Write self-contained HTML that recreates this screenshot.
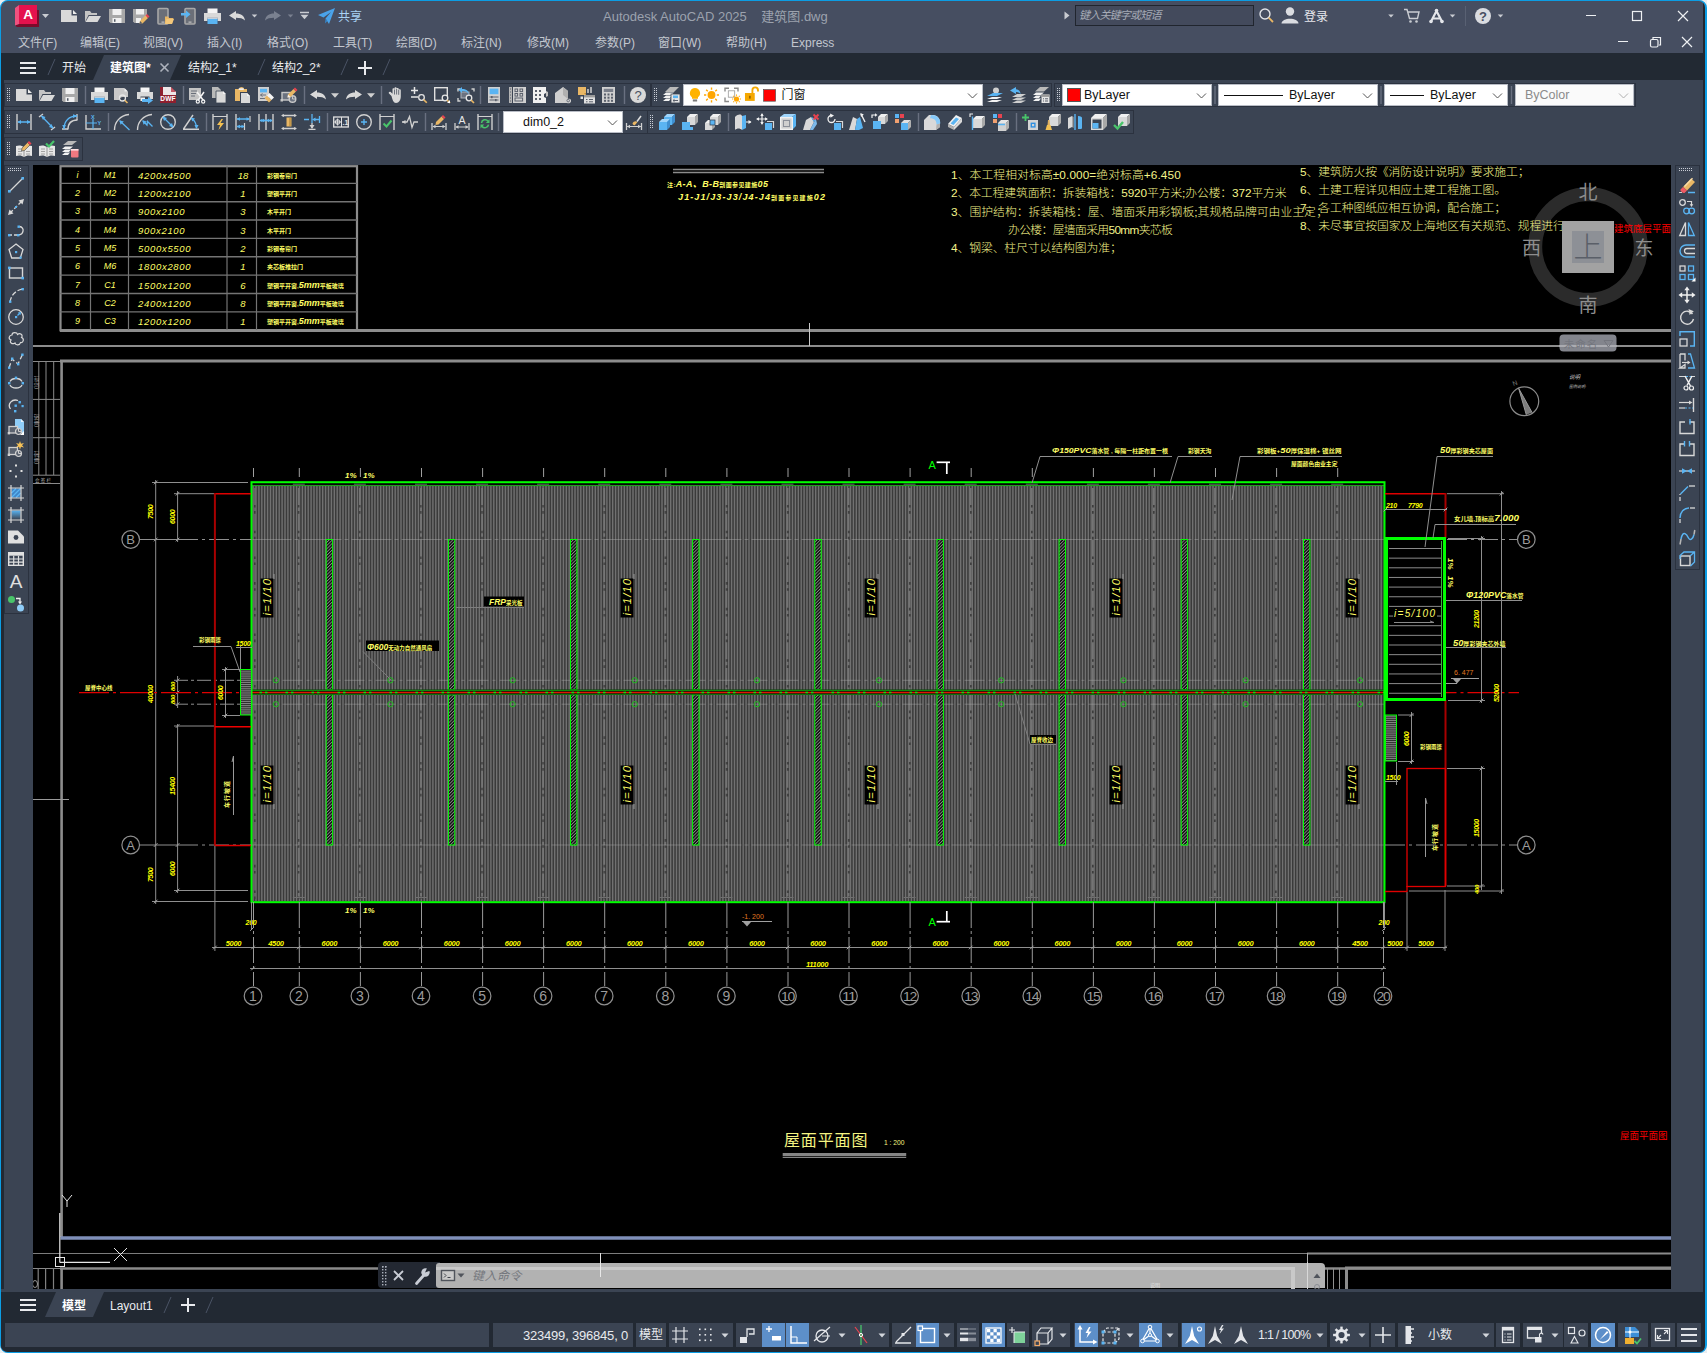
<!DOCTYPE html><html><head><meta charset="utf-8"><title>AutoCAD</title><style>
html,body{margin:0;padding:0}
body{width:1707px;height:1353px;overflow:hidden;background:#e9edf0;font-family:"Liberation Sans","Noto Sans CJK SC",sans-serif;font-size:12px;color:#d7dae0;position:relative}
.a{position:absolute}
#win{position:absolute;left:0;top:0;width:1707px;height:1353px;box-sizing:border-box;border:1px solid #0c9de4;border-right-width:2px;border-bottom-width:1px;border-radius:8px;background:#464e61;overflow:hidden}
#in{position:absolute;left:-1px;top:-1px;width:1707px;height:1353px}
.t{position:absolute;white-space:nowrap;line-height:1}
.pn{position:absolute;box-sizing:border-box;border:1px solid #2b323f;background:#3b4453}
.sp{position:absolute;background:#3b4453}
.ic{position:absolute;overflow:visible}
.dd{position:absolute;background:#fff;color:#111;box-sizing:border-box;border:1px solid #b9bdc6}
</style></head><body><div id="win"><div id="in"><div class="a" style="left:1px;top:53px;width:1703px;height:27px;background:#222933;"></div>
<div class="a" style="left:1px;top:80px;width:1703px;height:85px;background:#3b4453;"></div>
<div class="a" style="left:1px;top:80px;width:3px;height:1272px;background:#222933;"></div>
<div class="a" style="left:4px;top:165px;width:29px;height:1124px;background:#3b4453;"></div>
<div class="a" style="left:1671px;top:165px;width:33px;height:1124px;background:#3b4453;"></div>
<div class="a" style="left:1px;top:1289px;width:1703px;height:3px;background:#3b4453;"></div>
<div class="a" style="left:1px;top:1292px;width:1703px;height:61px;background:#222933;"></div>
<div class="a" style="left:1703px;top:1px;width:3px;height:1351px;background:#222730;"></div>
<svg class="a" style="left:0;top:0" width="1707" height="54"><polygon points="15,25.5 19,24 37,24 37,10 39,10 39,27 17,27" fill="#7c0b2b"/><polygon points="15,8 19,5 19,24 15,25.5" fill="#f0527f"/><rect x="19" y="5" width="18" height="19" fill="#e5114d"/><text x="28.2" y="19.4" font-size="13.5" font-weight="bold" fill="#fff" text-anchor="middle" font-family='"Liberation Sans",sans-serif'>A</text><polygon points="42.0,14.0 49.0,14.0 45.5,18.0" fill="#c9ccd2"/><g transform="translate(61 8)"><path d="M0 2H10.5V7.5H16V14H0Z" fill="#d9d9d9" stroke="none" stroke-width="1" /><path d="M12 2L16 6H12Z" fill="#ececec" stroke="none" stroke-width="1" /></g><g transform="translate(85 8)"><path d="M0 3H5L6.5 5H12V7H3.5L0 14Z" fill="#c4c4c4" stroke="none" stroke-width="1" /><path d="M4 8H16L12.5 14H0.5Z" fill="#d9d9d9" stroke="none" stroke-width="1" /></g><g transform="translate(109 8)"><path d="M0 1H16V15H1.5L0 13.5Z" fill="#a8a8a8" stroke="none" stroke-width="1" /><rect x="3.5" y="1" width="9" height="6" fill="#f0f0f0" stroke="none" stroke-width="1" /><rect x="3.5" y="10" width="9" height="5" fill="#f0f0f0" stroke="none" stroke-width="1" /><rect x="5" y="11.2" width="1.5" height="2.6" fill="#555c68" stroke="none" stroke-width="1" /></g><g transform="translate(133 8)"><path d="M0 1H14V10L9 15H1.5L0 13.5Z" fill="#a8a8a8" stroke="none" stroke-width="1" /><rect x="3" y="1" width="8" height="5.5" fill="#f0f0f0" stroke="none" stroke-width="1" /><path d="M3 10H8V15H3Z" fill="#f0f0f0" stroke="none" stroke-width="1" /><path d="M7 13L12.5 7.5L15 10L9.5 15.5L6.5 16Z" fill="#e9b765" stroke="none" stroke-width="1" /><path d="M12.5 7.5L14 6L16.5 8.5L15 10Z" fill="#e9434f" stroke="none" stroke-width="1" /><path d="M7 13L9.5 15.5L6.5 16Z" fill="#555c68" stroke="none" stroke-width="1" /></g><g transform="translate(157 8)"><rect x="1" y="0.5" width="10" height="15.5" fill="#6b6f78" stroke="#a8a8a8" stroke-width="1.6" rx="1"/><rect x="4.5" y="13.6" width="3" height="1" fill="#d0d0d0" stroke="none" stroke-width="1" /><path d="M8 8.5H11L12 10H16.5L15 16H8Z" fill="#e9b765" stroke="none" stroke-width="1" /><path d="M9.5 11H17L15 16H8Z" fill="#f3c77a" stroke="none" stroke-width="1" /></g><g transform="translate(181 8)"><rect x="4" y="0.5" width="10" height="15.5" fill="#6b6f78" stroke="#a8a8a8" stroke-width="1.6" rx="1"/><rect x="7.5" y="13.6" width="3" height="1" fill="#d0d0d0" stroke="none" stroke-width="1" /><path d="M0 5H5V2.5L9.5 6.2L5 10V7.5H0Z" fill="#5ab4f2" stroke="none" stroke-width="1" /></g><g transform="translate(204 8)"><rect x="3.5" y="0.5" width="10" height="5" fill="#f4f4f4" stroke="none" stroke-width="1" /><path d="M0 5H17V13H13.5V9.5H3.5V13H0Z" fill="#d9d9d9" stroke="none" stroke-width="1" /><rect x="3.5" y="10.5" width="10" height="5.5" fill="#5ab4f2" stroke="none" stroke-width="1" /><rect x="3.5" y="9.5" width="10" height="1.2" fill="#f4f4f4" stroke="none" stroke-width="1" /></g><g transform="translate(229 8)"><path d="M0 7.5L7 3V5.5C12 5.5 15.5 8 16 12.5C14 10.5 11 9.8 7 9.8V12Z" fill="#d9d9d9" stroke="none" stroke-width="1" /></g><g transform="translate(265 8)"><path d="M16 7.5L9 3V5.5C4 5.5 0.5 8 0 12.5C2 10.5 5 9.8 9 9.8V12Z" fill="#7a8190" stroke="none" stroke-width="1" /></g><polygon points="251.75,14.4 257.25,14.4 254.5,17.6" fill="#c9ccd2"/><polygon points="287.75,14.4 293.25,14.4 290.5,17.6" fill="#7a8190"/><line x1="300" y1="12.5" x2="309" y2="12.5" stroke="#c9ccd2" stroke-width="1.4"/><polygon points="300.5,14.8 308.5,14.8 304.5,19.2" fill="#c9ccd2"/><path d="M318 15L335 8L329 24L325.5 18.5L331 12L323.5 17.5Z" fill="#4aa3ea" stroke="none" stroke-width="1" /><path d="M325.5 18.5L325 23.5L327.5 21Z" fill="#3684c6" stroke="none" stroke-width="1" /><path d="M1064.5 11.5L1069.5 15.5L1064.5 19.5Z" fill="#c9ccd2" stroke="none" stroke-width="1" /><circle cx="1265" cy="14" r="5" fill="none" stroke="#e0e2e6" stroke-width="1.4"/><path d="M1268.7 17.7L1273 22" fill="none" stroke="#e9b765" stroke-width="1.8" /><circle cx="1290" cy="11.5" r="4.2" fill="#dadce1" stroke="none" stroke-width="0"/><path d="M1281.5 23.5C1281.5 17 1298.5 17 1298.5 23.5Z" fill="#dadce1" stroke="none" stroke-width="1" /><polygon points="1388.25,14.4 1393.75,14.4 1391,17.6" fill="#c9ccd2"/><path d="M1404 9.5H1407L1409.5 18.5H1417.5L1419 12H1408" fill="none" stroke="#c9ccd2" stroke-width="1.4" /><circle cx="1410.5" cy="21.5" r="1.3" fill="#c9ccd2" stroke="none" stroke-width="0"/><circle cx="1416.5" cy="21.5" r="1.3" fill="#c9ccd2" stroke="none" stroke-width="0"/><path d="M1436.5 11L1431 21.5M1436.5 11L1442 21.5M1432.5 18.5H1440.5" fill="none" stroke="#e4e6ea" stroke-width="2.2" /><circle cx="1436.5" cy="10.5" r="1.8" fill="#e4e6ea" stroke="none" stroke-width="0"/><circle cx="1431" cy="21.5" r="1.8" fill="#e4e6ea" stroke="none" stroke-width="0"/><circle cx="1442" cy="21.5" r="1.8" fill="#e4e6ea" stroke="none" stroke-width="0"/><polygon points="1449.75,14.4 1455.25,14.4 1452.5,17.6" fill="#c9ccd2"/><line x1="1465.5" y1="6" x2="1465.5" y2="26" stroke="#596173" stroke-width="1"/><circle cx="1483" cy="16" r="8" fill="#dadce1" stroke="none" stroke-width="0"/><text x="1483" y="20.6" font-size="13" font-weight="bold" fill="#464e61" text-anchor="middle" font-family='"Liberation Sans",sans-serif'>?</text><polygon points="1497.75,14.4 1503.25,14.4 1500.5,17.6" fill="#c9ccd2"/><path d="M1586 15.5H1596" fill="none" stroke="#eef0f3" stroke-width="1.2" /><rect x="1632.5" y="11.5" width="9" height="9" fill="none" stroke="#eef0f3" stroke-width="1.2" /><path d="M1678 11L1688 21M1688 11L1678 21" fill="none" stroke="#eef0f3" stroke-width="1.2" /><path d="M1618 41.5H1628" fill="none" stroke="#eef0f3" stroke-width="1.2" /><rect x="1650.5" y="39.5" width="7.5" height="7.5" fill="none" stroke="#eef0f3" stroke-width="1.2" rx="1.5"/><path d="M1653 39V37.5H1660.5V45H1659" fill="none" stroke="#eef0f3" stroke-width="1.2" /><path d="M1682 37L1692 47M1692 37L1682 47" fill="none" stroke="#eef0f3" stroke-width="1.2" /></svg>
<div class="t" style="left:603px;top:9.6px;font-size:13px;color:#9ca2ae;">Autodesk AutoCAD 2025&nbsp;&nbsp;&nbsp;&nbsp;建筑图.dwg</div>
<div class="t" style="left:338px;top:10.5px;font-size:12px;color:#a9d2f3;">共享</div>
<div class="a" style="left:1075px;top:5px;width:179px;height:21px;box-sizing:border-box;border:1px solid #20252e;background:#434a5c"></div>
<div class="t" style="left:1079px;top:10.0px;font-size:11px;color:#a6abb6;letter-spacing:-0.8px"><i>键入关键字或短语</i></div>
<div class="t" style="left:1304px;top:10.5px;font-size:12px;color:#e6e8ec;">登录</div>
<div class="t" style="left:18px;top:36.5px;font-size:12px;color:#c3c7cf;">文件(F)</div>
<div class="t" style="left:80px;top:36.5px;font-size:12px;color:#c3c7cf;">编辑(E)</div>
<div class="t" style="left:143px;top:36.5px;font-size:12px;color:#c3c7cf;">视图(V)</div>
<div class="t" style="left:207px;top:36.5px;font-size:12px;color:#c3c7cf;">插入(I)</div>
<div class="t" style="left:267px;top:36.5px;font-size:12px;color:#c3c7cf;">格式(O)</div>
<div class="t" style="left:333px;top:36.5px;font-size:12px;color:#c3c7cf;">工具(T)</div>
<div class="t" style="left:396px;top:36.5px;font-size:12px;color:#c3c7cf;">绘图(D)</div>
<div class="t" style="left:461px;top:36.5px;font-size:12px;color:#c3c7cf;">标注(N)</div>
<div class="t" style="left:527px;top:36.5px;font-size:12px;color:#c3c7cf;">修改(M)</div>
<div class="t" style="left:595px;top:36.5px;font-size:12px;color:#c3c7cf;">参数(P)</div>
<div class="t" style="left:658px;top:36.5px;font-size:12px;color:#c3c7cf;">窗口(W)</div>
<div class="t" style="left:726px;top:36.5px;font-size:12px;color:#c3c7cf;">帮助(H)</div>
<div class="t" style="left:791px;top:36.5px;font-size:12px;color:#c3c7cf;">Express</div>
<svg class="a" style="left:0;top:53px" width="420" height="27"><polygon points="93,27 104,2 181,2 170,27" fill="#3b4453"/><g stroke="#4a5365" stroke-width="1"><line x1="48" y1="22" x2="55" y2="6"/><line x1="258" y1="22" x2="265" y2="6"/><line x1="341" y1="22" x2="348" y2="6"/><line x1="383" y1="22" x2="390" y2="6"/></g><g stroke="#e9ebee" stroke-width="2"><line x1="20" y1="10" x2="36" y2="10"/><line x1="20" y1="15" x2="36" y2="15"/><line x1="20" y1="20" x2="36" y2="20"/><line x1="358" y1="15" x2="372" y2="15"/><line x1="365" y1="8" x2="365" y2="22"/></g><g stroke="#aeb3bd" stroke-width="1.6"><line x1="160.5" y1="10.5" x2="168.5" y2="18.5"/><line x1="168.5" y1="10.5" x2="160.5" y2="18.5"/></g></svg>
<div class="t" style="left:62px;top:61.5px;font-size:12px;color:#e9ebee;">开始</div>
<div class="t" style="left:110px;top:61.5px;font-size:12px;color:#ffffff;font-weight:bold">建筑图*</div>
<div class="t" style="left:188px;top:61.5px;font-size:12px;color:#e9ebee;">结构2_1*</div>
<div class="t" style="left:272px;top:61.5px;font-size:12px;color:#e9ebee;">结构2_2*</div>
<div class="pn" style="left:4px;top:83px;width:647px;height:24px"></div>
<div class="pn" style="left:651px;top:83px;width:401px;height:24px"></div>
<div class="pn" style="left:1054px;top:83px;width:582px;height:24px"></div>
<div class="pn" style="left:4px;top:110px;width:644px;height:24px"></div>
<div class="pn" style="left:647px;top:110px;width:487px;height:24px"></div>
<div class="pn" style="left:4px;top:137px;width:79px;height:24px"></div>
<svg class="a" style="left:0;top:80px" width="1707" height="85" viewBox="0 80 1707 85">
<rect x="7" y="88" width="1" height="1" fill="#c9cdd5"/><rect x="7" y="90" width="1" height="1" fill="#c9cdd5"/><rect x="7" y="92" width="1" height="1" fill="#c9cdd5"/><rect x="7" y="94" width="1" height="1" fill="#c9cdd5"/><rect x="7" y="96" width="1" height="1" fill="#c9cdd5"/><rect x="7" y="98" width="1" height="1" fill="#c9cdd5"/><rect x="7" y="100" width="1" height="1" fill="#c9cdd5"/><rect x="9" y="88" width="1" height="1" fill="#c9cdd5"/><rect x="9" y="90" width="1" height="1" fill="#c9cdd5"/><rect x="9" y="92" width="1" height="1" fill="#c9cdd5"/><rect x="9" y="94" width="1" height="1" fill="#c9cdd5"/><rect x="9" y="96" width="1" height="1" fill="#c9cdd5"/><rect x="9" y="98" width="1" height="1" fill="#c9cdd5"/><rect x="9" y="100" width="1" height="1" fill="#c9cdd5"/>
<g transform="translate(16 87)"><path d="M0 2H10.5V7.5H16V14H0Z" fill="#d9d9d9" stroke="none" stroke-width="1" /><path d="M12 2L16 6H12Z" fill="#ececec" stroke="none" stroke-width="1" /></g>
<g transform="translate(39 87)"><path d="M0 3H5L6.5 5H12V7H3.5L0 14Z" fill="#c4c4c4" stroke="none" stroke-width="1" /><path d="M4 8H16L12.5 14H0.5Z" fill="#d9d9d9" stroke="none" stroke-width="1" /></g>
<g transform="translate(62 87)"><path d="M0 1H16V15H1.5L0 13.5Z" fill="#a8a8a8" stroke="none" stroke-width="1" /><rect x="3.5" y="1" width="9" height="6" fill="#f0f0f0" stroke="none" stroke-width="1" /><rect x="3.5" y="10" width="9" height="5" fill="#f0f0f0" stroke="none" stroke-width="1" /><rect x="5" y="11.2" width="1.5" height="2.6" fill="#555c68" stroke="none" stroke-width="1" /></g>
<line x1="85.5" y1="86" x2="85.5" y2="104" stroke="#697080" stroke-width="1.4"/>
<g transform="translate(91 87)"><rect x="3.5" y="0.5" width="10" height="5" fill="#f4f4f4" stroke="none" stroke-width="1" /><path d="M0 5H17V13H13.5V9.5H3.5V13H0Z" fill="#d9d9d9" stroke="none" stroke-width="1" /><rect x="3.5" y="10.5" width="10" height="5.5" fill="#5ab4f2" stroke="none" stroke-width="1" /><rect x="3.5" y="9.5" width="10" height="1.2" fill="#f4f4f4" stroke="none" stroke-width="1" /></g>
<g transform="translate(114 87)"><path d="M0 1H10L14 5V10H9A4 4 0 0 0 5 13H0Z" fill="#c9c9c9" stroke="none" stroke-width="1" /><path d="M10.5 1L14 4.5H10.5Z" fill="#f0f0f0" stroke="none" stroke-width="1" /><circle cx="8.5" cy="11" r="3" fill="none" stroke="#e6e6e6" stroke-width="1.3"/><path d="M10.8 13.3L13.5 16" fill="none" stroke="#e9b765" stroke-width="1.6" /></g>
<g transform="translate(137 87)"><rect x="3.5" y="0.5" width="9" height="5" fill="#f4f4f4" stroke="none" stroke-width="1" /><path d="M0 5H16V12H12.5V9.5H3.5V12H0Z" fill="#d9d9d9" stroke="none" stroke-width="1" /><path d="M3.5 10.5H8V14H3.5Z" fill="#f4f4f4" stroke="none" stroke-width="1" /><path d="M5 12H11V10L16 13.5L11 17V15H5Z" fill="#5ab4f2" stroke="none" stroke-width="1" /></g>
<g transform="translate(160 87)"><path d="M0 0H11L16 5V16H0Z" fill="#8e1f2f" stroke="none" stroke-width="1" /><path d="M3 0H11V4.5H16V8H3Z" fill="#f1f1f1" stroke="none" stroke-width="1" opacity=".95"/><path d="M11 0L16 5H11Z" fill="#c45a66" stroke="none" stroke-width="1" /><text x="8" y="14.2" font-size="6.6" font-weight="bold" fill="#fff" text-anchor="middle" font-family='"Liberation Sans",sans-serif' letter-spacing="0.2">DWF</text></g>
<line x1="183.5" y1="86" x2="183.5" y2="104" stroke="#697080" stroke-width="1.4"/>
<g transform="translate(189 87)"><path d="M0 1H12V9L9 13H0Z" fill="#c4c4c4" stroke="none" stroke-width="1" /><path d="M2 4H8M2 6.5H7M2 9H6" fill="none" stroke="#6a707b" stroke-width="1" /><path d="M8 5L14.5 13.5M15 5L9 13.5" fill="none" stroke="#f4f4f4" stroke-width="1.5" /><circle cx="8.8" cy="14.5" r="1.6" fill="none" stroke="#f4f4f4" stroke-width="1.2"/><circle cx="14.2" cy="14.5" r="1.6" fill="none" stroke="#f4f4f4" stroke-width="1.2"/></g>
<g transform="translate(212 87)"><path d="M0 0H6L9 3V11H0Z" fill="#b9b9b9" stroke="none" stroke-width="1" /><path d="M4 4H11L14 7V16H4Z" fill="#d9d9d9" stroke="#3b4453" stroke-width="0.8" /><path d="M11 4L14 7H11Z" fill="#f4f4f4" stroke="none" stroke-width="1" /></g>
<g transform="translate(235 87)"><path d="M0 2H4A2.5 2 0 0 1 9 2H12V5H5V14H0Z" fill="#e9b765" stroke="none" stroke-width="1" /><rect x="3.5" y="1.2" width="5.5" height="1.8" fill="#f0f0f0" stroke="none" stroke-width="0" rx=".9"/><path d="M6 6H12L15 9V16H6Z" fill="#d9d9d9" stroke="none" stroke-width="1" /><path d="M12 6L15 9H12Z" fill="#f4f4f4" stroke="none" stroke-width="1" /></g>
<g transform="translate(258 87)"><rect x="0" y="0" width="11" height="14" fill="#cfcfcf" stroke="none" stroke-width="1" /><rect x="2" y="1.8" width="7" height="3.6" fill="#5ab4f2" stroke="none" stroke-width="1" /><path d="M2.5 8H8M4.5 6.5L2.5 8L4.5 9.5M2 11.5H7" fill="none" stroke="#6a707b" stroke-width="1" /><path d="M6.5 11L9 8.5L13.5 13L11 15.5Z" fill="#e9b765" stroke="none" stroke-width="1" /><path d="M9 8.5L11.5 6L16 10.5L13.5 13Z" fill="#f4f4f4" stroke="none" stroke-width="1" /></g>
<g transform="translate(281 87)"><rect x="1" y="5.5" width="9" height="7.5" fill="#6b7280" stroke="#c8c8c8" stroke-width="1.4" /><rect x="-0.5" y="12" width="2.5" height="2.5" fill="#c8c8c8" stroke="none" stroke-width="1" /><circle cx="11.5" cy="12" r="3.3" fill="#6b7280" stroke="#c8c8c8" stroke-width="1.4"/><path d="M11.5 9V12H14.5" fill="none" stroke="#c8c8c8" stroke-width="1" /><path d="M7 7.5L12.5 2L15 4.5L9.5 10L6.5 10.5Z" fill="#e9b765" stroke="none" stroke-width="1" /><path d="M12.5 2L14 0.5L16.5 3L15 4.5Z" fill="#e9434f" stroke="none" stroke-width="1" /><path d="M7 7.5L9.5 10L6.5 10.5Z" fill="#f4f4f4" stroke="none" stroke-width="1" /></g>
<line x1="304.5" y1="86" x2="304.5" y2="104" stroke="#697080" stroke-width="1.4"/>
<g transform="translate(310 87)"><path d="M0 7.5L7 3V5.5C12 5.5 15.5 8 16 12.5C14 10.5 11 9.8 7 9.8V12Z" fill="#d9d9d9" stroke="none" stroke-width="1" /></g>
<polygon points="331.0,93.2 339.0,93.2 335,97.8" fill="#d0d0d0"/>
<g transform="translate(346 87)"><path d="M16 7.5L9 3V5.5C4 5.5 0.5 8 0 12.5C2 10.5 5 9.8 9 9.8V12Z" fill="#d9d9d9" stroke="none" stroke-width="1" /></g>
<polygon points="367.0,93.2 375.0,93.2 371,97.8" fill="#d0d0d0"/>
<line x1="381.5" y1="86" x2="381.5" y2="104" stroke="#697080" stroke-width="1.4"/>
<g transform="translate(388 87)"><path d="M3.5 9L1 6.5C0 5.5 1.5 4 2.7 5L4.5 6.8V2.2C4.5 .8 6.5 .8 6.5 2.2V1.2C6.5 -.2 8.6 -.2 8.6 1.2V2C8.6 .6 10.7 .6 10.7 2V3.2C10.7 2 12.8 2 12.8 3.4V9.5C12.8 13 11 16 8 16C5.5 16 4.5 13 3.5 9Z" fill="#d9d9d9" stroke="none" stroke-width="1" /><path d="M6.5 2.5V7.5M8.6 2V7.5M10.7 3V7.8" fill="none" stroke="#3b4453" stroke-width="0.7" /></g>
<g transform="translate(411 87)"><path d="M0 3.5H7M3.5 0V7M0 10H7" fill="none" stroke="#e6e6e6" stroke-width="1.5" /><circle cx="10.5" cy="10.5" r="2.8" fill="none" stroke="#e6e6e6" stroke-width="1.3"/><path d="M12.6 12.6L15.8 15.8" fill="none" stroke="#e9b765" stroke-width="1.6" /></g>
<g transform="translate(434 87)"><rect x="0.7" y="0.7" width="12.6" height="12.6" fill="none" stroke="#e0e0e0" stroke-width="1.4" /><circle cx="11" cy="11" r="2.8" fill="#3b4453" stroke="#e6e6e6" stroke-width="1.3"/><path d="M13.1 13.1L16 16" fill="none" stroke="#e9b765" stroke-width="1.6" /><path d="M13 16H16V13Z" fill="#fff" stroke="none" stroke-width="1" /></g>
<g transform="translate(458 87)"><path d="M0 4.5V2H2.5M13.5 2H16V4.5M0 11V14H2.5" fill="none" stroke="#d0d0d0" stroke-width="1.4" /><rect x="3" y="5" width="8" height="6" fill="#6b7280" stroke="#aeb3bb" stroke-width="1" /><circle cx="11" cy="11" r="2.8" fill="#3b4453" stroke="#e6e6e6" stroke-width="1.3"/><path d="M13.1 13.1L16 16" fill="none" stroke="#e9b765" stroke-width="1.6" /><path d="M4 0L0.5 3L4 6V4C8 4 10 5 10.5 7.5C11 3.5 8 2 4 2Z" fill="#5ab4f2" stroke="none" stroke-width="1" /></g>
<line x1="480.5" y1="86" x2="480.5" y2="104" stroke="#697080" stroke-width="1.4"/>
<g transform="translate(487 87)"><rect x="1" y="0" width="12" height="16" fill="#d0d0d0" stroke="none" stroke-width="1" /><rect x="2.6" y="1.6" width="8.8" height="5.6" fill="#5ab4f2" stroke="none" stroke-width="1" /><path d="M2.5 10H11.5M2.5 13H11.5" fill="none" stroke="#5a606c" stroke-width="1" /><rect x="4" y="9" width="1.6" height="2.2" fill="#5a606c" stroke="none" stroke-width="1" /><rect x="8" y="12" width="1.6" height="2.2" fill="#5a606c" stroke="none" stroke-width="1" /></g>
<g transform="translate(509 87)"><rect x="0" y="0" width="3" height="16" fill="#b5b5b5" stroke="none" stroke-width="1" /><path d="M1 2h1M1 5h1M1 8h1M1 11h1M1 14h1" fill="none" stroke="#5a606c" stroke-width="1" /><rect x="4" y="0" width="13" height="16" fill="#d0d0d0" stroke="none" stroke-width="1" /><rect x="6" y="2" width="2.6" height="2.6" fill="none" stroke="#5a606c" stroke-width="1" /><rect x="6" y="6.5" width="2.6" height="2.6" fill="none" stroke="#5a606c" stroke-width="1" /><rect x="11" y="2" width="2.6" height="2.6" fill="none" stroke="#5a606c" stroke-width="1" /><rect x="11" y="6.5" width="2.6" height="2.6" fill="none" stroke="#5a606c" stroke-width="1" /><rect x="6" y="11" width="7.6" height="3" fill="none" stroke="#5a606c" stroke-width="1" /></g>
<g transform="translate(533 87)"><path d="M0 0H13V6L11 7V10L13 11V16H0Z" fill="#f0f0f0" stroke="none" stroke-width="1" /><rect x="2" y="3" width="2" height="2" fill="#5a606c" stroke="none" stroke-width="1" /><rect x="6" y="3" width="2" height="2" fill="#5a606c" stroke="none" stroke-width="1" /><rect x="2" y="7" width="2" height="2" fill="#5a606c" stroke="none" stroke-width="1" /><rect x="6" y="7" width="2" height="2" fill="#5a606c" stroke="none" stroke-width="1" /><rect x="2" y="11" width="2" height="2" fill="#5a606c" stroke="none" stroke-width="1" /><rect x="6" y="11" width="2" height="2" fill="#5a606c" stroke="none" stroke-width="1" /><path d="M13 4L15 5V9L13 10Z" fill="#c0c0c0" stroke="none" stroke-width="1" /></g>
<g transform="translate(555 87)"><path d="M0 6L8 0L13 4V12C15 11 16.5 12.5 16 14.5C15.5 16.5 13 16.5 12 16H0Z" fill="#cfcfcf" stroke="none" stroke-width="1" /><path d="M8 0L13 4V12L8 8Z" fill="#b0b0b0" stroke="none" stroke-width="1" /><circle cx="13.2" cy="13.6" r="1.3" fill="none" stroke="#6a707b" stroke-width="1"/></g>
<g transform="translate(578 87)"><rect x="0" y="0" width="8" height="8" fill="#e9b765" stroke="none" stroke-width="1" /><path d="M6 6H8V8Z" fill="#b98a3c" stroke="none" stroke-width="1" /><path d="M10 2V6M13 0V6" fill="none" stroke="#c8c8c8" stroke-width="1.6" /><rect x="6" y="8" width="11" height="8.5" fill="#e0e0e0" stroke="none" stroke-width="1" /><rect x="6" y="8" width="11" height="2.4" fill="#9a9a9a" stroke="none" stroke-width="1" /><rect x="2.5" y="9.5" width="2.5" height="2.5" fill="#e0e0e0" stroke="none" stroke-width="1" /><path d="M8 12.5H9.5M11 12.5H15M8 14.8H9.5M11 14.8H15" fill="none" stroke="#5a606c" stroke-width="1" /></g>
<g transform="translate(601 87)"><rect x="1" y="0" width="13" height="16" fill="#d0d0d0" stroke="none" stroke-width="1" /><rect x="2.8" y="1.8" width="9.4" height="3.2" fill="#7a7f8a" stroke="none" stroke-width="1" /><rect x="3" y="6.5" width="2" height="2" fill="#5a606c" stroke="none" stroke-width="1" /><rect x="3" y="9.7" width="2" height="2" fill="#5a606c" stroke="none" stroke-width="1" /><rect x="3" y="12.8" width="2" height="2" fill="#5a606c" stroke="none" stroke-width="1" /><rect x="6.5" y="6.5" width="2" height="2" fill="#5a606c" stroke="none" stroke-width="1" /><rect x="6.5" y="9.7" width="2" height="2" fill="#5a606c" stroke="none" stroke-width="1" /><rect x="6.5" y="12.8" width="2" height="2" fill="#5a606c" stroke="none" stroke-width="1" /><rect x="10" y="6.5" width="2" height="2" fill="#5a606c" stroke="none" stroke-width="1" /><rect x="10" y="9.7" width="2" height="2" fill="#5a606c" stroke="none" stroke-width="1" /><rect x="10" y="12.8" width="2" height="2" fill="#5a606c" stroke="none" stroke-width="1" /></g>
<line x1="624.5" y1="86" x2="624.5" y2="104" stroke="#697080" stroke-width="1.4"/>
<g transform="translate(630 87)"><circle cx="8" cy="8" r="8" fill="#d9d9d9" stroke="none" stroke-width="0"/><text x="8" y="12.6" font-size="13" fill="#4a5162" text-anchor="middle" font-family='"Liberation Sans",sans-serif'>?</text></g>
<rect x="654" y="88" width="1" height="1" fill="#c9cdd5"/><rect x="654" y="90" width="1" height="1" fill="#c9cdd5"/><rect x="654" y="92" width="1" height="1" fill="#c9cdd5"/><rect x="654" y="94" width="1" height="1" fill="#c9cdd5"/><rect x="654" y="96" width="1" height="1" fill="#c9cdd5"/><rect x="654" y="98" width="1" height="1" fill="#c9cdd5"/><rect x="654" y="100" width="1" height="1" fill="#c9cdd5"/><rect x="656" y="88" width="1" height="1" fill="#c9cdd5"/><rect x="656" y="90" width="1" height="1" fill="#c9cdd5"/><rect x="656" y="92" width="1" height="1" fill="#c9cdd5"/><rect x="656" y="94" width="1" height="1" fill="#c9cdd5"/><rect x="656" y="96" width="1" height="1" fill="#c9cdd5"/><rect x="656" y="98" width="1" height="1" fill="#c9cdd5"/><rect x="656" y="100" width="1" height="1" fill="#c9cdd5"/>
<g transform="translate(663 87)"><path d="M7 0L16 0L11 5H2Z" fill="#b9b9b9" stroke="none" stroke-width="1" /><path d="M0 8L3 5.5H11L8 8Z" fill="#f2f2f2" stroke="none" stroke-width="1" /><path d="M0 11L3 8.5H9L7 11Z" fill="#f2f2f2" stroke="none" stroke-width="1" /><path d="M0 14L3 11.5H8L6 14Z" fill="#f2f2f2" stroke="none" stroke-width="1" /><rect x="8" y="7" width="9" height="9" fill="#e6e6e6" stroke="#3b4453" stroke-width="0.8" /><rect x="10" y="8.5" width="5" height="2.6" fill="#5ab4f2" stroke="none" stroke-width="1" /><path d="M10 13.5H15M11.5 12.3L10 13.5L11.5 14.7" fill="none" stroke="#5a606c" stroke-width="1" /></g>
<rect x="1057" y="88" width="1" height="1" fill="#c9cdd5"/><rect x="1057" y="90" width="1" height="1" fill="#c9cdd5"/><rect x="1057" y="92" width="1" height="1" fill="#c9cdd5"/><rect x="1057" y="94" width="1" height="1" fill="#c9cdd5"/><rect x="1057" y="96" width="1" height="1" fill="#c9cdd5"/><rect x="1057" y="98" width="1" height="1" fill="#c9cdd5"/><rect x="1057" y="100" width="1" height="1" fill="#c9cdd5"/><rect x="1059" y="88" width="1" height="1" fill="#c9cdd5"/><rect x="1059" y="90" width="1" height="1" fill="#c9cdd5"/><rect x="1059" y="92" width="1" height="1" fill="#c9cdd5"/><rect x="1059" y="94" width="1" height="1" fill="#c9cdd5"/><rect x="1059" y="96" width="1" height="1" fill="#c9cdd5"/><rect x="1059" y="98" width="1" height="1" fill="#c9cdd5"/><rect x="1059" y="100" width="1" height="1" fill="#c9cdd5"/>
<g transform="translate(987 87)"><circle cx="9" cy="3.4" r="3" fill="#cfcfcf" stroke="none" stroke-width="0"/><path d="M0 9L6 6H16L10 9Z" fill="#5ab4f2" stroke="none" stroke-width="1" /><path d="M0 12L5 10H15L10 12Z" fill="#f2f2f2" stroke="none" stroke-width="1" /><path d="M0 15L5 13H15L10 15Z" fill="#f2f2f2" stroke="none" stroke-width="1" /></g>
<g transform="translate(1010 87)"><path d="M6 0L0 3.5L6 7V5C9 5 10 6 10.5 7.5C10.5 4 9 2.5 6 2.2Z" fill="#5ab4f2" stroke="none" stroke-width="1" /><path d="M2 10L7 7H16L11 10Z" fill="#cfcfcf" stroke="none" stroke-width="1" /><path d="M2 13L7 10.6H16L11 13Z" fill="#cfcfcf" stroke="none" stroke-width="1" /><path d="M2 16L7 13.6H16L11 16Z" fill="#cfcfcf" stroke="none" stroke-width="1" /></g>
<g transform="translate(1033 87)"><path d="M7 0H16L11 4.5H2Z" fill="#b9b9b9" stroke="none" stroke-width="1" /><path d="M0 8L3 5.5H11L8 8Z" fill="#f2f2f2" stroke="none" stroke-width="1" /><path d="M0 11L3 8.5H8L6 11Z" fill="#f2f2f2" stroke="none" stroke-width="1" /><path d="M0 14L3 11.5H8L6 14Z" fill="#f2f2f2" stroke="none" stroke-width="1" /><rect x="8.5" y="7.5" width="8" height="8.5" fill="#e6e6e6" stroke="none" stroke-width="1" /><rect x="8.5" y="7.5" width="8" height="2.4" fill="#9a9a9a" stroke="none" stroke-width="1" /><path d="M10 11.8H11M12 11.8H15M10 14H11M12 14H15" fill="none" stroke="#5a606c" stroke-width="1" /></g>
<line x1="1215" y1="86" x2="1215" y2="104" stroke="#697080" stroke-width="1.4"/><line x1="1381" y1="86" x2="1381" y2="104" stroke="#697080" stroke-width="1.4"/><line x1="1511.5" y1="86" x2="1511.5" y2="104" stroke="#697080" stroke-width="1.4"/>
<rect x="7" y="115" width="1" height="1" fill="#c9cdd5"/><rect x="7" y="117" width="1" height="1" fill="#c9cdd5"/><rect x="7" y="119" width="1" height="1" fill="#c9cdd5"/><rect x="7" y="121" width="1" height="1" fill="#c9cdd5"/><rect x="7" y="123" width="1" height="1" fill="#c9cdd5"/><rect x="7" y="125" width="1" height="1" fill="#c9cdd5"/><rect x="7" y="127" width="1" height="1" fill="#c9cdd5"/><rect x="9" y="115" width="1" height="1" fill="#c9cdd5"/><rect x="9" y="117" width="1" height="1" fill="#c9cdd5"/><rect x="9" y="119" width="1" height="1" fill="#c9cdd5"/><rect x="9" y="121" width="1" height="1" fill="#c9cdd5"/><rect x="9" y="123" width="1" height="1" fill="#c9cdd5"/><rect x="9" y="125" width="1" height="1" fill="#c9cdd5"/><rect x="9" y="127" width="1" height="1" fill="#c9cdd5"/>
<g transform="translate(16 114)"><path d="M1 0V16M15 0V16" fill="none" stroke="#d0d0d0" stroke-width="1.4" /><path d="M2 8H14" fill="none" stroke="#5ab4f2" stroke-width="1.3" /><path d="M1.5 8L5 6V10Z" fill="#5ab4f2" stroke="none" stroke-width="1" /><path d="M14.5 8L11 6V10Z" fill="#5ab4f2" stroke="none" stroke-width="1" /></g>
<g transform="translate(39 114)"><path d="M0 3L4 0M12 16L16 13" fill="none" stroke="#d0d0d0" stroke-width="1.4" /><path d="M2.5 2L14 14" fill="none" stroke="#5ab4f2" stroke-width="1.3" /><path d="M2 1.5L6.5 3L4 6Z" fill="#5ab4f2" stroke="none" stroke-width="1" /><path d="M14.5 14.5L10 13L12.5 10Z" fill="#5ab4f2" stroke="none" stroke-width="1" /></g>
<g transform="translate(62 114)"><path d="M0 15H6M15 0V6" fill="none" stroke="#d0d0d0" stroke-width="1.3" /><path d="M6 15.5C6 9 9 6 15.5 6" fill="none" stroke="#d0d0d0" stroke-width="1.4" /><path d="M2 15C2 7 7 2 15 2" fill="none" stroke="#5ab4f2" stroke-width="1.3" /><path d="M2 15.5L0.3 11H3.9Z" fill="#5ab4f2" stroke="none" stroke-width="1" /><path d="M15.5 2L11 0.3V3.9Z" fill="#5ab4f2" stroke="none" stroke-width="1" /></g>
<g transform="translate(85 114)"><path d="M1 1V15H16" fill="none" stroke="#d0d0d0" stroke-width="1.4" /><path d="M8 5V15M1 9H12" fill="none" stroke="#5ab4f2" stroke-width="1.2" /><text x="6" y="4.5" font-size="5.5" font-weight="bold" fill="#5ab4f2" font-family='"Liberation Sans",sans-serif'>X</text><text x="12.5" y="10.5" font-size="5.5" font-weight="bold" fill="#5ab4f2" font-family='"Liberation Sans",sans-serif'>Y</text></g>
<line x1="108.5" y1="113" x2="108.5" y2="131" stroke="#697080" stroke-width="1.4"/>
<g transform="translate(114 114)"><path d="M0.5 16C0.5 8 6 1.5 15 0.5" fill="none" stroke="#d0d0d0" stroke-width="1.4" /><path d="M6 7L15.5 16" fill="none" stroke="#5ab4f2" stroke-width="1.3" /><path d="M5.2 6.2L9.8 7.6L6.6 10.8Z" fill="#5ab4f2" stroke="none" stroke-width="1" /></g>
<g transform="translate(137 114)"><path d="M0.5 16C0.5 8 6 1.5 15 0.5" fill="none" stroke="#d0d0d0" stroke-width="1.4" /><path d="M6 7L10 11L10.5 7.5L15.5 12.5" fill="none" stroke="#5ab4f2" stroke-width="1.3" /><path d="M5.2 6.2L9.8 7.6L6.6 10.8Z" fill="#5ab4f2" stroke="none" stroke-width="1" /></g>
<g transform="translate(160 114)"><circle cx="8" cy="8" r="7.3" fill="none" stroke="#d0d0d0" stroke-width="1.4"/><path d="M3.5 3.5L12.5 12.5" fill="none" stroke="#5ab4f2" stroke-width="1.3" /><path d="M2.6 2.6L7 4L4 7Z" fill="#5ab4f2" stroke="none" stroke-width="1" /><path d="M13.4 13.4L9 12L12 9Z" fill="#5ab4f2" stroke="none" stroke-width="1" /></g>
<g transform="translate(183 114)"><path d="M0 15.3H16M0.5 15L10 1" fill="none" stroke="#d0d0d0" stroke-width="1.4" /><path d="M9 4.5C12 7 13.5 11 13.5 14" fill="none" stroke="#5ab4f2" stroke-width="1.3" /><path d="M7.6 3.4L12 4.6L9.4 7.6Z" fill="#5ab4f2" stroke="none" stroke-width="1" /><path d="M13.5 15L11.5 11H15.5Z" fill="#5ab4f2" stroke="none" stroke-width="1" /></g>
<line x1="206.5" y1="113" x2="206.5" y2="131" stroke="#697080" stroke-width="1.4"/>
<g transform="translate(212 114)"><path d="M1 0V16M15 0V16" fill="none" stroke="#d0d0d0" stroke-width="1.4" /><path d="M1 2.5H15" fill="none" stroke="#d0d0d0" stroke-width="1" /><path d="M9.5 5L5 11H8L6.5 16L12 9H8.5L11 5Z" fill="#f3c052" stroke="none" stroke-width="1" /></g>
<g transform="translate(235 114)"><path d="M1 0V16" fill="none" stroke="#d0d0d0" stroke-width="1.4" /><path d="M9.5 9V16M15 2V8" fill="none" stroke="#d0d0d0" stroke-width="1.2" /><path d="M2 5H14M2 12.5H9" fill="none" stroke="#5ab4f2" stroke-width="1.3" /><path d="M1.5 5L5 3.2V6.8Z" fill="#5ab4f2" stroke="none" stroke-width="1" /><path d="M15 5L11.5 3.2V6.8Z" fill="#5ab4f2" stroke="none" stroke-width="1" /><path d="M1.5 12.5L5 10.7V14.3Z" fill="#5ab4f2" stroke="none" stroke-width="1" /><path d="M9.5 12.5L6.5 10.7V14.3Z" fill="#5ab4f2" stroke="none" stroke-width="1" /></g>
<g transform="translate(258 114)"><path d="M1 0V16M8 0V16M15 0V16" fill="none" stroke="#d0d0d0" stroke-width="1.4" /><path d="M2 6.5H14" fill="none" stroke="#5ab4f2" stroke-width="1.3" /><path d="M1.5 6.5L4.5 4.8V8.2Z" fill="#5ab4f2" stroke="none" stroke-width="1" /><path d="M7.6 6.5L5 4.8V8.2Z" fill="#5ab4f2" stroke="none" stroke-width="1" /><path d="M8.4 6.5L11 4.8V8.2Z" fill="#5ab4f2" stroke="none" stroke-width="1" /><path d="M14.5 6.5L11.8 4.8V8.2Z" fill="#5ab4f2" stroke="none" stroke-width="1" /></g>
<g transform="translate(281 114)"><path d="M1 1.5H15M1 14.5H15" fill="none" stroke="#d0d0d0" stroke-width="1.3" /><path d="M0 1.5L3 0V3Z" fill="#d0d0d0" stroke="none" stroke-width="1" /><path d="M16 1.5L13 0V3Z" fill="#d0d0d0" stroke="none" stroke-width="1" /><path d="M0 14.5L3 13V16Z" fill="#d0d0d0" stroke="none" stroke-width="1" /><path d="M16 14.5L13 13V16Z" fill="#d0d0d0" stroke="none" stroke-width="1" /><rect x="5.5" y="3.5" width="5" height="9" fill="#e9b765" stroke="none" stroke-width="1" /><path d="M8 5h2.5M8 7h2.5M8 9h2.5M8 11h2.5" fill="none" stroke="#8a6a2a" stroke-width="0.8" /></g>
<g transform="translate(304 114)"><path d="M0 5.5H5M11 5.5H16M8 0V9" fill="none" stroke="#5ab4f2" stroke-width="1.3" /><path d="M8 5.5L11.5 3.5V7.5Z" fill="#5ab4f2" stroke="none" stroke-width="1" /><path d="M15.5 2V9" fill="none" stroke="#5ab4f2" stroke-width="1.3" /><path d="M8 9V14M4.5 15.3H11.5" fill="none" stroke="#d0d0d0" stroke-width="1.3" /><path d="M8 15L5.5 11H10.5Z" fill="#d0d0d0" stroke="none" stroke-width="1" /></g>
<line x1="327.5" y1="113" x2="327.5" y2="131" stroke="#697080" stroke-width="1.4"/>
<g transform="translate(333 114)"><rect x="0.7" y="3" width="14.6" height="10" fill="none" stroke="#e0e0e0" stroke-width="1.3" /><path d="M8.5 3V13" fill="none" stroke="#e0e0e0" stroke-width="1" /><circle cx="4.6" cy="8" r="2.3" fill="none" stroke="#e0e0e0" stroke-width="1"/><path d="M4.6 4.5V11.5M1.2 8H8" fill="none" stroke="#e0e0e0" stroke-width="1" /><text x="9.5" y="11" font-size="7" font-weight="bold" fill="#e0e0e0" font-family='"Liberation Sans",sans-serif'>.1</text></g>
<g transform="translate(356 114)"><circle cx="8" cy="8" r="7.3" fill="none" stroke="#d0d0d0" stroke-width="1.4"/><path d="M5 8H11M8 5V11" fill="none" stroke="#5ab4f2" stroke-width="1.4" /></g>
<g transform="translate(379 114)"><path d="M1 0V16M15 0V16" fill="none" stroke="#d0d0d0" stroke-width="1.4" /><path d="M1 2.5H15" fill="none" stroke="#d0d0d0" stroke-width="1" /><path d="M4.5 9.5L7.5 12.5L12.5 6.5" fill="none" stroke="#49c46a" stroke-width="2" /></g>
<g transform="translate(402 114)"><path d="M0 8H5L7.5 2.5L10 13.5L12 8H16" fill="none" stroke="#d0d0d0" stroke-width="1.3" /><path d="M0 8L3.5 6V10Z" fill="#d0d0d0" stroke="none" stroke-width="1" /></g>
<line x1="425.5" y1="113" x2="425.5" y2="131" stroke="#697080" stroke-width="1.4"/>
<g transform="translate(431 114)"><path d="M1 9V16M15 9V16" fill="none" stroke="#d0d0d0" stroke-width="1.3" /><path d="M2 12.5H14" fill="none" stroke="#d0d0d0" stroke-width="1.2" /><path d="M1.5 12.5L4.5 10.8V14.2Z" fill="#d0d0d0" stroke="none" stroke-width="1" /><path d="M14.5 12.5L11.5 10.8V14.2Z" fill="#d0d0d0" stroke="none" stroke-width="1" /><path d="M5 8L10.5 2.5L13 5L7.5 10.5L4.5 11Z" fill="#e9b765" stroke="none" stroke-width="1" /><path d="M10.5 2.5L12 1L14.5 3.5L13 5Z" fill="#e9434f" stroke="none" stroke-width="1" /></g>
<g transform="translate(454 114)"><path d="M1 9V16M15 9V16" fill="none" stroke="#d0d0d0" stroke-width="1.3" /><path d="M2 13H14" fill="none" stroke="#d0d0d0" stroke-width="1.2" /><path d="M1.5 13L4.5 11.3V14.7Z" fill="#d0d0d0" stroke="none" stroke-width="1" /><path d="M14.5 13L11.5 11.3V14.7Z" fill="#d0d0d0" stroke="none" stroke-width="1" /><text x="8" y="9.5" font-size="10.5" fill="#e8e8e8" text-anchor="middle" font-family='"Liberation Sans",sans-serif'>A</text></g>
<g transform="translate(477 114)"><path d="M1 0V16M15 0V16" fill="none" stroke="#d0d0d0" stroke-width="1.4" /><path d="M1 2.5H15" fill="none" stroke="#d0d0d0" stroke-width="1" /><path d="M4.5 9A3.6 3.6 0 0 1 11 7.2M11.5 10.6A3.6 3.6 0 0 1 5 12.2" fill="none" stroke="#49c46a" stroke-width="1.5" /><path d="M12.5 5.2V9H8.8Z" fill="#49c46a" stroke="none" stroke-width="1" /><path d="M3.5 14.4V10.6H7.2Z" fill="#49c46a" stroke="none" stroke-width="1" /></g>
<line x1="498.5" y1="113" x2="498.5" y2="131" stroke="#697080" stroke-width="1.4"/>
<g transform="translate(626 114)"><path d="M0.5 9V16M15.5 9V16" fill="none" stroke="#d0d0d0" stroke-width="1.3" /><path d="M1 12.5H15" fill="none" stroke="#d0d0d0" stroke-width="1.2" /><path d="M1 12.5L4 10.8V14.2Z" fill="#d0d0d0" stroke="none" stroke-width="1" /><path d="M15 12.5L12 10.8V14.2Z" fill="#d0d0d0" stroke="none" stroke-width="1" /><path d="M6.5 9.5C7.5 7 10 6.5 11.5 8L9 11C8 11.5 7 11 6.5 9.5Z" fill="#e9b765" stroke="none" stroke-width="1" /><path d="M11 7.5L15 2" fill="none" stroke="#e0e0e0" stroke-width="1.5" /></g>
<rect x="650" y="115" width="1" height="1" fill="#c9cdd5"/><rect x="650" y="117" width="1" height="1" fill="#c9cdd5"/><rect x="650" y="119" width="1" height="1" fill="#c9cdd5"/><rect x="650" y="121" width="1" height="1" fill="#c9cdd5"/><rect x="650" y="123" width="1" height="1" fill="#c9cdd5"/><rect x="650" y="125" width="1" height="1" fill="#c9cdd5"/><rect x="650" y="127" width="1" height="1" fill="#c9cdd5"/><rect x="652" y="115" width="1" height="1" fill="#c9cdd5"/><rect x="652" y="117" width="1" height="1" fill="#c9cdd5"/><rect x="652" y="119" width="1" height="1" fill="#c9cdd5"/><rect x="652" y="121" width="1" height="1" fill="#c9cdd5"/><rect x="652" y="123" width="1" height="1" fill="#c9cdd5"/><rect x="652" y="125" width="1" height="1" fill="#c9cdd5"/><rect x="652" y="127" width="1" height="1" fill="#c9cdd5"/>
<g transform="translate(659 114)"><path d="M5 3H13V11H5Z" fill="#5ab4f2" stroke="none" stroke-width="1" /><path d="M5 3L8 0H16L13 3Z" fill="#9fd4fa" stroke="none" stroke-width="1" /><path d="M13 3L16 0V8L13 11Z" fill="#3f8fd0" stroke="none" stroke-width="1" /><path d="M0 8H8V16H0Z" fill="#5ab4f2" stroke="none" stroke-width="1" /><path d="M0 8L3 5H11L8 8Z" fill="#9fd4fa" stroke="none" stroke-width="1" /><path d="M8 8L11 5V13L8 16Z" fill="#3f8fd0" stroke="none" stroke-width="1" /></g>
<g transform="translate(682 114)"><path d="M5 3H13V11H5Z" fill="#d9d9d9" stroke="none" stroke-width="1" /><path d="M5 3L8 0H16L13 3Z" fill="#f0f0f0" stroke="none" stroke-width="1" /><path d="M13 3L16 0V8L13 11Z" fill="#a8a8a8" stroke="none" stroke-width="1" /><path d="M0 8H8V13H11V16H0Z" fill="#5ab4f2" stroke="none" stroke-width="1" /></g>
<g transform="translate(705 114)"><path d="M5 3H13V11H5Z" fill="#d9d9d9" stroke="none" stroke-width="1" /><path d="M5 3L8 0H16L13 3Z" fill="#f0f0f0" stroke="none" stroke-width="1" /><path d="M13 3L16 0V8L13 11Z" fill="#a8a8a8" stroke="none" stroke-width="1" /><path d="M0 9H7V16H0Z" fill="#d9d9d9" stroke="none" stroke-width="1" /><path d="M0 9L3 6H10L7 9Z" fill="#f0f0f0" stroke="none" stroke-width="1" /><path d="M7 9L10 6V13L7 16Z" fill="#a8a8a8" stroke="none" stroke-width="1" /><rect x="5" y="6" width="5" height="5" fill="#5ab4f2" stroke="#3b4453" stroke-width="0.8" /></g>
<line x1="728.5" y1="113" x2="728.5" y2="131" stroke="#697080" stroke-width="1.4"/>
<g transform="translate(735 114)"><path d="M0 3C3 0 6 0 7 2V16C5 14 2 14 0 16Z" fill="#d9d9d9" stroke="none" stroke-width="1" /><path d="M7 2L11 1V14L7 16Z" fill="#5ab4f2" stroke="none" stroke-width="1" /><path d="M11 8H16" fill="none" stroke="#f2f2f2" stroke-width="1.2" /><path d="M16.5 8L13.5 6V10Z" fill="#f2f2f2" stroke="none" stroke-width="1" /></g>
<g transform="translate(757 114)"><path d="M5 0V10M0 5H10" fill="none" stroke="#f2f2f2" stroke-width="1.2" /><path d="M5 -1L3.3 2H6.7Z M5 11L3.3 8H6.7Z M-1 5L2 3.3V6.7Z M11 5L8 3.3V6.7Z" fill="#f2f2f2" stroke="none" stroke-width="1" /><rect x="8" y="9" width="7" height="7" fill="#5ab4f2" stroke="none" stroke-width="1" /><path d="M10 7.5H16.5V14" fill="none" stroke="#d9d9d9" stroke-width="1.2" /></g>
<g transform="translate(780 114)"><path d="M0 3L4 0H16L12 3Z" fill="#9fd4fa" stroke="none" stroke-width="1" /><path d="M12 3L16 0V12L12 16Z" fill="#5ab4f2" stroke="none" stroke-width="1" /><rect x="0.7" y="3.7" width="11.6" height="11.6" fill="#cfcfcf" stroke="#f0f0f0" stroke-width="1.4" /><rect x="3.5" y="6.5" width="6" height="6" fill="#cfcfcf" stroke="#8a8f99" stroke-width="1" /></g>
<g transform="translate(803 114)"><path d="M0 16L3 6L8 3L11 8L7 16Z" fill="#d9d9d9" stroke="none" stroke-width="1" /><path d="M8 3L13 5L11 8Z" fill="#5ab4f2" stroke="none" stroke-width="1" /><path d="M7 16L11 8L13 5L14 10L10 16Z" fill="#7db9ea" stroke="none" stroke-width="1" /><path d="M10.5 0.5L15.5 5.5M15.5 0.5L10.5 5.5" fill="none" stroke="#e9434f" stroke-width="1.8" /></g>
<g transform="translate(826 114)"><path d="M5.5 1.5A3.5 3.5 0 1 0 9 5" fill="none" stroke="#f2f2f2" stroke-width="1.3" /><path d="M4 -0.5L8 1.5L4.5 3.8Z" fill="#f2f2f2" stroke="none" stroke-width="1" /><rect x="8" y="9" width="7" height="7" fill="#5ab4f2" stroke="none" stroke-width="1" /><path d="M10 7.5H16.5V14" fill="none" stroke="#d9d9d9" stroke-width="1.2" /></g>
<g transform="translate(849 114)"><path d="M0 16L4 3L8 5L6 16Z" fill="#d9d9d9" stroke="none" stroke-width="1" /><path d="M6 16L8 5L11 3L14 14L10 16Z" fill="#5ab4f2" stroke="none" stroke-width="1" /><path d="M12 0L16 8" fill="none" stroke="#f2f2f2" stroke-width="1.4" /><path d="M11.3 -1L14.8 .5L12 3Z" fill="#f2f2f2" stroke="none" stroke-width="1" /></g>
<g transform="translate(872 114)"><path d="M6 3H13V10H6Z" fill="#d9d9d9" stroke="none" stroke-width="1" /><path d="M6 3L9 0H16L13 3Z" fill="#f0f0f0" stroke="none" stroke-width="1" /><path d="M13 3L16 0V7L13 10Z" fill="#a8a8a8" stroke="none" stroke-width="1" /><rect x="1" y="7" width="8" height="8" fill="#5ab4f2" stroke="none" stroke-width="1" /><path d="M0 4V1H3" fill="none" stroke="#f2f2f2" stroke-width="1.2" /><path d="M3 -0.7L5.5 1L3 2.7Z" fill="#f2f2f2" stroke="none" stroke-width="1" /></g>
<g transform="translate(895 114)"><rect x="0" y="0" width="4" height="4" fill="#5ab4f2" stroke="none" stroke-width="1" /><rect x="5" y="0" width="4" height="4" fill="#e9434f" stroke="none" stroke-width="1" /><rect x="0" y="5" width="4" height="4" fill="#f0a070" stroke="none" stroke-width="1" /><path d="M6 9H13V16H6Z" fill="#5ab4f2" stroke="none" stroke-width="1" /><path d="M6 9L9 6H16L13 9Z" fill="#e0e0e0" stroke="none" stroke-width="1" /><path d="M13 9L16 6V13L13 16Z" fill="#b0b0b0" stroke="none" stroke-width="1" /></g>
<line x1="918.5" y1="113" x2="918.5" y2="131" stroke="#697080" stroke-width="1.4"/>
<g transform="translate(924 114)"><path d="M0 16V6L5 1H10C14 2 16 5 16 8V13L12 16Z" fill="#d9d9d9" stroke="none" stroke-width="1" /><path d="M7 1C13 1 16.3 4 16.3 9.5L12.5 10.5C12.5 6.5 10.5 4.3 6 4.3Z" fill="#86cafa" stroke="none" stroke-width="1" /><path d="M12 16L16 13V9.5L12.5 10.5Z" fill="#b0b0b0" stroke="none" stroke-width="1" /></g>
<g transform="translate(947 114)"><path d="M1 10L9 1L15 4L7 13Z" fill="#f0f0f0" stroke="none" stroke-width="1" /><path d="M1 10L7 13V16L1 13Z" fill="#b0b0b0" stroke="none" stroke-width="1" /><path d="M7 13L15 4V8L7 16Z" fill="#d9d9d9" stroke="none" stroke-width="1" /><path d="M3.5 9.5L9 3.5L12 5L6.5 11Z" fill="#5ab4f2" stroke="none" stroke-width="1" /></g>
<g transform="translate(970 114)"><path d="M3 5H12V14H3Z" fill="#d9d9d9" stroke="none" stroke-width="1" /><path d="M3 5L6 2H15L12 5Z" fill="#f0f0f0" stroke="none" stroke-width="1" /><path d="M12 5L15 2V11L12 14Z" fill="#a8a8a8" stroke="none" stroke-width="1" /><path d="M2.5 16V2.5" fill="none" stroke="#5ab4f2" stroke-width="1.4" /><path d="M0 3V0H3" fill="none" stroke="#f2f2f2" stroke-width="1.1" /></g>
<g transform="translate(993 114)"><rect x="0" y="0" width="4" height="4" fill="#5ab4f2" stroke="none" stroke-width="1" /><rect x="5" y="0" width="4" height="4" fill="#e9434f" stroke="none" stroke-width="1" /><rect x="0" y="5" width="4" height="4" fill="#f0a070" stroke="none" stroke-width="1" /><path d="M5 9H13V17H5Z" fill="#d0d0d0" stroke="none" stroke-width="1" /><path d="M5 9L8 6H16L13 9Z" fill="#e6e6e6" stroke="none" stroke-width="1" /><path d="M13 9L16 6V14L13 17Z" fill="#b0b0b0" stroke="none" stroke-width="1" /><path d="M5 10.5H12" fill="none" stroke="#5ab4f2" stroke-width="1.6" /></g>
<line x1="1016.5" y1="113" x2="1016.5" y2="131" stroke="#697080" stroke-width="1.4"/>
<g transform="translate(1022 114)"><path d="M3.5 0V7M0 3.5H7" fill="none" stroke="#49c46a" stroke-width="1.8" /><rect x="6" y="6" width="10" height="10" fill="#d4d4d4" stroke="none" stroke-width="1" /><rect x="9.3" y="9.3" width="3.6" height="3.6" fill="none" stroke="#2f8fe0" stroke-width="1.4" /></g>
<g transform="translate(1045 114)"><path d="M4 3H13V12H4Z" fill="#d9d9d9" stroke="none" stroke-width="1" /><path d="M4 3L7 0H16L13 3Z" fill="#f0f0f0" stroke="none" stroke-width="1" /><path d="M13 3L16 0V9L13 12Z" fill="#a8a8a8" stroke="none" stroke-width="1" /><path d="M3 6L4.5 6L5 11L2.5 11Z" fill="#e0b060" stroke="none" stroke-width="1" /><path d="M0.5 16L2 11H5.5L7 16Z" fill="#f3c052" stroke="none" stroke-width="1" /></g>
<g transform="translate(1068 114)"><path d="M0 4L4 2V13L0 15Z" fill="#d9d9d9" stroke="none" stroke-width="1" /><path d="M10 2C13 2 14 3 14 4V14C14 15 13 15 10 15Z" fill="#5ab4f2" stroke="none" stroke-width="1" /><path d="M7 0V16" fill="none" stroke="#5ab4f2" stroke-width="1.4" /><path d="M4 2L5.5 3V14L4 13Z" fill="#a8a8a8" stroke="none" stroke-width="1" /></g>
<g transform="translate(1091 114)"><path d="M0 4H12V16H0Z" fill="#d9d9d9" stroke="none" stroke-width="1" /><path d="M0 4L4 0H16L12 4Z" fill="#f0f0f0" stroke="none" stroke-width="1" /><path d="M12 4L16 0V12L12 16Z" fill="#a8a8a8" stroke="none" stroke-width="1" /><rect x="1.5" y="5.5" width="9" height="9" fill="#3b4453" stroke="none" stroke-width="1" /><rect x="1.5" y="9" width="6" height="5.5" fill="#5ab4f2" stroke="none" stroke-width="1" /></g>
<g transform="translate(1114 114)"><path d="M4 3H13V12H4Z" fill="#d9d9d9" stroke="none" stroke-width="1" /><path d="M4 3L7 0H16L13 3Z" fill="#f0f0f0" stroke="none" stroke-width="1" /><path d="M13 3L16 0V9L13 12Z" fill="#a8a8a8" stroke="none" stroke-width="1" /><path d="M0 11L3.5 14.5L9 8" fill="none" stroke="#49c46a" stroke-width="2.4" /></g>
<rect x="7" y="142" width="1" height="1" fill="#c9cdd5"/><rect x="7" y="144" width="1" height="1" fill="#c9cdd5"/><rect x="7" y="146" width="1" height="1" fill="#c9cdd5"/><rect x="7" y="148" width="1" height="1" fill="#c9cdd5"/><rect x="7" y="150" width="1" height="1" fill="#c9cdd5"/><rect x="7" y="152" width="1" height="1" fill="#c9cdd5"/><rect x="7" y="154" width="1" height="1" fill="#c9cdd5"/><rect x="9" y="142" width="1" height="1" fill="#c9cdd5"/><rect x="9" y="144" width="1" height="1" fill="#c9cdd5"/><rect x="9" y="146" width="1" height="1" fill="#c9cdd5"/><rect x="9" y="148" width="1" height="1" fill="#c9cdd5"/><rect x="9" y="150" width="1" height="1" fill="#c9cdd5"/><rect x="9" y="152" width="1" height="1" fill="#c9cdd5"/><rect x="9" y="154" width="1" height="1" fill="#c9cdd5"/>
<g transform="translate(16 141)"><path d="M0 5C3 4 6 4.5 8 6C10 4.5 13 4 16 5V15C13 14 10 14.5 8 16C6 14.5 3 14 0 15Z" fill="#e6e6e6" stroke="none" stroke-width="1" /><path d="M8 6V16" fill="none" stroke="#9a9a9a" stroke-width="1" /><path d="M2 8H6M2 10.5H6M2 13H6M10 10.5H14M10 13H14" fill="none" stroke="#9a9a9a" stroke-width="0.9" /><path d="M6 7L11.5 1.5L14 4L8.5 9.5L5.5 10Z" fill="#e9b765" stroke="#3b4453" stroke-width="0.6" /><path d="M11.5 1.5L13 0L15.5 2.5L14 4Z" fill="#e9434f" stroke="none" stroke-width="1" /></g>
<g transform="translate(39 141)"><path d="M0 5C3 4 6 4.5 8 6C10 4.5 13 4 16 5V15C13 14 10 14.5 8 16C6 14.5 3 14 0 15Z" fill="#e6e6e6" stroke="none" stroke-width="1" /><path d="M8 6V16" fill="none" stroke="#9a9a9a" stroke-width="1" /><path d="M2 8H6M2 10.5H6M2 13H6M10 8H14M10 10.5H14M10 13H14" fill="none" stroke="#9a9a9a" stroke-width="0.9" /><path d="M7 2.5L10 5.5L15 0" fill="none" stroke="#49c46a" stroke-width="2.2" /></g>
<g transform="translate(62 141)"><path d="M6 0H15L10 4H1Z" fill="#b9b9b9" stroke="none" stroke-width="1" /><path d="M0 8L3 5.5H11L8 8Z" fill="#f2f2f2" stroke="none" stroke-width="1" /><path d="M0 11L3 8.5H9L7 11Z" fill="#f2f2f2" stroke="none" stroke-width="1" /><path d="M0 14L3 11.5H8L6 14Z" fill="#f2f2f2" stroke="none" stroke-width="1" /><rect x="9" y="8" width="7.5" height="8.5" fill="#f07880" stroke="none" stroke-width="0" rx="1"/><rect x="9" y="8" width="7.5" height="1.6" fill="#fde0e2" stroke="none" stroke-width="1" /></g>
</svg>
<div class="dd" style="left:683px;top:84px;width:300px;height:22px;background:#fff"><svg class="a" style="left:0;top:0" width="110" height="21" viewBox="684 85 110 21"><g transform="translate(688.1 88) scale(0.86)"><path d="M8 0A6 6 0 0 1 11.5 10.8V12.5H4.5V10.8A6 6 0 0 1 8 0Z" fill="#ffb300" stroke="none" stroke-width="1" /><rect x="5.5" y="13.3" width="5" height="2.4" fill="#7b7b7b" stroke="none" stroke-width="1" /></g><g transform="translate(704 87.5) scale(0.94)"><circle cx="8" cy="8" r="4.2" fill="#ffa600" stroke="none" stroke-width="0"/><path d="M8 0V2.4M8 13.6V16M0 8H2.4M13.6 8H16M2.3 2.3L4 4M12 12L13.7 13.7M2.3 13.7L4 12M12 4L13.7 2.3" fill="none" stroke="#ffa600" stroke-width="1.5" /></g><g transform="translate(725 87.5)"><path d="M0 4V0.7H4M9 0.7H13V4M0 10V14H4" fill="none" stroke="#8a8a8a" stroke-width="1.4" /><rect x="3.3" y="3.3" width="6.4" height="6.4" fill="#fff" stroke="#9a9a9a" stroke-width="0.8" /><circle cx="11.5" cy="11.5" r="2.6" fill="#ffa600" stroke="none" stroke-width="0"/><path d="M11.5 7V8.2M11.5 14.8V16M7 11.5H8.2M14.8 11.5H16M8.3 8.3L9.2 9.2M13.8 13.8L14.7 14.7M8.3 14.7L9.2 13.8M13.8 9.2L14.7 8.3" fill="none" stroke="#ffa600" stroke-width="1.1" /></g><g transform="translate(744.5 86.5) scale(0.93)"><path d="M8.5 8V4A3 3 0 0 1 14.5 4V5.5" fill="none" stroke="#f5a800" stroke-width="2" /><rect x="0.5" y="7" width="10.5" height="8.5" fill="#f5a800" stroke="none" stroke-width="1" /><rect x="5" y="10" width="1.6" height="3" fill="#8a5a00" stroke="none" stroke-width="1" /></g><rect x="763.6" y="89.6" width="12" height="11.6" fill="#f00" stroke="#555" stroke-width=".7"/></svg><span style="font-size:12.5px;line-height:20px;white-space:nowrap;position:absolute;top:0px;color:#111;left:97.5px;font-size:12px">门窗</span><svg class="a" style="right:4px;top:6.5px" width="11" height="8"><path d="M1 1.5L5.5 6L10 1.5" fill="none" stroke="#555" stroke-width="1"/></svg></div>
<div class="dd" style="left:1062px;top:84px;width:150px;height:22px;background:#fff"><div class="a" style="left:4px;top:3px;width:14px;height:14px;background:#f00;border:1px solid #555;box-sizing:border-box"></div><span style="font-size:12.5px;line-height:20px;white-space:nowrap;position:absolute;top:0px;color:#111;left:21px">ByLayer</span><svg class="a" style="right:4px;top:6.5px" width="11" height="8"><path d="M1 1.5L5.5 6L10 1.5" fill="none" stroke="#555" stroke-width="1"/></svg></div>
<div class="dd" style="left:1218px;top:84px;width:160px;height:22px;background:#fff"><div class="a" style="left:5px;top:10px;width:59px;height:1px;background:#111"></div><span style="font-size:12.5px;line-height:20px;white-space:nowrap;position:absolute;top:0px;color:#111;left:70px">ByLayer</span><svg class="a" style="right:4px;top:6.5px" width="11" height="8"><path d="M1 1.5L5.5 6L10 1.5" fill="none" stroke="#555" stroke-width="1"/></svg></div>
<div class="dd" style="left:1384px;top:84px;width:124px;height:22px;background:#fff"><div class="a" style="left:5px;top:10px;width:34px;height:1px;background:#111"></div><span style="font-size:12.5px;line-height:20px;white-space:nowrap;position:absolute;top:0px;color:#111;left:45px">ByLayer</span><svg class="a" style="right:4px;top:6.5px" width="11" height="8"><path d="M1 1.5L5.5 6L10 1.5" fill="none" stroke="#555" stroke-width="1"/></svg></div>
<div class="dd" style="left:1515px;top:84px;width:119px;height:22px;background:#fafafa"><span style="font-size:12.5px;line-height:20px;white-space:nowrap;position:absolute;top:0px;color:#111;left:9px;color:#8b8b8b">ByColor</span><svg class="a" style="right:4px;top:6.5px" width="11" height="8"><path d="M1 1.5L5.5 6L10 1.5" fill="none" stroke="#b0b0b0" stroke-width="1"/></svg></div>
<div class="dd" style="left:503px;top:111px;width:120px;height:22px;background:#fff"><span style="font-size:12.5px;line-height:20px;white-space:nowrap;position:absolute;top:0px;color:#111;left:19px">dim0_2</span><svg class="a" style="right:4px;top:6.5px" width="11" height="8"><path d="M1 1.5L5.5 6L10 1.5" fill="none" stroke="#555" stroke-width="1"/></svg></div>
<div class="pn" style="left:4px;top:165px;width:25px;height:449px"></div>
<svg class="a" style="left:0;top:165px" width="33" height="460" viewBox="0 165 33 460">
<rect x="8" y="168" width="1" height="1" fill="#c9cdd5"/><rect x="10" y="168" width="1" height="1" fill="#c9cdd5"/><rect x="12" y="168" width="1" height="1" fill="#c9cdd5"/><rect x="14" y="168" width="1" height="1" fill="#c9cdd5"/><rect x="16" y="168" width="1" height="1" fill="#c9cdd5"/><rect x="18" y="168" width="1" height="1" fill="#c9cdd5"/><rect x="20" y="168" width="1" height="1" fill="#c9cdd5"/><rect x="8" y="170" width="1" height="1" fill="#c9cdd5"/><rect x="10" y="170" width="1" height="1" fill="#c9cdd5"/><rect x="12" y="170" width="1" height="1" fill="#c9cdd5"/><rect x="14" y="170" width="1" height="1" fill="#c9cdd5"/><rect x="16" y="170" width="1" height="1" fill="#c9cdd5"/><rect x="18" y="170" width="1" height="1" fill="#c9cdd5"/><rect x="20" y="170" width="1" height="1" fill="#c9cdd5"/>
<g transform="translate(8 177)"><path d="M1.5 14.5L14.5 1.5" fill="none" stroke="#d8d8d8" stroke-width="1.3" /><rect x="0" y="13" width="2.6" height="2.6" fill="#5ab4f2" stroke="none" stroke-width="1" /><rect x="13.4" y="0" width="2.6" height="2.6" fill="#5ab4f2" stroke="none" stroke-width="1" /></g>
<g transform="translate(8 199)"><path d="M2 14L14 2" fill="none" stroke="#d8d8d8" stroke-width="1.3" stroke-dasharray="4 2"/><path d="M16 0L10.5 1.5L14.5 5.5Z" fill="#d8d8d8" stroke="none" stroke-width="1" /><path d="M0 16L5.5 14.5L1.5 10.5Z" fill="#d8d8d8" stroke="none" stroke-width="1" /><rect x="7" y="7" width="2" height="2" fill="#5ab4f2" stroke="none" stroke-width="1" /></g>
<g transform="translate(8 221)"><path d="M1 14H9" fill="none" stroke="#d8d8d8" stroke-width="1.3" stroke-dasharray="3 2"/><path d="M10 14C16 14 17 6 11.5 5.5" fill="none" stroke="#d8d8d8" stroke-width="1.3" /><rect x="0" y="13" width="2.4" height="2.4" fill="#5ab4f2" stroke="none" stroke-width="1" /><rect x="9" y="13" width="2.4" height="2.4" fill="#5ab4f2" stroke="none" stroke-width="1" /><rect x="9.5" y="4.5" width="2.4" height="2.4" fill="#5ab4f2" stroke="none" stroke-width="1" /></g>
<g transform="translate(8 243)"><path d="M8 1L15 6.5L12.3 15H3.7L1 6.5Z" fill="none" stroke="#d8d8d8" stroke-width="1.3" /><rect x="7" y="8" width="2.2" height="2.2" fill="#5ab4f2" stroke="none" stroke-width="1" /><rect x="11.5" y="13.5" width="2.2" height="2.2" fill="#5ab4f2" stroke="none" stroke-width="1" /></g>
<g transform="translate(8 265)"><rect x="1.5" y="3" width="13" height="10" fill="none" stroke="#d8d8d8" stroke-width="1.4" /><rect x="0" y="1.6" width="2.6" height="2.6" fill="#5ab4f2" stroke="none" stroke-width="1" /><rect x="13.4" y="11.8" width="2.6" height="2.6" fill="#5ab4f2" stroke="none" stroke-width="1" /></g>
<g transform="translate(8 287)"><path d="M2 15C3 8 8 3 15 2" fill="none" stroke="#d8d8d8" stroke-width="1.3" stroke-dasharray="5 2"/><rect x="1" y="13.5" width="2.4" height="2.4" fill="#5ab4f2" stroke="none" stroke-width="1" /><rect x="13.5" y="1" width="2.4" height="2.4" fill="#5ab4f2" stroke="none" stroke-width="1" /></g>
<g transform="translate(8 309)"><circle cx="8" cy="8" r="7.3" fill="none" stroke="#d8d8d8" stroke-width="1.3"/><rect x="7" y="7" width="2.2" height="2.2" fill="#5ab4f2" stroke="none" stroke-width="1" /><path d="M9.5 6.5L12 4" fill="none" stroke="#5ab4f2" stroke-width="1.2" /><path d="M13 3L9.8 3.6L12.4 6.2Z" fill="#5ab4f2" stroke="none" stroke-width="1" /></g>
<g transform="translate(8 331)"><path d="M4 4C4 1 9 1 9.5 3.5C12 1.5 15.5 4 13.5 6.5C16.5 7.5 15.5 12 12.5 11.5C12 14.5 7.5 14.5 7 12C4 14 1 11 3 9C0 8 1 4 4 4Z" fill="none" stroke="#d8d8d8" stroke-width="1.2" /></g>
<g transform="translate(8 353)"><path d="M1 15L4 6L10 11L14.5 1.5" fill="none" stroke="#d8d8d8" stroke-width="1.3" stroke-dasharray="5 2.5"/><rect x="0" y="13.5" width="2.4" height="2.4" fill="#5ab4f2" stroke="none" stroke-width="1" /><rect x="3" y="4.5" width="2.4" height="2.4" fill="#5ab4f2" stroke="none" stroke-width="1" /><rect x="9" y="10" width="2.4" height="2.4" fill="#5ab4f2" stroke="none" stroke-width="1" /><rect x="13.2" y="0.5" width="2.4" height="2.4" fill="#5ab4f2" stroke="none" stroke-width="1" /></g>
<g transform="translate(8 375)"><path d="M2 10C4 14 12 14 14 10M2 6.5C4 2.5 12 2.5 14 6.5" fill="none" stroke="#d8d8d8" stroke-width="1.3" /><rect x="0" y="7" width="2.4" height="2.4" fill="#5ab4f2" stroke="none" stroke-width="1" /><rect x="13.6" y="7" width="2.4" height="2.4" fill="#5ab4f2" stroke="none" stroke-width="1" /><rect x="6.8" y="1.6" width="2.4" height="2.4" fill="#5ab4f2" stroke="none" stroke-width="1" /></g>
<g transform="translate(8 397)"><path d="M2.5 12C-1 7 4 1.5 10 3.5" fill="none" stroke="#d8d8d8" stroke-width="1.3" /><rect x="10.5" y="4" width="2.4" height="2.4" fill="#5ab4f2" stroke="none" stroke-width="1" /><rect x="6.5" y="7.5" width="2.4" height="2.4" fill="#5ab4f2" stroke="none" stroke-width="1" /><rect x="6" y="13" width="2.4" height="2.4" fill="#5ab4f2" stroke="none" stroke-width="1" /><rect x="13.5" y="8" width="2.2" height="2.2" fill="#5ab4f2" stroke="none" stroke-width="1" /></g>
<g transform="translate(8 419)"><path d="M7 0H13L16 3V14H7Z" fill="#8fcdf8" stroke="none" stroke-width="1" /><path d="M13 0L16 3H13Z" fill="#e8f4fd" stroke="none" stroke-width="1" /><path d="M12 16H16V12Z" fill="#fff" stroke="none" stroke-width="1" /><rect x="1" y="7.5" width="8.5" height="6.5" fill="#5b6370" stroke="#d0d0d0" stroke-width="1.3" /><rect x="-0.3" y="13" width="2.4" height="2.4" fill="#d0d0d0" stroke="none" stroke-width="1" /><circle cx="10.5" cy="12.5" r="3" fill="#5b6370" stroke="#d0d0d0" stroke-width="1.2"/><path d="M10.5 9.8V12.5H13.2" fill="none" stroke="#d0d0d0" stroke-width="1" /></g>
<g transform="translate(8 441)"><rect x="1" y="6.5" width="8.5" height="7" fill="#5b6370" stroke="#d0d0d0" stroke-width="1.3" /><rect x="-0.3" y="12.6" width="2.4" height="2.4" fill="#d0d0d0" stroke="none" stroke-width="1" /><circle cx="10.5" cy="12.5" r="3" fill="#5b6370" stroke="#d0d0d0" stroke-width="1.2"/><path d="M10.5 9.8V12.5H13.2" fill="none" stroke="#d0d0d0" stroke-width="1" /><path d="M12 0L13 2.8L16 2L14 4.2L16 6.4L13 5.8L12 8.6L11 5.8L8 6.4L10 4.2L8 2L11 2.8Z" fill="#f6c258" stroke="none" stroke-width="1" /></g>
<g transform="translate(8 463)"><rect x="7" y="1.5" width="2" height="2" fill="#e0e0e0" stroke="none" stroke-width="1" /><rect x="1.5" y="7" width="2" height="2" fill="#e0e0e0" stroke="none" stroke-width="1" /><rect x="12.5" y="7" width="2" height="2" fill="#e0e0e0" stroke="none" stroke-width="1" /><rect x="7" y="12.5" width="2" height="2" fill="#e0e0e0" stroke="none" stroke-width="1" /></g>
<g transform="translate(8 485)"><rect x="3.5" y="3.5" width="9" height="9" fill="#3f86c8" stroke="none" stroke-width="1" /><path d="M3.5 8L8 3.5M3.5 12.5L12.5 3.5M8 12.5L12.5 8" fill="none" stroke="#5ab4f2" stroke-width="1.3" /><path d="M3 0V16M13 0V16M0 3H16M0 13H16" fill="none" stroke="#d8d8d8" stroke-width="1.2" /></g>
<g transform="translate(8 507)"><linearGradient id="gg" x1="0" y1="0" x2="0" y2="1"><stop offset="0" stop-color="#5ab4f2"/><stop offset="1" stop-color="#3b4453"/></linearGradient><rect x="3.5" y="3.5" width="9" height="9" fill="url(#gg)" stroke="none" stroke-width="1" /><path d="M3 0V16M13 0V16M0 3H16M0 13H16" fill="none" stroke="#d8d8d8" stroke-width="1.2" /></g>
<g transform="translate(8 529)"><path d="M0 1.5H10L16 7.5V14.5H0Z" fill="#e0e0e0" stroke="none" stroke-width="1" /><circle cx="8" cy="8.5" r="2.4" fill="#3b4453" stroke="none" stroke-width="0"/></g>
<g transform="translate(8 551)"><rect x="0.7" y="1.7" width="14.6" height="12.6" fill="none" stroke="#e0e0e0" stroke-width="1.4" /><rect x="0.7" y="1.7" width="14.6" height="3" fill="#e0e0e0" stroke="none" stroke-width="1" /><path d="M0.7 8H15.3M0.7 11.2H15.3M5.7 4.7V14.3M10.5 4.7V14.3" fill="none" stroke="#e0e0e0" stroke-width="1.2" /></g>
<g transform="translate(8 573)"><text x="8" y="15" font-size="19" fill="#e0e0e0" text-anchor="middle" font-family='"Liberation Sans",sans-serif'>A</text></g>
<g transform="translate(8 595)"><circle cx="3.5" cy="4.5" r="3.5" fill="#49c46a" stroke="none" stroke-width="0"/><circle cx="12.5" cy="13" r="3.5" fill="#8fcdf8" stroke="none" stroke-width="0"/><path d="M8 3.5H12V7" fill="none" stroke="#f0f0f0" stroke-width="1.3" /><path d="M12 9.5L10 6.5H14Z" fill="#f0f0f0" stroke="none" stroke-width="1" /></g>
</svg>
<div class="pn" style="left:1675px;top:165px;width:25px;height:405px"></div>
<svg class="a" style="left:1671px;top:165px" width="33" height="420" viewBox="1671 165 33 420">
<rect x="1679" y="168" width="1" height="1" fill="#c9cdd5"/><rect x="1681" y="168" width="1" height="1" fill="#c9cdd5"/><rect x="1683" y="168" width="1" height="1" fill="#c9cdd5"/><rect x="1685" y="168" width="1" height="1" fill="#c9cdd5"/><rect x="1687" y="168" width="1" height="1" fill="#c9cdd5"/><rect x="1689" y="168" width="1" height="1" fill="#c9cdd5"/><rect x="1691" y="168" width="1" height="1" fill="#c9cdd5"/><rect x="1679" y="170" width="1" height="1" fill="#c9cdd5"/><rect x="1681" y="170" width="1" height="1" fill="#c9cdd5"/><rect x="1683" y="170" width="1" height="1" fill="#c9cdd5"/><rect x="1685" y="170" width="1" height="1" fill="#c9cdd5"/><rect x="1687" y="170" width="1" height="1" fill="#c9cdd5"/><rect x="1689" y="170" width="1" height="1" fill="#c9cdd5"/><rect x="1691" y="170" width="1" height="1" fill="#c9cdd5"/>
<g transform="translate(1679 177)"><path d="M4 10L12 1.5L16 5L8 13.5Z" fill="#e9b765" stroke="none" stroke-width="1" /><path d="M1.5 12.5L4 10L8 13.5L5.5 16C4 16.5 1 14 1.5 12.5Z" fill="#ef5a63" stroke="none" stroke-width="1" /><path d="M5 9L13 0.8L14 1.7L6 10Z" fill="#f7dca8" stroke="none" stroke-width="1" /><path d="M9 15.5H16" fill="none" stroke="#5ab4f2" stroke-width="1.3" /><path d="M0 15.5H3" fill="none" stroke="#d0d0d0" stroke-width="1.2" /></g>
<g transform="translate(1679 199)"><circle cx="3.5" cy="3.5" r="2.8" fill="none" stroke="#d8d8d8" stroke-width="1.3"/><path d="M8 2.5H12.5V6" fill="none" stroke="#d8d8d8" stroke-width="1.2" /><path d="M12.5 8L10.7 5.2H14.3Z" fill="#d8d8d8" stroke="none" stroke-width="1" /><circle cx="7.5" cy="12" r="2.8" fill="none" stroke="#5ab4f2" stroke-width="1.3"/><circle cx="12.7" cy="12" r="2.8" fill="none" stroke="#5ab4f2" stroke-width="1.3"/></g>
<g transform="translate(1679 221)"><path d="M6.5 1.5V14.5H0.7Z" fill="none" stroke="#d8d8d8" stroke-width="1.3" /><path d="M9.5 1.5V14.5H15.3Z" fill="none" stroke="#5ab4f2" stroke-width="1.3" /></g>
<g transform="translate(1679 243)"><path d="M16 2H7A6 6 0 0 0 7 14H16" fill="none" stroke="#5ab4f2" stroke-width="1.4" /><path d="M16 5.5H8A2.5 2.5 0 0 0 8 10.5H16" fill="none" stroke="#d8d8d8" stroke-width="1.3" /></g>
<g transform="translate(1679 265)"><rect x="1" y="1" width="5" height="5" fill="none" stroke="#d8d8d8" stroke-width="1.3" /><rect x="9.5" y="1" width="5" height="5" fill="none" stroke="#5ab4f2" stroke-width="1.3" /><rect x="1" y="9.5" width="5" height="5" fill="none" stroke="#5ab4f2" stroke-width="1.3" /><rect x="9.5" y="9.5" width="5" height="5" fill="none" stroke="#5ab4f2" stroke-width="1.3" /><path d="M16.5 12.5V16.5H12.5Z" fill="#fff" stroke="none" stroke-width="1" /></g>
<g transform="translate(1679 287)"><path d="M8 1V15M1 8H15" fill="none" stroke="#f0f0f0" stroke-width="1.5" /><path d="M8 -0.5L5.3 3.2H10.7Z M8 16.5L5.3 12.8H10.7Z M-0.5 8L3.2 5.3V10.7Z M16.5 8L12.8 5.3V10.7Z" fill="#f0f0f0" stroke="none" stroke-width="1" /></g>
<g transform="translate(1679 309)"><path d="M13.5 5A6.5 6.5 0 1 0 14.5 10" fill="none" stroke="#d8d8d8" stroke-width="1.4" /><path d="M9.5 0L14.8 2.2L10.6 6Z" fill="#d8d8d8" stroke="none" stroke-width="1" /></g>
<g transform="translate(1679 331)"><rect x="1" y="8" width="7" height="7" fill="none" stroke="#d8d8d8" stroke-width="1.3" /><path d="M1 5V0.7H15.3V15H11" fill="none" stroke="#5ab4f2" stroke-width="1.4" /></g>
<g transform="translate(1679 353)"><path d="M1 1H6V7.5M6 11.5V15H1Z" fill="none" stroke="#d8d8d8" stroke-width="1.3" /><path d="M1 1V15" fill="none" stroke="#d8d8d8" stroke-width="1.3" /><path d="M3 9.5H10" fill="none" stroke="#d8d8d8" stroke-width="1.2" /><path d="M11.5 9.5L8.5 7.6V11.4Z" fill="#d8d8d8" stroke="none" stroke-width="1" /><path d="M9 1H11.5L15.5 15H9" fill="none" stroke="#5ab4f2" stroke-width="1.3" /></g>
<g transform="translate(1679 375)"><path d="M0 1.5H7M12 1.5H16" fill="none" stroke="#d8d8d8" stroke-width="1.2" /><path d="M7 1.5H12" fill="none" stroke="#5ab4f2" stroke-width="1.2" stroke-dasharray="2 1.5"/><path d="M6 1L11.5 11M13 1L8 10.5" fill="none" stroke="#f0f0f0" stroke-width="1.5" /><circle cx="7" cy="13" r="2" fill="none" stroke="#f0f0f0" stroke-width="1.2"/><circle cx="12.5" cy="13" r="2" fill="none" stroke="#f0f0f0" stroke-width="1.2"/></g>
<g transform="translate(1679 397)"><path d="M14.5 1V15" fill="none" stroke="#d8d8d8" stroke-width="1.4" /><path d="M0 5.5H11" fill="none" stroke="#d8d8d8" stroke-width="1.2" /><path d="M13.5 5.5L10 3.4V7.6Z" fill="#d8d8d8" stroke="none" stroke-width="1" /><path d="M0 11H6" fill="none" stroke="#d8d8d8" stroke-width="1.2" /><path d="M6 11H14" fill="none" stroke="#5ab4f2" stroke-width="1.2" stroke-dasharray="2 1.5"/></g>
<g transform="translate(1679 419)"><path d="M10.5 3H15V14.5H1V3H6" fill="none" stroke="#d8d8d8" stroke-width="1.4" /><path d="M11 0V5.5" fill="none" stroke="#5ab4f2" stroke-width="1.4" /></g>
<g transform="translate(1679 441)"><path d="M11 3H15V14.5H1V3H5" fill="none" stroke="#d8d8d8" stroke-width="1.4" /><path d="M5.5 0V5.5M10.5 0V5.5" fill="none" stroke="#5ab4f2" stroke-width="1.4" /></g>
<g transform="translate(1679 463)"><path d="M0 8H16" fill="none" stroke="#d8d8d8" stroke-width="1.2" /><path d="M8 8L3 5.3V10.7Z" fill="#5ab4f2" stroke="none" stroke-width="1" /><path d="M8 8L13 5.3V10.7Z" fill="#5ab4f2" stroke="none" stroke-width="1" /></g>
<g transform="translate(1679 485)"><path d="M1 16V12M1 10V9" fill="none" stroke="#d8d8d8" stroke-width="1.3" /><path d="M1.5 9L9 1.5" fill="none" stroke="#5ab4f2" stroke-width="1.4" /><path d="M10 1H16" fill="none" stroke="#d8d8d8" stroke-width="1.3" /></g>
<g transform="translate(1679 507)"><path d="M1 16V12" fill="none" stroke="#d8d8d8" stroke-width="1.3" /><path d="M1 11C1 5 5 1 10 1" fill="none" stroke="#5ab4f2" stroke-width="1.4" /><path d="M11 1H16" fill="none" stroke="#d8d8d8" stroke-width="1.3" /></g>
<g transform="translate(1679 529)"><path d="M1 15.5L2 10" fill="none" stroke="#b8b8b8" stroke-width="1.5" /><path d="M2 10C4 0 8 6 9.5 9C11 12 14 10 15 5.5" fill="none" stroke="#5ab4f2" stroke-width="1.5" /><path d="M15 5.5L15.8 1" fill="none" stroke="#b8b8b8" stroke-width="1.5" /></g>
<g transform="translate(1679 551)"><rect x="1.5" y="5" width="9.5" height="9.5" fill="none" stroke="#d8d8d8" stroke-width="1.4" /><path d="M1 8V4.5L5 1H15.5V11L11.5 15M11 5L15.5 1" fill="none" stroke="#5ab4f2" stroke-width="1.3" /></g>
</svg>
<div class="a" style="left:33px;top:165px;width:1638px;height:1124px;background:#000;overflow:hidden">
<svg class="a" style="left:-33px;top:-165px" width="1707" height="1353" viewBox="0 0 1707 1353" font-family='"Liberation Sans","Noto Sans CJK SC",sans-serif'>
<defs><pattern id="hat" x="252" y="0" width="2.9" height="8" patternUnits="userSpaceOnUse"><rect width="2.9" height="8" fill="#3a3a3a"/><rect x="0.9" width="1.1" height="8" fill="#7c7c7c"/></pattern><pattern id="dh" width="2.3" height="2.3" patternUnits="userSpaceOnUse" patternTransform="rotate(45)"><rect width="2.3" height="2.3" fill="#0c0c0c"/><rect width="0.9" height="2.3" fill="#8a8a8a"/></pattern><pattern id="hh" width="8" height="1.9" patternUnits="userSpaceOnUse"><rect width="8" height="1.9" fill="#2c2c2c"/><rect width="8" height="0.9" fill="#8a8a8a"/></pattern><pattern id="vh" width="1.9" height="8" patternUnits="userSpaceOnUse"><rect width="1.9" height="8" fill="#2c2c2c"/><rect width="0.9" height="8" fill="#8a8a8a"/></pattern></defs>
<line x1="60" y1="330.5" x2="1671" y2="330.5" stroke="#8c8c8c" stroke-width="3" />
<line x1="33" y1="346" x2="1671" y2="346" stroke="#8c8c8c" stroke-width="2" />
<line x1="809.5" y1="323" x2="809.5" y2="346" stroke="#c8c8c8" stroke-width="1" />
<line x1="60" y1="361" x2="1671" y2="361" stroke="#8c8c8c" stroke-width="3" />
<line x1="61.6" y1="360" x2="61.6" y2="1237" stroke="#8c8c8c" stroke-width="2.6" />
<line x1="60.4" y1="1238" x2="1671" y2="1238" stroke="#7f8fb9" stroke-width="3.4" />
<line x1="33" y1="1253.5" x2="1671" y2="1253.5" stroke="#7c7c7c" stroke-width="1" />
<line x1="1307" y1="1253.5" x2="1671" y2="1253.5" stroke="#8a8a8a" stroke-width="2" />
<line x1="1307.5" y1="1253" x2="1307.5" y2="1289" stroke="#aaaaaa" stroke-width="1" />
<line x1="60" y1="1268.5" x2="1671" y2="1268.5" stroke="#8a8a8a" stroke-width="2.6" />
<line x1="33" y1="1268.5" x2="60" y2="1268.5" stroke="#8a8a8a" stroke-width="1" />
<line x1="1346.5" y1="1267" x2="1346.5" y2="1289" stroke="#8c8c8c" stroke-width="3" />
<line x1="1345" y1="1268" x2="1671" y2="1268" stroke="#8c8c8c" stroke-width="3" />
<line x1="1327.5" y1="1268" x2="1327.5" y2="1289" stroke="#909090" stroke-width="1" />
<line x1="1333.5" y1="1268" x2="1333.5" y2="1289" stroke="#909090" stroke-width="1" />
<line x1="1339.5" y1="1268" x2="1339.5" y2="1289" stroke="#909090" stroke-width="1" />
<line x1="38.2" y1="1268" x2="38.2" y2="1289" stroke="#808080" stroke-width="1.2" />
<line x1="45.6" y1="1268" x2="45.6" y2="1289" stroke="#808080" stroke-width="1.2" />
<line x1="53.5" y1="1268" x2="53.5" y2="1289" stroke="#808080" stroke-width="1.2" />
<line x1="61.6" y1="1268" x2="61.6" y2="1289" stroke="#8c8c8c" stroke-width="2.6" />
<ellipse cx="35" cy="1284" rx="2.5" ry="3.5" fill="none" stroke="#999" stroke-width="1"/>
<line x1="38.8" y1="361" x2="38.8" y2="475" stroke="#8a8a8a" stroke-width="1" />
<line x1="46" y1="361" x2="46" y2="475" stroke="#8a8a8a" stroke-width="1" />
<line x1="53.7" y1="361" x2="53.7" y2="475" stroke="#8a8a8a" stroke-width="1" />
<line x1="33" y1="399.4" x2="60" y2="399.4" stroke="#8a8a8a" stroke-width="1" />
<line x1="33" y1="437.7" x2="60" y2="437.7" stroke="#8a8a8a" stroke-width="1" />
<line x1="33" y1="475.2" x2="60" y2="475.2" stroke="#8a8a8a" stroke-width="1" />
<line x1="33" y1="483.5" x2="60" y2="483.5" stroke="#8a8a8a" stroke-width="1" />
<line x1="33" y1="361.5" x2="60" y2="361.5" stroke="#8a8a8a" stroke-width="1" />
<text x="37.5" y="389" font-size="5" fill="#b0b0b0" text-anchor="start" font-style="normal" transform="rotate(-90 37.5 389)" >(设计)</text>
<text x="37.5" y="427" font-size="5" fill="#b0b0b0" text-anchor="start" font-style="normal" transform="rotate(-90 37.5 427)" >(审核)</text>
<text x="37.5" y="464" font-size="5" fill="#b0b0b0" text-anchor="start" font-style="normal" transform="rotate(-90 37.5 464)" >(审定)</text>
<text x="35" y="481.5" font-size="4.5" fill="#b0b0b0" text-anchor="start" font-style="normal" >会 签 栏</text>
<line x1="33" y1="799.5" x2="69" y2="799.5" stroke="#9a9a9a" stroke-width="1" />
<circle cx="1588" cy="247" r="52.8" fill="none" stroke="#2b2b2b" stroke-width="14"/>
<rect x="60.5" y="166.2" width="296.5" height="164.1" fill="none" stroke="#8c8c8c" stroke-width="2.2"/>
<line x1="90.5" y1="166" x2="90.5" y2="330" stroke="#747474" stroke-width="1.2" />
<line x1="128.5" y1="166" x2="128.5" y2="330" stroke="#747474" stroke-width="1.2" />
<line x1="227" y1="166" x2="227" y2="330" stroke="#747474" stroke-width="1.2" />
<line x1="256.5" y1="166" x2="256.5" y2="330" stroke="#747474" stroke-width="1.2" />
<line x1="60" y1="183.4" x2="357" y2="183.4" stroke="#747474" stroke-width="1.4" />
<line x1="60" y1="201.7" x2="357" y2="201.7" stroke="#747474" stroke-width="1.4" />
<line x1="60" y1="220.0" x2="357" y2="220.0" stroke="#747474" stroke-width="1.4" />
<line x1="60" y1="238.4" x2="357" y2="238.4" stroke="#747474" stroke-width="1.4" />
<line x1="60" y1="256.8" x2="357" y2="256.8" stroke="#747474" stroke-width="1.4" />
<line x1="60" y1="275.1" x2="357" y2="275.1" stroke="#747474" stroke-width="1.4" />
<line x1="60" y1="293.5" x2="357" y2="293.5" stroke="#747474" stroke-width="1.4" />
<line x1="60" y1="311.9" x2="357" y2="311.9" stroke="#747474" stroke-width="1.4" />
<text x="77.5" y="177.5" font-size="9" fill="#ffff66" text-anchor="middle" font-style="italic" font-family='"Liberation Sans","Noto Sans CJK SC",sans-serif' font-weight="normal">i</text>
<text x="110" y="177.5" font-size="9" fill="#ffff66" text-anchor="middle" font-style="italic" font-family='"Liberation Sans","Noto Sans CJK SC",sans-serif' font-weight="normal">M1</text>
<text x="138" y="178.5" font-size="9.5" fill="#ffff66" text-anchor="start" font-style="italic" font-family='"Liberation Sans","Noto Sans CJK SC",sans-serif' font-weight="normal" letter-spacing="0.7">4200x4500</text>
<text x="243" y="178.5" font-size="9.5" fill="#ffff66" text-anchor="middle" font-style="italic" font-family='"Liberation Sans","Noto Sans CJK SC",sans-serif' font-weight="normal">18</text>
<text x="267" y="177.5" font-size="6" fill="#ffff66" text-anchor="start" font-style="normal" font-weight="bold">彩钢卷帘门</text>
<text x="77.5" y="195.9" font-size="9" fill="#ffff66" text-anchor="middle" font-style="italic" font-family='"Liberation Sans","Noto Sans CJK SC",sans-serif' font-weight="normal">2</text>
<text x="110" y="195.9" font-size="9" fill="#ffff66" text-anchor="middle" font-style="italic" font-family='"Liberation Sans","Noto Sans CJK SC",sans-serif' font-weight="normal">M2</text>
<text x="138" y="196.9" font-size="9.5" fill="#ffff66" text-anchor="start" font-style="italic" font-family='"Liberation Sans","Noto Sans CJK SC",sans-serif' font-weight="normal" letter-spacing="0.7">1200x2100</text>
<text x="243" y="196.9" font-size="9.5" fill="#ffff66" text-anchor="middle" font-style="italic" font-family='"Liberation Sans","Noto Sans CJK SC",sans-serif' font-weight="normal">1</text>
<text x="267" y="195.9" font-size="6" fill="#ffff66" text-anchor="start" font-style="normal" font-weight="bold">塑钢平开门</text>
<text x="77.5" y="214.2" font-size="9" fill="#ffff66" text-anchor="middle" font-style="italic" font-family='"Liberation Sans","Noto Sans CJK SC",sans-serif' font-weight="normal">3</text>
<text x="110" y="214.2" font-size="9" fill="#ffff66" text-anchor="middle" font-style="italic" font-family='"Liberation Sans","Noto Sans CJK SC",sans-serif' font-weight="normal">M3</text>
<text x="138" y="215.2" font-size="9.5" fill="#ffff66" text-anchor="start" font-style="italic" font-family='"Liberation Sans","Noto Sans CJK SC",sans-serif' font-weight="normal" letter-spacing="0.7">900x2100</text>
<text x="243" y="215.2" font-size="9.5" fill="#ffff66" text-anchor="middle" font-style="italic" font-family='"Liberation Sans","Noto Sans CJK SC",sans-serif' font-weight="normal">3</text>
<text x="267" y="214.2" font-size="6" fill="#ffff66" text-anchor="start" font-style="normal" font-weight="bold">木平开门</text>
<text x="77.5" y="232.5" font-size="9" fill="#ffff66" text-anchor="middle" font-style="italic" font-family='"Liberation Sans","Noto Sans CJK SC",sans-serif' font-weight="normal">4</text>
<text x="110" y="232.5" font-size="9" fill="#ffff66" text-anchor="middle" font-style="italic" font-family='"Liberation Sans","Noto Sans CJK SC",sans-serif' font-weight="normal">M4</text>
<text x="138" y="233.5" font-size="9.5" fill="#ffff66" text-anchor="start" font-style="italic" font-family='"Liberation Sans","Noto Sans CJK SC",sans-serif' font-weight="normal" letter-spacing="0.7">900x2100</text>
<text x="243" y="233.5" font-size="9.5" fill="#ffff66" text-anchor="middle" font-style="italic" font-family='"Liberation Sans","Noto Sans CJK SC",sans-serif' font-weight="normal">3</text>
<text x="267" y="232.5" font-size="6" fill="#ffff66" text-anchor="start" font-style="normal" font-weight="bold">木平开门</text>
<text x="77.5" y="250.9" font-size="9" fill="#ffff66" text-anchor="middle" font-style="italic" font-family='"Liberation Sans","Noto Sans CJK SC",sans-serif' font-weight="normal">5</text>
<text x="110" y="250.9" font-size="9" fill="#ffff66" text-anchor="middle" font-style="italic" font-family='"Liberation Sans","Noto Sans CJK SC",sans-serif' font-weight="normal">M5</text>
<text x="138" y="251.9" font-size="9.5" fill="#ffff66" text-anchor="start" font-style="italic" font-family='"Liberation Sans","Noto Sans CJK SC",sans-serif' font-weight="normal" letter-spacing="0.7">5000x5500</text>
<text x="243" y="251.9" font-size="9.5" fill="#ffff66" text-anchor="middle" font-style="italic" font-family='"Liberation Sans","Noto Sans CJK SC",sans-serif' font-weight="normal">2</text>
<text x="267" y="250.9" font-size="6" fill="#ffff66" text-anchor="start" font-style="normal" font-weight="bold">彩钢卷帘门</text>
<text x="77.5" y="269.3" font-size="9" fill="#ffff66" text-anchor="middle" font-style="italic" font-family='"Liberation Sans","Noto Sans CJK SC",sans-serif' font-weight="normal">6</text>
<text x="110" y="269.3" font-size="9" fill="#ffff66" text-anchor="middle" font-style="italic" font-family='"Liberation Sans","Noto Sans CJK SC",sans-serif' font-weight="normal">M6</text>
<text x="138" y="270.3" font-size="9.5" fill="#ffff66" text-anchor="start" font-style="italic" font-family='"Liberation Sans","Noto Sans CJK SC",sans-serif' font-weight="normal" letter-spacing="0.7">1800x2800</text>
<text x="243" y="270.3" font-size="9.5" fill="#ffff66" text-anchor="middle" font-style="italic" font-family='"Liberation Sans","Noto Sans CJK SC",sans-serif' font-weight="normal">1</text>
<text x="267" y="269.3" font-size="6" fill="#ffff66" text-anchor="start" font-style="normal" font-weight="bold">夹芯板推拉门</text>
<text x="77.5" y="287.6" font-size="9" fill="#ffff66" text-anchor="middle" font-style="italic" font-family='"Liberation Sans","Noto Sans CJK SC",sans-serif' font-weight="normal">7</text>
<text x="110" y="287.6" font-size="9" fill="#ffff66" text-anchor="middle" font-style="italic" font-family='"Liberation Sans","Noto Sans CJK SC",sans-serif' font-weight="normal">C1</text>
<text x="138" y="288.6" font-size="9.5" fill="#ffff66" text-anchor="start" font-style="italic" font-family='"Liberation Sans","Noto Sans CJK SC",sans-serif' font-weight="normal" letter-spacing="0.7">1500x1200</text>
<text x="243" y="288.6" font-size="9.5" fill="#ffff66" text-anchor="middle" font-style="italic" font-family='"Liberation Sans","Noto Sans CJK SC",sans-serif' font-weight="normal">6</text>
<text x="267" y="287.6" font-size="6" fill="#ffff66" text-anchor="start" font-style="normal" font-weight="bold">塑钢平开窗,<tspan font-size="9" font-style="italic">5mm</tspan>平板玻璃</text>
<text x="77.5" y="306.0" font-size="9" fill="#ffff66" text-anchor="middle" font-style="italic" font-family='"Liberation Sans","Noto Sans CJK SC",sans-serif' font-weight="normal">8</text>
<text x="110" y="306.0" font-size="9" fill="#ffff66" text-anchor="middle" font-style="italic" font-family='"Liberation Sans","Noto Sans CJK SC",sans-serif' font-weight="normal">C2</text>
<text x="138" y="307.0" font-size="9.5" fill="#ffff66" text-anchor="start" font-style="italic" font-family='"Liberation Sans","Noto Sans CJK SC",sans-serif' font-weight="normal" letter-spacing="0.7">2400x1200</text>
<text x="243" y="307.0" font-size="9.5" fill="#ffff66" text-anchor="middle" font-style="italic" font-family='"Liberation Sans","Noto Sans CJK SC",sans-serif' font-weight="normal">8</text>
<text x="267" y="306.0" font-size="6" fill="#ffff66" text-anchor="start" font-style="normal" font-weight="bold">塑钢平开窗,<tspan font-size="9" font-style="italic">5mm</tspan>平板玻璃</text>
<text x="77.5" y="324.4" font-size="9" fill="#ffff66" text-anchor="middle" font-style="italic" font-family='"Liberation Sans","Noto Sans CJK SC",sans-serif' font-weight="normal">9</text>
<text x="110" y="324.4" font-size="9" fill="#ffff66" text-anchor="middle" font-style="italic" font-family='"Liberation Sans","Noto Sans CJK SC",sans-serif' font-weight="normal">C3</text>
<text x="138" y="325.4" font-size="9.5" fill="#ffff66" text-anchor="start" font-style="italic" font-family='"Liberation Sans","Noto Sans CJK SC",sans-serif' font-weight="normal" letter-spacing="0.7">1200x1200</text>
<text x="243" y="325.4" font-size="9.5" fill="#ffff66" text-anchor="middle" font-style="italic" font-family='"Liberation Sans","Noto Sans CJK SC",sans-serif' font-weight="normal">1</text>
<text x="267" y="324.4" font-size="6" fill="#ffff66" text-anchor="start" font-style="normal" font-weight="bold">塑钢平开窗,<tspan font-size="9" font-style="italic">5mm</tspan>平板玻璃</text>
<text x="951" y="178.7" font-size="11.8" fill="#f3f38a" text-anchor="start" font-style="normal" textLength="229.7" lengthAdjust="spacing" font-weight="300">1、本工程相对标高±0.000=绝对标高+6.450</text>
<text x="951" y="196.7" font-size="11.8" fill="#f3f38a" text-anchor="start" font-style="normal" textLength="335.6" lengthAdjust="spacing" font-weight="300">2、本工程建筑面积：拆装箱栈：5920平方米;办公楼：372平方米</text>
<text x="951" y="215.7" font-size="11.8" fill="#f3f38a" text-anchor="start" font-style="normal" textLength="376.7" lengthAdjust="spacing" font-weight="300">3、围护结构：拆装箱栈：屋、墙面采用彩钢板;其规格品牌可由业主定；</text>
<text x="1008" y="233.7" font-size="11.8" fill="#f3f38a" text-anchor="start" font-style="normal" textLength="164.8" lengthAdjust="spacing" font-weight="300">办公楼：屋墙面采用50mm夹芯板</text>
<text x="951" y="251.7" font-size="11.8" fill="#f3f38a" text-anchor="start" font-style="normal" textLength="170.7" lengthAdjust="spacing" font-weight="300">4、钢梁、柱尺寸以结构图为准；</text>
<text x="1300" y="175.7" font-size="11.8" fill="#f3f38a" text-anchor="start" font-style="normal" textLength="229.5" lengthAdjust="spacing" font-weight="300">5、建筑防火按《消防设计说明》要求施工；</text>
<text x="1300" y="193.7" font-size="11.8" fill="#f3f38a" text-anchor="start" font-style="normal" textLength="206.0" lengthAdjust="spacing" font-weight="300">6、土建工程详见相应土建工程施工图。</text>
<text x="1300" y="211.7" font-size="11.8" fill="#f3f38a" text-anchor="start" font-style="normal" textLength="206.0" lengthAdjust="spacing" font-weight="300">7、各工种图纸应相互协调，配合施工；</text>
<text x="1300" y="229.7" font-size="11.8" fill="#f3f38a" text-anchor="start" font-style="normal" textLength="264.8" lengthAdjust="spacing" font-weight="300">8、未尽事宜按国家及上海地区有关规范、规程进行</text>
<line x1="673" y1="169.5" x2="824" y2="169.5" stroke="#8c8c8c" stroke-width="1.5" />
<line x1="673" y1="172.5" x2="824" y2="172.5" stroke="#8c8c8c" stroke-width="1.5" />
<text x="667" y="187" font-size="9" fill="#ffff66" text-anchor="start" font-style="italic" font-family='"Liberation Sans","Noto Sans CJK SC",sans-serif' font-weight="bold" textLength="101" lengthAdjust="spacing"><tspan font-size="6" font-style="normal">注:</tspan>A-A、B-B<tspan font-size="6" font-style="normal">剖面参见建施</tspan>05</text>
<text x="678" y="199.5" font-size="9" fill="#ffff66" text-anchor="start" font-style="italic" font-family='"Liberation Sans","Noto Sans CJK SC",sans-serif' font-weight="bold" textLength="147" lengthAdjust="spacing">J1-J1/J3-J3/J4-J4<tspan font-size="6" font-style="normal">剖面参见建施</tspan>02</text>
<rect x="251.5" y="482.2" width="1133.0" height="420.00000000000006" fill="#3a3a3a"/>
<path d="M253.10 485.2V901.2M256.00 485.2V901.2M258.90 485.2V901.2M261.80 485.2V901.2M264.70 485.2V901.2M267.60 485.2V901.2M270.50 485.2V901.2M273.40 485.2V901.2M276.30 485.2V901.2M279.20 485.2V901.2M282.10 485.2V901.2M285.00 485.2V901.2M287.90 485.2V901.2M290.80 485.2V901.2M293.70 485.2V901.2M296.60 485.2V901.2M299.50 485.2V901.2M302.40 485.2V901.2M305.30 485.2V901.2M308.20 485.2V901.2M311.10 485.2V901.2M314.00 485.2V901.2M316.90 485.2V901.2M319.80 485.2V901.2M322.70 485.2V901.2M325.60 485.2V901.2M328.50 485.2V901.2M331.40 485.2V901.2M334.30 485.2V901.2M337.20 485.2V901.2M340.10 485.2V901.2M343.00 485.2V901.2M345.90 485.2V901.2M348.80 485.2V901.2M351.70 485.2V901.2M354.60 485.2V901.2M357.50 485.2V901.2M360.40 485.2V901.2M363.30 485.2V901.2M366.20 485.2V901.2M369.10 485.2V901.2M372.00 485.2V901.2M374.90 485.2V901.2M377.80 485.2V901.2M380.70 485.2V901.2M383.60 485.2V901.2M386.50 485.2V901.2M389.40 485.2V901.2M392.30 485.2V901.2M395.20 485.2V901.2M398.10 485.2V901.2M401.00 485.2V901.2M403.90 485.2V901.2M406.80 485.2V901.2M409.70 485.2V901.2M412.60 485.2V901.2M415.50 485.2V901.2M418.40 485.2V901.2M421.30 485.2V901.2M424.20 485.2V901.2M427.10 485.2V901.2M430.00 485.2V901.2M432.90 485.2V901.2M435.80 485.2V901.2M438.70 485.2V901.2M441.60 485.2V901.2M444.50 485.2V901.2M447.40 485.2V901.2M450.30 485.2V901.2M453.20 485.2V901.2M456.10 485.2V901.2M459.00 485.2V901.2M461.90 485.2V901.2M464.80 485.2V901.2M467.70 485.2V901.2M470.60 485.2V901.2M473.50 485.2V901.2M476.40 485.2V901.2M479.30 485.2V901.2M482.20 485.2V901.2M485.10 485.2V901.2M488.00 485.2V901.2M490.90 485.2V901.2M493.80 485.2V901.2M496.70 485.2V901.2M499.60 485.2V901.2M502.50 485.2V901.2M505.40 485.2V901.2M508.30 485.2V901.2M511.20 485.2V901.2M514.10 485.2V901.2M517.00 485.2V901.2M519.90 485.2V901.2M522.80 485.2V901.2M525.70 485.2V901.2M528.60 485.2V901.2M531.50 485.2V901.2M534.40 485.2V901.2M537.30 485.2V901.2M540.20 485.2V901.2M543.10 485.2V901.2M546.00 485.2V901.2M548.90 485.2V901.2M551.80 485.2V901.2M554.70 485.2V901.2M557.60 485.2V901.2M560.50 485.2V901.2M563.40 485.2V901.2M566.30 485.2V901.2M569.20 485.2V901.2M572.10 485.2V901.2M575.00 485.2V901.2M577.90 485.2V901.2M580.80 485.2V901.2M583.70 485.2V901.2M586.60 485.2V901.2M589.50 485.2V901.2M592.40 485.2V901.2M595.30 485.2V901.2M598.20 485.2V901.2M601.10 485.2V901.2M604.00 485.2V901.2M606.90 485.2V901.2M609.80 485.2V901.2M612.70 485.2V901.2M615.60 485.2V901.2M618.50 485.2V901.2M621.40 485.2V901.2M624.30 485.2V901.2M627.20 485.2V901.2M630.10 485.2V901.2M633.00 485.2V901.2M635.90 485.2V901.2M638.80 485.2V901.2M641.70 485.2V901.2M644.60 485.2V901.2M647.50 485.2V901.2M650.40 485.2V901.2M653.30 485.2V901.2M656.20 485.2V901.2M659.10 485.2V901.2M662.00 485.2V901.2M664.90 485.2V901.2M667.80 485.2V901.2M670.70 485.2V901.2M673.60 485.2V901.2M676.50 485.2V901.2M679.40 485.2V901.2M682.30 485.2V901.2M685.20 485.2V901.2M688.10 485.2V901.2M691.00 485.2V901.2M693.90 485.2V901.2M696.80 485.2V901.2M699.70 485.2V901.2M702.60 485.2V901.2M705.50 485.2V901.2M708.40 485.2V901.2M711.30 485.2V901.2M714.20 485.2V901.2M717.10 485.2V901.2M720.00 485.2V901.2M722.90 485.2V901.2M725.80 485.2V901.2M728.70 485.2V901.2M731.60 485.2V901.2M734.50 485.2V901.2M737.40 485.2V901.2M740.30 485.2V901.2M743.20 485.2V901.2M746.10 485.2V901.2M749.00 485.2V901.2M751.90 485.2V901.2M754.80 485.2V901.2M757.70 485.2V901.2M760.60 485.2V901.2M763.50 485.2V901.2M766.40 485.2V901.2M769.30 485.2V901.2M772.20 485.2V901.2M775.10 485.2V901.2M778.00 485.2V901.2M780.90 485.2V901.2M783.80 485.2V901.2M786.70 485.2V901.2M789.60 485.2V901.2M792.50 485.2V901.2M795.40 485.2V901.2M798.30 485.2V901.2M801.20 485.2V901.2M804.10 485.2V901.2M807.00 485.2V901.2M809.90 485.2V901.2M812.80 485.2V901.2M815.70 485.2V901.2M818.60 485.2V901.2M821.50 485.2V901.2M824.40 485.2V901.2M827.30 485.2V901.2M830.20 485.2V901.2M833.10 485.2V901.2M836.00 485.2V901.2M838.90 485.2V901.2M841.80 485.2V901.2M844.70 485.2V901.2M847.60 485.2V901.2M850.50 485.2V901.2M853.40 485.2V901.2M856.30 485.2V901.2M859.20 485.2V901.2M862.10 485.2V901.2M865.00 485.2V901.2M867.90 485.2V901.2M870.80 485.2V901.2M873.70 485.2V901.2M876.60 485.2V901.2M879.50 485.2V901.2M882.40 485.2V901.2M885.30 485.2V901.2M888.20 485.2V901.2M891.10 485.2V901.2M894.00 485.2V901.2M896.90 485.2V901.2M899.80 485.2V901.2M902.70 485.2V901.2M905.60 485.2V901.2M908.50 485.2V901.2M911.40 485.2V901.2M914.30 485.2V901.2M917.20 485.2V901.2M920.10 485.2V901.2M923.00 485.2V901.2M925.90 485.2V901.2M928.80 485.2V901.2M931.70 485.2V901.2M934.60 485.2V901.2M937.50 485.2V901.2M940.40 485.2V901.2M943.30 485.2V901.2M946.20 485.2V901.2M949.10 485.2V901.2M952.00 485.2V901.2M954.90 485.2V901.2M957.80 485.2V901.2M960.70 485.2V901.2M963.60 485.2V901.2M966.50 485.2V901.2M969.40 485.2V901.2M972.30 485.2V901.2M975.20 485.2V901.2M978.10 485.2V901.2M981.00 485.2V901.2M983.90 485.2V901.2M986.80 485.2V901.2M989.70 485.2V901.2M992.60 485.2V901.2M995.50 485.2V901.2M998.40 485.2V901.2M1001.30 485.2V901.2M1004.20 485.2V901.2M1007.10 485.2V901.2M1010.00 485.2V901.2M1012.90 485.2V901.2M1015.80 485.2V901.2M1018.70 485.2V901.2M1021.60 485.2V901.2M1024.50 485.2V901.2M1027.40 485.2V901.2M1030.30 485.2V901.2M1033.20 485.2V901.2M1036.10 485.2V901.2M1039.00 485.2V901.2M1041.90 485.2V901.2M1044.80 485.2V901.2M1047.70 485.2V901.2M1050.60 485.2V901.2M1053.50 485.2V901.2M1056.40 485.2V901.2M1059.30 485.2V901.2M1062.20 485.2V901.2M1065.10 485.2V901.2M1068.00 485.2V901.2M1070.90 485.2V901.2M1073.80 485.2V901.2M1076.70 485.2V901.2M1079.60 485.2V901.2M1082.50 485.2V901.2M1085.40 485.2V901.2M1088.30 485.2V901.2M1091.20 485.2V901.2M1094.10 485.2V901.2M1097.00 485.2V901.2M1099.90 485.2V901.2M1102.80 485.2V901.2M1105.70 485.2V901.2M1108.60 485.2V901.2M1111.50 485.2V901.2M1114.40 485.2V901.2M1117.30 485.2V901.2M1120.20 485.2V901.2M1123.10 485.2V901.2M1126.00 485.2V901.2M1128.90 485.2V901.2M1131.80 485.2V901.2M1134.70 485.2V901.2M1137.60 485.2V901.2M1140.50 485.2V901.2M1143.40 485.2V901.2M1146.30 485.2V901.2M1149.20 485.2V901.2M1152.10 485.2V901.2M1155.00 485.2V901.2M1157.90 485.2V901.2M1160.80 485.2V901.2M1163.70 485.2V901.2M1166.60 485.2V901.2M1169.50 485.2V901.2M1172.40 485.2V901.2M1175.30 485.2V901.2M1178.20 485.2V901.2M1181.10 485.2V901.2M1184.00 485.2V901.2M1186.90 485.2V901.2M1189.80 485.2V901.2M1192.70 485.2V901.2M1195.60 485.2V901.2M1198.50 485.2V901.2M1201.40 485.2V901.2M1204.30 485.2V901.2M1207.20 485.2V901.2M1210.10 485.2V901.2M1213.00 485.2V901.2M1215.90 485.2V901.2M1218.80 485.2V901.2M1221.70 485.2V901.2M1224.60 485.2V901.2M1227.50 485.2V901.2M1230.40 485.2V901.2M1233.30 485.2V901.2M1236.20 485.2V901.2M1239.10 485.2V901.2M1242.00 485.2V901.2M1244.90 485.2V901.2M1247.80 485.2V901.2M1250.70 485.2V901.2M1253.60 485.2V901.2M1256.50 485.2V901.2M1259.40 485.2V901.2M1262.30 485.2V901.2M1265.20 485.2V901.2M1268.10 485.2V901.2M1271.00 485.2V901.2M1273.90 485.2V901.2M1276.80 485.2V901.2M1279.70 485.2V901.2M1282.60 485.2V901.2M1285.50 485.2V901.2M1288.40 485.2V901.2M1291.30 485.2V901.2M1294.20 485.2V901.2M1297.10 485.2V901.2M1300.00 485.2V901.2M1302.90 485.2V901.2M1305.80 485.2V901.2M1308.70 485.2V901.2M1311.60 485.2V901.2M1314.50 485.2V901.2M1317.40 485.2V901.2M1320.30 485.2V901.2M1323.20 485.2V901.2M1326.10 485.2V901.2M1329.00 485.2V901.2M1331.90 485.2V901.2M1334.80 485.2V901.2M1337.70 485.2V901.2M1340.60 485.2V901.2M1343.50 485.2V901.2M1346.40 485.2V901.2M1349.30 485.2V901.2M1352.20 485.2V901.2M1355.10 485.2V901.2M1358.00 485.2V901.2M1360.90 485.2V901.2M1363.80 485.2V901.2M1366.70 485.2V901.2M1369.60 485.2V901.2M1372.50 485.2V901.2M1375.40 485.2V901.2M1378.30 485.2V901.2M1381.20 485.2V901.2" stroke="#717171" stroke-width="1.4" fill="none"/>
<rect x="251.5" y="482.2" width="1133.0" height="3.6" fill="#050505"/>
<line x1="251.5" y1="485.6" x2="1384.5" y2="485.6" stroke="#1fb01f" stroke-width="1" />
<line x1="298.8" y1="488" x2="298.8" y2="899" stroke="#404040" stroke-width="1.4" opacity=".8"/>
<line x1="298.8" y1="488" x2="298.8" y2="899" stroke="#7a7a7a" stroke-width="1.9" stroke-dasharray="17 2.6 3.5 2.6" opacity=".9"/>
<line x1="359.9" y1="488" x2="359.9" y2="899" stroke="#404040" stroke-width="1.4" opacity=".8"/>
<line x1="359.9" y1="488" x2="359.9" y2="899" stroke="#7a7a7a" stroke-width="1.9" stroke-dasharray="17 2.6 3.5 2.6" opacity=".9"/>
<line x1="421.0" y1="488" x2="421.0" y2="899" stroke="#404040" stroke-width="1.4" opacity=".8"/>
<line x1="421.0" y1="488" x2="421.0" y2="899" stroke="#7a7a7a" stroke-width="1.9" stroke-dasharray="17 2.6 3.5 2.6" opacity=".9"/>
<line x1="482.1" y1="488" x2="482.1" y2="899" stroke="#404040" stroke-width="1.4" opacity=".8"/>
<line x1="482.1" y1="488" x2="482.1" y2="899" stroke="#7a7a7a" stroke-width="1.9" stroke-dasharray="17 2.6 3.5 2.6" opacity=".9"/>
<line x1="543.1" y1="488" x2="543.1" y2="899" stroke="#404040" stroke-width="1.4" opacity=".8"/>
<line x1="543.1" y1="488" x2="543.1" y2="899" stroke="#7a7a7a" stroke-width="1.9" stroke-dasharray="17 2.6 3.5 2.6" opacity=".9"/>
<line x1="604.2" y1="488" x2="604.2" y2="899" stroke="#404040" stroke-width="1.4" opacity=".8"/>
<line x1="604.2" y1="488" x2="604.2" y2="899" stroke="#7a7a7a" stroke-width="1.9" stroke-dasharray="17 2.6 3.5 2.6" opacity=".9"/>
<line x1="665.3" y1="488" x2="665.3" y2="899" stroke="#404040" stroke-width="1.4" opacity=".8"/>
<line x1="665.3" y1="488" x2="665.3" y2="899" stroke="#7a7a7a" stroke-width="1.9" stroke-dasharray="17 2.6 3.5 2.6" opacity=".9"/>
<line x1="726.4" y1="488" x2="726.4" y2="899" stroke="#404040" stroke-width="1.4" opacity=".8"/>
<line x1="726.4" y1="488" x2="726.4" y2="899" stroke="#7a7a7a" stroke-width="1.9" stroke-dasharray="17 2.6 3.5 2.6" opacity=".9"/>
<line x1="787.5" y1="488" x2="787.5" y2="899" stroke="#404040" stroke-width="1.4" opacity=".8"/>
<line x1="787.5" y1="488" x2="787.5" y2="899" stroke="#7a7a7a" stroke-width="1.9" stroke-dasharray="17 2.6 3.5 2.6" opacity=".9"/>
<line x1="848.5" y1="488" x2="848.5" y2="899" stroke="#404040" stroke-width="1.4" opacity=".8"/>
<line x1="848.5" y1="488" x2="848.5" y2="899" stroke="#7a7a7a" stroke-width="1.9" stroke-dasharray="17 2.6 3.5 2.6" opacity=".9"/>
<line x1="909.6" y1="488" x2="909.6" y2="899" stroke="#404040" stroke-width="1.4" opacity=".8"/>
<line x1="909.6" y1="488" x2="909.6" y2="899" stroke="#7a7a7a" stroke-width="1.9" stroke-dasharray="17 2.6 3.5 2.6" opacity=".9"/>
<line x1="970.7" y1="488" x2="970.7" y2="899" stroke="#404040" stroke-width="1.4" opacity=".8"/>
<line x1="970.7" y1="488" x2="970.7" y2="899" stroke="#7a7a7a" stroke-width="1.9" stroke-dasharray="17 2.6 3.5 2.6" opacity=".9"/>
<line x1="1031.8" y1="488" x2="1031.8" y2="899" stroke="#404040" stroke-width="1.4" opacity=".8"/>
<line x1="1031.8" y1="488" x2="1031.8" y2="899" stroke="#7a7a7a" stroke-width="1.9" stroke-dasharray="17 2.6 3.5 2.6" opacity=".9"/>
<line x1="1092.9" y1="488" x2="1092.9" y2="899" stroke="#404040" stroke-width="1.4" opacity=".8"/>
<line x1="1092.9" y1="488" x2="1092.9" y2="899" stroke="#7a7a7a" stroke-width="1.9" stroke-dasharray="17 2.6 3.5 2.6" opacity=".9"/>
<line x1="1153.9" y1="488" x2="1153.9" y2="899" stroke="#404040" stroke-width="1.4" opacity=".8"/>
<line x1="1153.9" y1="488" x2="1153.9" y2="899" stroke="#7a7a7a" stroke-width="1.9" stroke-dasharray="17 2.6 3.5 2.6" opacity=".9"/>
<line x1="1215.0" y1="488" x2="1215.0" y2="899" stroke="#404040" stroke-width="1.4" opacity=".8"/>
<line x1="1215.0" y1="488" x2="1215.0" y2="899" stroke="#7a7a7a" stroke-width="1.9" stroke-dasharray="17 2.6 3.5 2.6" opacity=".9"/>
<line x1="1276.1" y1="488" x2="1276.1" y2="899" stroke="#404040" stroke-width="1.4" opacity=".8"/>
<line x1="1276.1" y1="488" x2="1276.1" y2="899" stroke="#7a7a7a" stroke-width="1.9" stroke-dasharray="17 2.6 3.5 2.6" opacity=".9"/>
<line x1="1337.2" y1="488" x2="1337.2" y2="899" stroke="#404040" stroke-width="1.4" opacity=".8"/>
<line x1="1337.2" y1="488" x2="1337.2" y2="899" stroke="#7a7a7a" stroke-width="1.9" stroke-dasharray="17 2.6 3.5 2.6" opacity=".9"/>
<line x1="255.0" y1="488" x2="255.0" y2="899" stroke="#404040" stroke-width="1.2" opacity=".8"/>
<line x1="255.0" y1="488" x2="255.0" y2="899" stroke="#7a7a7a" stroke-width="1.4" stroke-dasharray="17 2.6 3.5 2.6" opacity=".9"/>
<line x1="251.5" y1="539.5" x2="1384.5" y2="539.5" stroke="#b0b0b0" stroke-width="1" stroke-dasharray="40 3 4 3" opacity="0.42"/>
<line x1="251.5" y1="845.0" x2="1384.5" y2="845.0" stroke="#b0b0b0" stroke-width="1" stroke-dasharray="40 3 4 3" opacity="0.42"/>
<line x1="251.5" y1="680.3" x2="1384.5" y2="680.3" stroke="#b0b0b0" stroke-width="1" stroke-dasharray="20 4 3 4" opacity="0.42"/>
<line x1="251.5" y1="704.2" x2="1384.5" y2="704.2" stroke="#b0b0b0" stroke-width="1" stroke-dasharray="20 4 3 4" opacity="0.42"/>
<line x1="292.8" y1="484.2" x2="304.8" y2="484.2" stroke="#6a6a6a" stroke-width="1" />
<line x1="292.8" y1="897.5" x2="304.8" y2="897.5" stroke="#707070" stroke-width="1" />
<line x1="353.9" y1="484.2" x2="365.9" y2="484.2" stroke="#6a6a6a" stroke-width="1" />
<line x1="353.9" y1="897.5" x2="365.9" y2="897.5" stroke="#707070" stroke-width="1" />
<line x1="415.0" y1="484.2" x2="427.0" y2="484.2" stroke="#6a6a6a" stroke-width="1" />
<line x1="415.0" y1="897.5" x2="427.0" y2="897.5" stroke="#707070" stroke-width="1" />
<line x1="476.1" y1="484.2" x2="488.1" y2="484.2" stroke="#6a6a6a" stroke-width="1" />
<line x1="476.1" y1="897.5" x2="488.1" y2="897.5" stroke="#707070" stroke-width="1" />
<line x1="537.1" y1="484.2" x2="549.1" y2="484.2" stroke="#6a6a6a" stroke-width="1" />
<line x1="537.1" y1="897.5" x2="549.1" y2="897.5" stroke="#707070" stroke-width="1" />
<line x1="598.2" y1="484.2" x2="610.2" y2="484.2" stroke="#6a6a6a" stroke-width="1" />
<line x1="598.2" y1="897.5" x2="610.2" y2="897.5" stroke="#707070" stroke-width="1" />
<line x1="659.3" y1="484.2" x2="671.3" y2="484.2" stroke="#6a6a6a" stroke-width="1" />
<line x1="659.3" y1="897.5" x2="671.3" y2="897.5" stroke="#707070" stroke-width="1" />
<line x1="720.4" y1="484.2" x2="732.4" y2="484.2" stroke="#6a6a6a" stroke-width="1" />
<line x1="720.4" y1="897.5" x2="732.4" y2="897.5" stroke="#707070" stroke-width="1" />
<line x1="781.5" y1="484.2" x2="793.5" y2="484.2" stroke="#6a6a6a" stroke-width="1" />
<line x1="781.5" y1="897.5" x2="793.5" y2="897.5" stroke="#707070" stroke-width="1" />
<line x1="842.5" y1="484.2" x2="854.5" y2="484.2" stroke="#6a6a6a" stroke-width="1" />
<line x1="842.5" y1="897.5" x2="854.5" y2="897.5" stroke="#707070" stroke-width="1" />
<line x1="903.6" y1="484.2" x2="915.6" y2="484.2" stroke="#6a6a6a" stroke-width="1" />
<line x1="903.6" y1="897.5" x2="915.6" y2="897.5" stroke="#707070" stroke-width="1" />
<line x1="964.7" y1="484.2" x2="976.7" y2="484.2" stroke="#6a6a6a" stroke-width="1" />
<line x1="964.7" y1="897.5" x2="976.7" y2="897.5" stroke="#707070" stroke-width="1" />
<line x1="1025.8" y1="484.2" x2="1037.8" y2="484.2" stroke="#6a6a6a" stroke-width="1" />
<line x1="1025.8" y1="897.5" x2="1037.8" y2="897.5" stroke="#707070" stroke-width="1" />
<line x1="1086.9" y1="484.2" x2="1098.9" y2="484.2" stroke="#6a6a6a" stroke-width="1" />
<line x1="1086.9" y1="897.5" x2="1098.9" y2="897.5" stroke="#707070" stroke-width="1" />
<line x1="1147.9" y1="484.2" x2="1159.9" y2="484.2" stroke="#6a6a6a" stroke-width="1" />
<line x1="1147.9" y1="897.5" x2="1159.9" y2="897.5" stroke="#707070" stroke-width="1" />
<line x1="1209.0" y1="484.2" x2="1221.0" y2="484.2" stroke="#6a6a6a" stroke-width="1" />
<line x1="1209.0" y1="897.5" x2="1221.0" y2="897.5" stroke="#707070" stroke-width="1" />
<line x1="1270.1" y1="484.2" x2="1282.1" y2="484.2" stroke="#6a6a6a" stroke-width="1" />
<line x1="1270.1" y1="897.5" x2="1282.1" y2="897.5" stroke="#707070" stroke-width="1" />
<line x1="1331.2" y1="484.2" x2="1343.2" y2="484.2" stroke="#6a6a6a" stroke-width="1" />
<line x1="1331.2" y1="897.5" x2="1343.2" y2="897.5" stroke="#707070" stroke-width="1" />
<rect x="326.2" y="539.5" width="6.4" height="150.10000000000002" fill="url(#dh)" stroke="#00ff00" stroke-width="1"/>
<rect x="326.2" y="694.8" width="6.4" height="150.20000000000005" fill="url(#dh)" stroke="#00ff00" stroke-width="1"/>
<rect x="448.4" y="539.5" width="6.4" height="150.10000000000002" fill="url(#dh)" stroke="#00ff00" stroke-width="1"/>
<rect x="448.4" y="694.8" width="6.4" height="150.20000000000005" fill="url(#dh)" stroke="#00ff00" stroke-width="1"/>
<rect x="570.5" y="539.5" width="6.4" height="150.10000000000002" fill="url(#dh)" stroke="#00ff00" stroke-width="1"/>
<rect x="570.5" y="694.8" width="6.4" height="150.20000000000005" fill="url(#dh)" stroke="#00ff00" stroke-width="1"/>
<rect x="692.6" y="539.5" width="6.4" height="150.10000000000002" fill="url(#dh)" stroke="#00ff00" stroke-width="1"/>
<rect x="692.6" y="694.8" width="6.4" height="150.20000000000005" fill="url(#dh)" stroke="#00ff00" stroke-width="1"/>
<rect x="814.8" y="539.5" width="6.4" height="150.10000000000002" fill="url(#dh)" stroke="#00ff00" stroke-width="1"/>
<rect x="814.8" y="694.8" width="6.4" height="150.20000000000005" fill="url(#dh)" stroke="#00ff00" stroke-width="1"/>
<rect x="937.0" y="539.5" width="6.4" height="150.10000000000002" fill="url(#dh)" stroke="#00ff00" stroke-width="1"/>
<rect x="937.0" y="694.8" width="6.4" height="150.20000000000005" fill="url(#dh)" stroke="#00ff00" stroke-width="1"/>
<rect x="1059.1" y="539.5" width="6.4" height="150.10000000000002" fill="url(#dh)" stroke="#00ff00" stroke-width="1"/>
<rect x="1059.1" y="694.8" width="6.4" height="150.20000000000005" fill="url(#dh)" stroke="#00ff00" stroke-width="1"/>
<rect x="1181.2" y="539.5" width="6.4" height="150.10000000000002" fill="url(#dh)" stroke="#00ff00" stroke-width="1"/>
<rect x="1181.2" y="694.8" width="6.4" height="150.20000000000005" fill="url(#dh)" stroke="#00ff00" stroke-width="1"/>
<rect x="1303.5" y="539.5" width="6.4" height="150.10000000000002" fill="url(#dh)" stroke="#00ff00" stroke-width="1"/>
<rect x="1303.5" y="694.8" width="6.4" height="150.20000000000005" fill="url(#dh)" stroke="#00ff00" stroke-width="1"/>
<rect x="251.5" y="689.6" width="1133.0" height="5.2" fill="#0c0c0c"/>
<line x1="251.5" y1="690.4" x2="1384.5" y2="690.4" stroke="#0a900a" stroke-width="1.4" />
<line x1="251.5" y1="694.3" x2="1384.5" y2="694.3" stroke="#0a8a0a" stroke-width="1" />
<line x1="251.5" y1="692.5" x2="1384.5" y2="692.5" stroke="#e01800" stroke-width="1.5" />
<line x1="259.5" y1="692.5" x2="1384.5" y2="692.5" stroke="#10e010" stroke-width="1.5" stroke-dasharray="2.5 3 2.5 18"/>
<circle cx="275.9" cy="680.3" r="2.6" fill="none" stroke="#20c020" stroke-width="1"/>
<circle cx="275.9" cy="704.2" r="2.6" fill="none" stroke="#20c020" stroke-width="1"/>
<circle cx="390.4" cy="680.3" r="2.6" fill="none" stroke="#20c020" stroke-width="1"/>
<circle cx="390.4" cy="704.2" r="2.6" fill="none" stroke="#20c020" stroke-width="1"/>
<circle cx="512.6" cy="680.3" r="2.6" fill="none" stroke="#20c020" stroke-width="1"/>
<circle cx="512.6" cy="704.2" r="2.6" fill="none" stroke="#20c020" stroke-width="1"/>
<circle cx="634.8" cy="680.3" r="2.6" fill="none" stroke="#20c020" stroke-width="1"/>
<circle cx="634.8" cy="704.2" r="2.6" fill="none" stroke="#20c020" stroke-width="1"/>
<circle cx="757.0" cy="680.3" r="2.6" fill="none" stroke="#20c020" stroke-width="1"/>
<circle cx="757.0" cy="704.2" r="2.6" fill="none" stroke="#20c020" stroke-width="1"/>
<circle cx="879.0" cy="680.3" r="2.6" fill="none" stroke="#20c020" stroke-width="1"/>
<circle cx="879.0" cy="704.2" r="2.6" fill="none" stroke="#20c020" stroke-width="1"/>
<circle cx="1001.2" cy="680.3" r="2.6" fill="none" stroke="#20c020" stroke-width="1"/>
<circle cx="1001.2" cy="704.2" r="2.6" fill="none" stroke="#20c020" stroke-width="1"/>
<circle cx="1123.4" cy="680.3" r="2.6" fill="none" stroke="#20c020" stroke-width="1"/>
<circle cx="1123.4" cy="704.2" r="2.6" fill="none" stroke="#20c020" stroke-width="1"/>
<circle cx="1245.5" cy="680.3" r="2.6" fill="none" stroke="#20c020" stroke-width="1"/>
<circle cx="1245.5" cy="704.2" r="2.6" fill="none" stroke="#20c020" stroke-width="1"/>
<circle cx="1360.1" cy="680.3" r="2.6" fill="none" stroke="#20c020" stroke-width="1"/>
<circle cx="1360.1" cy="704.2" r="2.6" fill="none" stroke="#20c020" stroke-width="1"/>
<rect x="251.5" y="482.2" width="1133.0" height="420.00000000000006" fill="none" stroke="#00ff00" stroke-width="2"/>
<rect x="260.5" y="578.5" width="13" height="39" fill="#000"/>
<text x="270.5" y="615.5" font-size="11.5" fill="#ffff66" text-anchor="start" font-style="italic" font-family='"Liberation Sans","Noto Sans CJK SC",sans-serif' transform="rotate(-90 270.5 615.5)" font-weight="normal" letter-spacing="1">i=1/10</text>
<line x1="274" y1="574" x2="274" y2="579" stroke="#9a9a9a" stroke-width="1" />
<rect x="260.5" y="765.5" width="13" height="39" fill="#000"/>
<text x="270.5" y="802.5" font-size="11.5" fill="#ffff66" text-anchor="start" font-style="italic" font-family='"Liberation Sans","Noto Sans CJK SC",sans-serif' transform="rotate(-90 270.5 802.5)" font-weight="normal" letter-spacing="1">i=1/10</text>
<line x1="274" y1="809" x2="274" y2="804" stroke="#9a9a9a" stroke-width="1" />
<rect x="620.5" y="578.5" width="13" height="39" fill="#000"/>
<text x="630.5" y="615.5" font-size="11.5" fill="#ffff66" text-anchor="start" font-style="italic" font-family='"Liberation Sans","Noto Sans CJK SC",sans-serif' transform="rotate(-90 630.5 615.5)" font-weight="normal" letter-spacing="1">i=1/10</text>
<line x1="634" y1="574" x2="634" y2="579" stroke="#9a9a9a" stroke-width="1" />
<rect x="620.5" y="765.5" width="13" height="39" fill="#000"/>
<text x="630.5" y="802.5" font-size="11.5" fill="#ffff66" text-anchor="start" font-style="italic" font-family='"Liberation Sans","Noto Sans CJK SC",sans-serif' transform="rotate(-90 630.5 802.5)" font-weight="normal" letter-spacing="1">i=1/10</text>
<line x1="634" y1="809" x2="634" y2="804" stroke="#9a9a9a" stroke-width="1" />
<rect x="864.5" y="578.5" width="13" height="39" fill="#000"/>
<text x="874.5" y="615.5" font-size="11.5" fill="#ffff66" text-anchor="start" font-style="italic" font-family='"Liberation Sans","Noto Sans CJK SC",sans-serif' transform="rotate(-90 874.5 615.5)" font-weight="normal" letter-spacing="1">i=1/10</text>
<line x1="878" y1="574" x2="878" y2="579" stroke="#9a9a9a" stroke-width="1" />
<rect x="864.5" y="765.5" width="13" height="39" fill="#000"/>
<text x="874.5" y="802.5" font-size="11.5" fill="#ffff66" text-anchor="start" font-style="italic" font-family='"Liberation Sans","Noto Sans CJK SC",sans-serif' transform="rotate(-90 874.5 802.5)" font-weight="normal" letter-spacing="1">i=1/10</text>
<line x1="878" y1="809" x2="878" y2="804" stroke="#9a9a9a" stroke-width="1" />
<rect x="1109.5" y="578.5" width="13" height="39" fill="#000"/>
<text x="1119.5" y="615.5" font-size="11.5" fill="#ffff66" text-anchor="start" font-style="italic" font-family='"Liberation Sans","Noto Sans CJK SC",sans-serif' transform="rotate(-90 1119.5 615.5)" font-weight="normal" letter-spacing="1">i=1/10</text>
<line x1="1123" y1="574" x2="1123" y2="579" stroke="#9a9a9a" stroke-width="1" />
<rect x="1109.5" y="765.5" width="13" height="39" fill="#000"/>
<text x="1119.5" y="802.5" font-size="11.5" fill="#ffff66" text-anchor="start" font-style="italic" font-family='"Liberation Sans","Noto Sans CJK SC",sans-serif' transform="rotate(-90 1119.5 802.5)" font-weight="normal" letter-spacing="1">i=1/10</text>
<line x1="1123" y1="809" x2="1123" y2="804" stroke="#9a9a9a" stroke-width="1" />
<rect x="1345.5" y="578.5" width="13" height="39" fill="#000"/>
<text x="1355.5" y="615.5" font-size="11.5" fill="#ffff66" text-anchor="start" font-style="italic" font-family='"Liberation Sans","Noto Sans CJK SC",sans-serif' transform="rotate(-90 1355.5 615.5)" font-weight="normal" letter-spacing="1">i=1/10</text>
<line x1="1359" y1="574" x2="1359" y2="579" stroke="#9a9a9a" stroke-width="1" />
<rect x="1345.5" y="765.5" width="13" height="39" fill="#000"/>
<text x="1355.5" y="802.5" font-size="11.5" fill="#ffff66" text-anchor="start" font-style="italic" font-family='"Liberation Sans","Noto Sans CJK SC",sans-serif' transform="rotate(-90 1355.5 802.5)" font-weight="normal" letter-spacing="1">i=1/10</text>
<line x1="1359" y1="809" x2="1359" y2="804" stroke="#9a9a9a" stroke-width="1" />
<rect x="484" y="596.5" width="40" height="10" fill="#000"/>
<text x="489" y="605" font-size="8.5" fill="#ffff66" text-anchor="start" font-style="italic" font-family='"Liberation Sans","Noto Sans CJK SC",sans-serif' font-weight="bold">FRP<tspan font-size="5.5" font-style="normal">采光板</tspan></text>
<line x1="456" y1="607.5" x2="524" y2="607.5" stroke="#7e7e7e" stroke-width="1" />
<rect x="366" y="640.5" width="73" height="10.5" fill="#000"/>
<text x="367" y="649.5" font-size="8.5" fill="#ffff66" text-anchor="start" font-style="italic" font-family='"Liberation Sans","Noto Sans CJK SC",sans-serif' font-weight="bold">Φ600<tspan font-size="5.5" font-style="normal">无动力自然通风扇</tspan></text>
<line x1="363" y1="651.5" x2="391" y2="680" stroke="#7e7e7e" stroke-width="1" />
<rect x="1030" y="735" width="26" height="8.5" fill="#000"/>
<text x="1031" y="742" font-size="5.5" fill="#ffff66" text-anchor="start" font-style="normal" font-weight="bold">屋脊收边</text>
<line x1="1015" y1="694" x2="1030" y2="744" stroke="#7e7e7e" stroke-width="1" />
<line x1="1030" y1="744.5" x2="1056" y2="744.5" stroke="#7e7e7e" stroke-width="1" />
<line x1="253.5" y1="468" x2="253.5" y2="477" stroke="#a0a0a0" stroke-width="1" />
<line x1="299.3" y1="468" x2="299.3" y2="477" stroke="#a0a0a0" stroke-width="1" />
<line x1="360.4" y1="468" x2="360.4" y2="477" stroke="#a0a0a0" stroke-width="1" />
<line x1="421.5" y1="468" x2="421.5" y2="477" stroke="#a0a0a0" stroke-width="1" />
<line x1="482.6" y1="468" x2="482.6" y2="477" stroke="#a0a0a0" stroke-width="1" />
<line x1="543.6" y1="468" x2="543.6" y2="477" stroke="#a0a0a0" stroke-width="1" />
<line x1="604.7" y1="468" x2="604.7" y2="477" stroke="#a0a0a0" stroke-width="1" />
<line x1="665.8" y1="468" x2="665.8" y2="477" stroke="#a0a0a0" stroke-width="1" />
<line x1="726.9" y1="468" x2="726.9" y2="477" stroke="#a0a0a0" stroke-width="1" />
<line x1="788.0" y1="468" x2="788.0" y2="477" stroke="#a0a0a0" stroke-width="1" />
<line x1="849.0" y1="468" x2="849.0" y2="477" stroke="#a0a0a0" stroke-width="1" />
<line x1="910.1" y1="468" x2="910.1" y2="477" stroke="#a0a0a0" stroke-width="1" />
<line x1="971.2" y1="468" x2="971.2" y2="477" stroke="#a0a0a0" stroke-width="1" />
<line x1="1032.3" y1="468" x2="1032.3" y2="477" stroke="#a0a0a0" stroke-width="1" />
<line x1="1093.4" y1="468" x2="1093.4" y2="477" stroke="#a0a0a0" stroke-width="1" />
<line x1="1154.4" y1="468" x2="1154.4" y2="477" stroke="#a0a0a0" stroke-width="1" />
<line x1="1215.5" y1="468" x2="1215.5" y2="477" stroke="#a0a0a0" stroke-width="1" />
<line x1="1276.6" y1="468" x2="1276.6" y2="477" stroke="#a0a0a0" stroke-width="1" />
<line x1="1337.7" y1="468" x2="1337.7" y2="477" stroke="#a0a0a0" stroke-width="1" />
<line x1="253.5" y1="902" x2="253.5" y2="986" stroke="#9a9a9a" stroke-width="1" stroke-dasharray="26 3 3 3"/>
<circle cx="253.0" cy="996" r="8.8" fill="none" stroke="#8f8f8f" stroke-width="1.2"/>
<text x="253.0" y="1001" font-size="14" fill="#9c9c9c" text-anchor="middle" font-style="normal" >1</text>
<line x1="299.3" y1="902" x2="299.3" y2="986" stroke="#9a9a9a" stroke-width="1" stroke-dasharray="26 3 3 3"/>
<circle cx="298.8" cy="996" r="8.8" fill="none" stroke="#8f8f8f" stroke-width="1.2"/>
<text x="298.8" y="1001" font-size="14" fill="#9c9c9c" text-anchor="middle" font-style="normal" >2</text>
<line x1="360.4" y1="902" x2="360.4" y2="986" stroke="#9a9a9a" stroke-width="1" stroke-dasharray="26 3 3 3"/>
<circle cx="359.9" cy="996" r="8.8" fill="none" stroke="#8f8f8f" stroke-width="1.2"/>
<text x="359.9" y="1001" font-size="14" fill="#9c9c9c" text-anchor="middle" font-style="normal" >3</text>
<line x1="421.5" y1="902" x2="421.5" y2="986" stroke="#9a9a9a" stroke-width="1" stroke-dasharray="26 3 3 3"/>
<circle cx="421.0" cy="996" r="8.8" fill="none" stroke="#8f8f8f" stroke-width="1.2"/>
<text x="421.0" y="1001" font-size="14" fill="#9c9c9c" text-anchor="middle" font-style="normal" >4</text>
<line x1="482.6" y1="902" x2="482.6" y2="986" stroke="#9a9a9a" stroke-width="1" stroke-dasharray="26 3 3 3"/>
<circle cx="482.1" cy="996" r="8.8" fill="none" stroke="#8f8f8f" stroke-width="1.2"/>
<text x="482.1" y="1001" font-size="14" fill="#9c9c9c" text-anchor="middle" font-style="normal" >5</text>
<line x1="543.6" y1="902" x2="543.6" y2="986" stroke="#9a9a9a" stroke-width="1" stroke-dasharray="26 3 3 3"/>
<circle cx="543.1" cy="996" r="8.8" fill="none" stroke="#8f8f8f" stroke-width="1.2"/>
<text x="543.1" y="1001" font-size="14" fill="#9c9c9c" text-anchor="middle" font-style="normal" >6</text>
<line x1="604.7" y1="902" x2="604.7" y2="986" stroke="#9a9a9a" stroke-width="1" stroke-dasharray="26 3 3 3"/>
<circle cx="604.2" cy="996" r="8.8" fill="none" stroke="#8f8f8f" stroke-width="1.2"/>
<text x="604.2" y="1001" font-size="14" fill="#9c9c9c" text-anchor="middle" font-style="normal" >7</text>
<line x1="665.8" y1="902" x2="665.8" y2="986" stroke="#9a9a9a" stroke-width="1" stroke-dasharray="26 3 3 3"/>
<circle cx="665.3" cy="996" r="8.8" fill="none" stroke="#8f8f8f" stroke-width="1.2"/>
<text x="665.3" y="1001" font-size="14" fill="#9c9c9c" text-anchor="middle" font-style="normal" >8</text>
<line x1="726.9" y1="902" x2="726.9" y2="986" stroke="#9a9a9a" stroke-width="1" stroke-dasharray="26 3 3 3"/>
<circle cx="726.4" cy="996" r="8.8" fill="none" stroke="#8f8f8f" stroke-width="1.2"/>
<text x="726.4" y="1001" font-size="14" fill="#9c9c9c" text-anchor="middle" font-style="normal" >9</text>
<line x1="788.0" y1="902" x2="788.0" y2="986" stroke="#9a9a9a" stroke-width="1" stroke-dasharray="26 3 3 3"/>
<circle cx="787.5" cy="996" r="8.8" fill="none" stroke="#8f8f8f" stroke-width="1.2"/>
<text x="787.5" y="1000.5" font-size="13" fill="#9c9c9c" text-anchor="middle" font-style="normal" letter-spacing="-1.2" textLength="13" lengthAdjust="spacingAndGlyphs">10</text>
<line x1="849.0" y1="902" x2="849.0" y2="986" stroke="#9a9a9a" stroke-width="1" stroke-dasharray="26 3 3 3"/>
<circle cx="848.5" cy="996" r="8.8" fill="none" stroke="#8f8f8f" stroke-width="1.2"/>
<text x="848.5" y="1000.5" font-size="13" fill="#9c9c9c" text-anchor="middle" font-style="normal" letter-spacing="-1.2" textLength="13" lengthAdjust="spacingAndGlyphs">11</text>
<line x1="910.1" y1="902" x2="910.1" y2="986" stroke="#9a9a9a" stroke-width="1" stroke-dasharray="26 3 3 3"/>
<circle cx="909.6" cy="996" r="8.8" fill="none" stroke="#8f8f8f" stroke-width="1.2"/>
<text x="909.6" y="1000.5" font-size="13" fill="#9c9c9c" text-anchor="middle" font-style="normal" letter-spacing="-1.2" textLength="13" lengthAdjust="spacingAndGlyphs">12</text>
<line x1="971.2" y1="902" x2="971.2" y2="986" stroke="#9a9a9a" stroke-width="1" stroke-dasharray="26 3 3 3"/>
<circle cx="970.7" cy="996" r="8.8" fill="none" stroke="#8f8f8f" stroke-width="1.2"/>
<text x="970.7" y="1000.5" font-size="13" fill="#9c9c9c" text-anchor="middle" font-style="normal" letter-spacing="-1.2" textLength="13" lengthAdjust="spacingAndGlyphs">13</text>
<line x1="1032.3" y1="902" x2="1032.3" y2="986" stroke="#9a9a9a" stroke-width="1" stroke-dasharray="26 3 3 3"/>
<circle cx="1031.8" cy="996" r="8.8" fill="none" stroke="#8f8f8f" stroke-width="1.2"/>
<text x="1031.8" y="1000.5" font-size="13" fill="#9c9c9c" text-anchor="middle" font-style="normal" letter-spacing="-1.2" textLength="13" lengthAdjust="spacingAndGlyphs">14</text>
<line x1="1093.4" y1="902" x2="1093.4" y2="986" stroke="#9a9a9a" stroke-width="1" stroke-dasharray="26 3 3 3"/>
<circle cx="1092.9" cy="996" r="8.8" fill="none" stroke="#8f8f8f" stroke-width="1.2"/>
<text x="1092.9" y="1000.5" font-size="13" fill="#9c9c9c" text-anchor="middle" font-style="normal" letter-spacing="-1.2" textLength="13" lengthAdjust="spacingAndGlyphs">15</text>
<line x1="1154.4" y1="902" x2="1154.4" y2="986" stroke="#9a9a9a" stroke-width="1" stroke-dasharray="26 3 3 3"/>
<circle cx="1153.9" cy="996" r="8.8" fill="none" stroke="#8f8f8f" stroke-width="1.2"/>
<text x="1153.9" y="1000.5" font-size="13" fill="#9c9c9c" text-anchor="middle" font-style="normal" letter-spacing="-1.2" textLength="13" lengthAdjust="spacingAndGlyphs">16</text>
<line x1="1215.5" y1="902" x2="1215.5" y2="986" stroke="#9a9a9a" stroke-width="1" stroke-dasharray="26 3 3 3"/>
<circle cx="1215.0" cy="996" r="8.8" fill="none" stroke="#8f8f8f" stroke-width="1.2"/>
<text x="1215.0" y="1000.5" font-size="13" fill="#9c9c9c" text-anchor="middle" font-style="normal" letter-spacing="-1.2" textLength="13" lengthAdjust="spacingAndGlyphs">17</text>
<line x1="1276.6" y1="902" x2="1276.6" y2="986" stroke="#9a9a9a" stroke-width="1" stroke-dasharray="26 3 3 3"/>
<circle cx="1276.1" cy="996" r="8.8" fill="none" stroke="#8f8f8f" stroke-width="1.2"/>
<text x="1276.1" y="1000.5" font-size="13" fill="#9c9c9c" text-anchor="middle" font-style="normal" letter-spacing="-1.2" textLength="13" lengthAdjust="spacingAndGlyphs">18</text>
<line x1="1337.7" y1="902" x2="1337.7" y2="986" stroke="#9a9a9a" stroke-width="1" stroke-dasharray="26 3 3 3"/>
<circle cx="1337.2" cy="996" r="8.8" fill="none" stroke="#8f8f8f" stroke-width="1.2"/>
<text x="1337.2" y="1000.5" font-size="13" fill="#9c9c9c" text-anchor="middle" font-style="normal" letter-spacing="-1.2" textLength="13" lengthAdjust="spacingAndGlyphs">19</text>
<line x1="1383.5" y1="902" x2="1383.5" y2="986" stroke="#9a9a9a" stroke-width="1" stroke-dasharray="26 3 3 3"/>
<circle cx="1383.0" cy="996" r="8.8" fill="none" stroke="#8f8f8f" stroke-width="1.2"/>
<text x="1383.0" y="1000.5" font-size="13" fill="#9c9c9c" text-anchor="middle" font-style="normal" letter-spacing="-1.2" textLength="13" lengthAdjust="spacingAndGlyphs">20</text>
<line x1="212" y1="947.5" x2="1447" y2="947.5" stroke="#8f8f8f" stroke-width="1" />
<line x1="250" y1="968.5" x2="1386" y2="968.5" stroke="#8f8f8f" stroke-width="1" />
<line x1="213.1" y1="949.3" x2="216.70000000000002" y2="945.7" stroke="#a8a8a8" stroke-width="1" />
<line x1="251.2" y1="949.3" x2="254.8" y2="945.7" stroke="#a8a8a8" stroke-width="1" />
<line x1="297.0" y1="949.3" x2="300.6" y2="945.7" stroke="#a8a8a8" stroke-width="1" />
<line x1="358.09999999999997" y1="949.3" x2="361.7" y2="945.7" stroke="#a8a8a8" stroke-width="1" />
<line x1="419.2" y1="949.3" x2="422.8" y2="945.7" stroke="#a8a8a8" stroke-width="1" />
<line x1="480.3" y1="949.3" x2="483.90000000000003" y2="945.7" stroke="#a8a8a8" stroke-width="1" />
<line x1="541.3000000000001" y1="949.3" x2="544.9" y2="945.7" stroke="#a8a8a8" stroke-width="1" />
<line x1="602.4000000000001" y1="949.3" x2="606.0" y2="945.7" stroke="#a8a8a8" stroke-width="1" />
<line x1="663.5" y1="949.3" x2="667.0999999999999" y2="945.7" stroke="#a8a8a8" stroke-width="1" />
<line x1="724.6" y1="949.3" x2="728.1999999999999" y2="945.7" stroke="#a8a8a8" stroke-width="1" />
<line x1="785.7" y1="949.3" x2="789.3" y2="945.7" stroke="#a8a8a8" stroke-width="1" />
<line x1="846.7" y1="949.3" x2="850.3" y2="945.7" stroke="#a8a8a8" stroke-width="1" />
<line x1="907.8000000000001" y1="949.3" x2="911.4" y2="945.7" stroke="#a8a8a8" stroke-width="1" />
<line x1="968.9000000000001" y1="949.3" x2="972.5" y2="945.7" stroke="#a8a8a8" stroke-width="1" />
<line x1="1030.0" y1="949.3" x2="1033.6" y2="945.7" stroke="#a8a8a8" stroke-width="1" />
<line x1="1091.1000000000001" y1="949.3" x2="1094.7" y2="945.7" stroke="#a8a8a8" stroke-width="1" />
<line x1="1152.1000000000001" y1="949.3" x2="1155.7" y2="945.7" stroke="#a8a8a8" stroke-width="1" />
<line x1="1213.2" y1="949.3" x2="1216.8" y2="945.7" stroke="#a8a8a8" stroke-width="1" />
<line x1="1274.3" y1="949.3" x2="1277.8999999999999" y2="945.7" stroke="#a8a8a8" stroke-width="1" />
<line x1="1335.4" y1="949.3" x2="1339.0" y2="945.7" stroke="#a8a8a8" stroke-width="1" />
<line x1="1381.2" y1="949.3" x2="1384.8" y2="945.7" stroke="#a8a8a8" stroke-width="1" />
<line x1="1405.2" y1="949.3" x2="1408.8" y2="945.7" stroke="#a8a8a8" stroke-width="1" />
<line x1="1443.2" y1="949.3" x2="1446.8" y2="945.7" stroke="#a8a8a8" stroke-width="1" />
<line x1="251.2" y1="970.3" x2="254.8" y2="966.7" stroke="#a8a8a8" stroke-width="1" />
<line x1="1381.2" y1="970.3" x2="1384.8" y2="966.7" stroke="#a8a8a8" stroke-width="1" />
<text x="233.5" y="945.5" font-size="7.5" fill="#ffff00" text-anchor="middle" font-style="italic" font-family='"Liberation Sans","Noto Sans CJK SC",sans-serif' font-weight="bold" letter-spacing="-0.3">5000</text>
<text x="276" y="945.5" font-size="7.5" fill="#ffff00" text-anchor="middle" font-style="italic" font-family='"Liberation Sans","Noto Sans CJK SC",sans-serif' font-weight="bold" letter-spacing="-0.3">4500</text>
<text x="329.35" y="945.5" font-size="7.5" fill="#ffff00" text-anchor="middle" font-style="italic" font-family='"Liberation Sans","Noto Sans CJK SC",sans-serif' font-weight="bold" letter-spacing="-0.3">6000</text>
<text x="390.45" y="945.5" font-size="7.5" fill="#ffff00" text-anchor="middle" font-style="italic" font-family='"Liberation Sans","Noto Sans CJK SC",sans-serif' font-weight="bold" letter-spacing="-0.3">6000</text>
<text x="451.55" y="945.5" font-size="7.5" fill="#ffff00" text-anchor="middle" font-style="italic" font-family='"Liberation Sans","Noto Sans CJK SC",sans-serif' font-weight="bold" letter-spacing="-0.3">6000</text>
<text x="512.6" y="945.5" font-size="7.5" fill="#ffff00" text-anchor="middle" font-style="italic" font-family='"Liberation Sans","Noto Sans CJK SC",sans-serif' font-weight="bold" letter-spacing="-0.3">6000</text>
<text x="573.6500000000001" y="945.5" font-size="7.5" fill="#ffff00" text-anchor="middle" font-style="italic" font-family='"Liberation Sans","Noto Sans CJK SC",sans-serif' font-weight="bold" letter-spacing="-0.3">6000</text>
<text x="634.75" y="945.5" font-size="7.5" fill="#ffff00" text-anchor="middle" font-style="italic" font-family='"Liberation Sans","Noto Sans CJK SC",sans-serif' font-weight="bold" letter-spacing="-0.3">6000</text>
<text x="695.8499999999999" y="945.5" font-size="7.5" fill="#ffff00" text-anchor="middle" font-style="italic" font-family='"Liberation Sans","Noto Sans CJK SC",sans-serif' font-weight="bold" letter-spacing="-0.3">6000</text>
<text x="756.95" y="945.5" font-size="7.5" fill="#ffff00" text-anchor="middle" font-style="italic" font-family='"Liberation Sans","Noto Sans CJK SC",sans-serif' font-weight="bold" letter-spacing="-0.3">6000</text>
<text x="818.0" y="945.5" font-size="7.5" fill="#ffff00" text-anchor="middle" font-style="italic" font-family='"Liberation Sans","Noto Sans CJK SC",sans-serif' font-weight="bold" letter-spacing="-0.3">6000</text>
<text x="879.05" y="945.5" font-size="7.5" fill="#ffff00" text-anchor="middle" font-style="italic" font-family='"Liberation Sans","Noto Sans CJK SC",sans-serif' font-weight="bold" letter-spacing="-0.3">6000</text>
<text x="940.1500000000001" y="945.5" font-size="7.5" fill="#ffff00" text-anchor="middle" font-style="italic" font-family='"Liberation Sans","Noto Sans CJK SC",sans-serif' font-weight="bold" letter-spacing="-0.3">6000</text>
<text x="1001.25" y="945.5" font-size="7.5" fill="#ffff00" text-anchor="middle" font-style="italic" font-family='"Liberation Sans","Noto Sans CJK SC",sans-serif' font-weight="bold" letter-spacing="-0.3">6000</text>
<text x="1062.35" y="945.5" font-size="7.5" fill="#ffff00" text-anchor="middle" font-style="italic" font-family='"Liberation Sans","Noto Sans CJK SC",sans-serif' font-weight="bold" letter-spacing="-0.3">6000</text>
<text x="1123.4" y="945.5" font-size="7.5" fill="#ffff00" text-anchor="middle" font-style="italic" font-family='"Liberation Sans","Noto Sans CJK SC",sans-serif' font-weight="bold" letter-spacing="-0.3">6000</text>
<text x="1184.45" y="945.5" font-size="7.5" fill="#ffff00" text-anchor="middle" font-style="italic" font-family='"Liberation Sans","Noto Sans CJK SC",sans-serif' font-weight="bold" letter-spacing="-0.3">6000</text>
<text x="1245.55" y="945.5" font-size="7.5" fill="#ffff00" text-anchor="middle" font-style="italic" font-family='"Liberation Sans","Noto Sans CJK SC",sans-serif' font-weight="bold" letter-spacing="-0.3">6000</text>
<text x="1306.65" y="945.5" font-size="7.5" fill="#ffff00" text-anchor="middle" font-style="italic" font-family='"Liberation Sans","Noto Sans CJK SC",sans-serif' font-weight="bold" letter-spacing="-0.3">6000</text>
<text x="1360" y="945.5" font-size="7.5" fill="#ffff00" text-anchor="middle" font-style="italic" font-family='"Liberation Sans","Noto Sans CJK SC",sans-serif' font-weight="bold" letter-spacing="-0.3">4500</text>
<text x="1395" y="945.5" font-size="7.5" fill="#ffff00" text-anchor="middle" font-style="italic" font-family='"Liberation Sans","Noto Sans CJK SC",sans-serif' font-weight="bold" letter-spacing="-0.3">5000</text>
<text x="1426" y="945.5" font-size="7.5" fill="#ffff00" text-anchor="middle" font-style="italic" font-family='"Liberation Sans","Noto Sans CJK SC",sans-serif' font-weight="bold" letter-spacing="-0.3">5000</text>
<text x="817" y="966.5" font-size="7.5" fill="#ffff00" text-anchor="middle" font-style="italic" font-family='"Liberation Sans","Noto Sans CJK SC",sans-serif' font-weight="bold" letter-spacing="-0.3">111000</text>
<text x="251" y="925" font-size="7" fill="#ffff00" text-anchor="middle" font-style="italic" font-family='"Liberation Sans","Noto Sans CJK SC",sans-serif' font-weight="bold" letter-spacing="-0.3">200</text>
<text x="1384" y="925" font-size="7" fill="#ffff00" text-anchor="middle" font-style="italic" font-family='"Liberation Sans","Noto Sans CJK SC",sans-serif' font-weight="bold" letter-spacing="-0.3">200</text>
<line x1="251.5" y1="902" x2="251.5" y2="930" stroke="#8f8f8f" stroke-width="1" />
<line x1="250.2" y1="930.8" x2="253.8" y2="927.2" stroke="#a8a8a8" stroke-width="1" />
<line x1="1382.2" y1="930.8" x2="1385.8" y2="927.2" stroke="#a8a8a8" stroke-width="1" />
<line x1="1384.5" y1="902" x2="1384.5" y2="930" stroke="#8f8f8f" stroke-width="1" />
<line x1="214.9" y1="846" x2="214.9" y2="951" stroke="#8f8f8f" stroke-width="1" />
<line x1="1407" y1="892" x2="1407" y2="951" stroke="#8f8f8f" stroke-width="1" />
<line x1="1445" y1="890" x2="1445" y2="951" stroke="#8f8f8f" stroke-width="1" />
<text x="345" y="478" font-size="8" fill="#ffff66" text-anchor="start" font-style="italic" font-family='"Liberation Sans","Noto Sans CJK SC",sans-serif' font-weight="bold">1%</text>
<text x="363" y="478" font-size="8" fill="#ffff66" text-anchor="start" font-style="italic" font-family='"Liberation Sans","Noto Sans CJK SC",sans-serif' font-weight="bold">1%</text>
<text x="345" y="913" font-size="8" fill="#ffff66" text-anchor="start" font-style="italic" font-family='"Liberation Sans","Noto Sans CJK SC",sans-serif' font-weight="bold">1%</text>
<text x="363" y="913" font-size="8" fill="#ffff66" text-anchor="start" font-style="italic" font-family='"Liberation Sans","Noto Sans CJK SC",sans-serif' font-weight="bold">1%</text>
<text x="928.5" y="469" font-size="11" fill="#00ff00" text-anchor="start" font-style="normal" >A</text>
<line x1="936.6" y1="462.3" x2="950" y2="462.3" stroke="#ffffff" stroke-width="1.7" />
<line x1="946.8" y1="462" x2="946.8" y2="474" stroke="#ffffff" stroke-width="1.7" />
<text x="928.5" y="925.5" font-size="11" fill="#00ff00" text-anchor="start" font-style="normal" >A</text>
<line x1="936.6" y1="921.7" x2="950" y2="921.7" stroke="#ffffff" stroke-width="1.7" />
<line x1="946.8" y1="911" x2="946.8" y2="922" stroke="#ffffff" stroke-width="1.7" />
<text x="742" y="919" font-size="7" fill="#e07820" text-anchor="start" font-style="normal" >-1. 200</text>
<line x1="742" y1="921.5" x2="772" y2="921.5" stroke="#a0a0a0" stroke-width="1" />
<polygon points="743,922 751,922 747,926.5" fill="#a0a0a0"/>
<line x1="152" y1="482.5" x2="248" y2="482.5" stroke="#8f8f8f" stroke-width="1" />
<line x1="152" y1="901.5" x2="248" y2="901.5" stroke="#8f8f8f" stroke-width="1" />
<line x1="155.7" y1="480" x2="155.7" y2="904" stroke="#8f8f8f" stroke-width="1" />
<line x1="153.89999999999998" y1="484.3" x2="157.5" y2="480.7" stroke="#a8a8a8" stroke-width="1" />
<line x1="153.89999999999998" y1="541.3" x2="157.5" y2="537.7" stroke="#a8a8a8" stroke-width="1" />
<line x1="153.89999999999998" y1="846.8" x2="157.5" y2="843.2" stroke="#a8a8a8" stroke-width="1" />
<line x1="153.89999999999998" y1="903.3" x2="157.5" y2="899.7" stroke="#a8a8a8" stroke-width="1" />
<line x1="177.6" y1="491" x2="177.6" y2="542" stroke="#8f8f8f" stroke-width="1" />
<line x1="174" y1="493.7" x2="214" y2="493.7" stroke="#8f8f8f" stroke-width="1" />
<line x1="175.79999999999998" y1="495.5" x2="179.4" y2="491.9" stroke="#a8a8a8" stroke-width="1" />
<line x1="175.79999999999998" y1="541.3" x2="179.4" y2="537.7" stroke="#a8a8a8" stroke-width="1" />
<line x1="177.6" y1="724" x2="177.6" y2="893" stroke="#8f8f8f" stroke-width="1" />
<line x1="175.79999999999998" y1="727.8" x2="179.4" y2="724.2" stroke="#a8a8a8" stroke-width="1" />
<line x1="175.79999999999998" y1="846.8" x2="179.4" y2="843.2" stroke="#a8a8a8" stroke-width="1" />
<line x1="175.79999999999998" y1="892.3" x2="179.4" y2="888.7" stroke="#a8a8a8" stroke-width="1" />
<line x1="174" y1="726" x2="214" y2="726" stroke="#8f8f8f" stroke-width="1" />
<line x1="174" y1="890.5" x2="248" y2="890.5" stroke="#8f8f8f" stroke-width="1" />
<line x1="177.6" y1="676" x2="177.6" y2="708" stroke="#8f8f8f" stroke-width="1" />
<line x1="175.79999999999998" y1="682.0999999999999" x2="179.4" y2="678.5" stroke="#a8a8a8" stroke-width="1" />
<line x1="175.79999999999998" y1="706.0" x2="179.4" y2="702.4000000000001" stroke="#a8a8a8" stroke-width="1" />
<line x1="175.79999999999998" y1="694.3" x2="179.4" y2="690.7" stroke="#a8a8a8" stroke-width="1" />
<line x1="174" y1="680.3" x2="251" y2="680.3" stroke="#8f8f8f" stroke-width="1" stroke-dasharray="14 3 3 3"/>
<line x1="174" y1="704.2" x2="251" y2="704.2" stroke="#8f8f8f" stroke-width="1" stroke-dasharray="14 3 3 3"/>
<line x1="139.6" y1="539.5" x2="178" y2="539.5" stroke="#8f8f8f" stroke-width="1" />
<line x1="178" y1="539.5" x2="251.5" y2="539.5" stroke="#8f8f8f" stroke-width="1" stroke-dasharray="20 4 3 4"/>
<circle cx="130.7" cy="539.5" r="8.8" fill="none" stroke="#8f8f8f" stroke-width="1.2"/>
<text x="130.7" y="544.0" font-size="13" fill="#9c9c9c" text-anchor="middle" font-style="normal" >B</text>
<line x1="1447" y1="539.5" x2="1517" y2="539.5" stroke="#8f8f8f" stroke-width="1" stroke-dasharray="20 4 3 4"/>
<circle cx="1526.3" cy="539.5" r="8.8" fill="none" stroke="#8f8f8f" stroke-width="1.2"/>
<text x="1526.3" y="544.0" font-size="13" fill="#9c9c9c" text-anchor="middle" font-style="normal" >B</text>
<line x1="139.6" y1="845.0" x2="178" y2="845.0" stroke="#8f8f8f" stroke-width="1" />
<line x1="178" y1="845.0" x2="251.5" y2="845.0" stroke="#8f8f8f" stroke-width="1" stroke-dasharray="20 4 3 4"/>
<circle cx="130.7" cy="845.0" r="8.8" fill="none" stroke="#8f8f8f" stroke-width="1.2"/>
<text x="130.7" y="849.5" font-size="13" fill="#9c9c9c" text-anchor="middle" font-style="normal" >A</text>
<line x1="1447" y1="845.0" x2="1517" y2="845.0" stroke="#8f8f8f" stroke-width="1" stroke-dasharray="20 4 3 4"/>
<circle cx="1526.3" cy="845.0" r="8.8" fill="none" stroke="#8f8f8f" stroke-width="1.2"/>
<text x="1526.3" y="849.5" font-size="13" fill="#9c9c9c" text-anchor="middle" font-style="normal" >A</text>
<line x1="1385" y1="845.0" x2="1447" y2="845.0" stroke="#8f8f8f" stroke-width="1" stroke-dasharray="20 4 3 4"/>
<line x1="214.9" y1="493.7" x2="251" y2="493.7" stroke="#e00000" stroke-width="1.4" />
<line x1="214.9" y1="493" x2="214.9" y2="845.5" stroke="#a80000" stroke-width="2" />
<line x1="214.9" y1="845.5" x2="251" y2="845.5" stroke="#e00000" stroke-width="1.4" />
<line x1="214.9" y1="726.8" x2="251" y2="726.8" stroke="#f00000" stroke-width="1.4" />
<line x1="79" y1="692.6" x2="251" y2="692.6" stroke="#e00000" stroke-width="1.2" stroke-dasharray="30 4 3 4"/>
<text x="85" y="689.5" font-size="5.5" fill="#ffff66" text-anchor="start" font-style="normal" font-weight="bold">屋脊中心线</text>
<rect x="240.5" y="669.5" width="11" height="45.5" fill="url(#hh)" stroke="#00ff00" stroke-width="1"/>
<line x1="222" y1="669.5" x2="240" y2="669.5" stroke="#8f8f8f" stroke-width="1" />
<line x1="222" y1="715.5" x2="240" y2="715.5" stroke="#8f8f8f" stroke-width="1" />
<line x1="225.5" y1="667" x2="225.5" y2="718" stroke="#8f8f8f" stroke-width="1" />
<line x1="223.7" y1="671.3" x2="227.3" y2="667.7" stroke="#a8a8a8" stroke-width="1" />
<line x1="223.7" y1="717.3" x2="227.3" y2="713.7" stroke="#a8a8a8" stroke-width="1" />
<text x="223" y="700" font-size="7" fill="#ffff00" text-anchor="start" font-style="italic" font-family='"Liberation Sans","Noto Sans CJK SC",sans-serif' transform="rotate(-90 223 700)" font-weight="bold" letter-spacing="-0.3">6000</text>
<line x1="240.5" y1="646" x2="240.5" y2="669" stroke="#8f8f8f" stroke-width="1" />
<line x1="236" y1="647.5" x2="252" y2="647.5" stroke="#8f8f8f" stroke-width="1" />
<text x="236" y="646" font-size="7" fill="#ffff00" text-anchor="start" font-style="italic" font-family='"Liberation Sans","Noto Sans CJK SC",sans-serif' font-weight="bold" letter-spacing="-0.3">1500</text>
<text x="199" y="641.5" font-size="5.5" fill="#ffff66" text-anchor="start" font-style="normal" font-weight="bold">彩钢雨篷</text>
<line x1="193" y1="646.5" x2="231" y2="646.5" stroke="#8f8f8f" stroke-width="1" />
<line x1="231" y1="646.5" x2="240" y2="672" stroke="#8f8f8f" stroke-width="1" />
<text x="153" y="519" font-size="7" fill="#ffff00" text-anchor="start" font-style="italic" font-family='"Liberation Sans","Noto Sans CJK SC",sans-serif' transform="rotate(-90 153 519)" font-weight="bold" letter-spacing="-0.3">7500</text>
<text x="153" y="703" font-size="7" fill="#ffff00" text-anchor="start" font-style="italic" font-family='"Liberation Sans","Noto Sans CJK SC",sans-serif' transform="rotate(-90 153 703)" font-weight="bold" letter-spacing="-0.3">40000</text>
<text x="153" y="882" font-size="7" fill="#ffff00" text-anchor="start" font-style="italic" font-family='"Liberation Sans","Noto Sans CJK SC",sans-serif' transform="rotate(-90 153 882)" font-weight="bold" letter-spacing="-0.3">7500</text>
<text x="175" y="524" font-size="7" fill="#ffff00" text-anchor="start" font-style="italic" font-family='"Liberation Sans","Noto Sans CJK SC",sans-serif' transform="rotate(-90 175 524)" font-weight="bold" letter-spacing="-0.3">6000</text>
<text x="175" y="704" font-size="6" fill="#ffff00" text-anchor="start" font-style="italic" font-family='"Liberation Sans","Noto Sans CJK SC",sans-serif' transform="rotate(-90 175 704)" font-weight="bold" letter-spacing="-0.3">800</text>
<text x="175" y="691" font-size="6" fill="#ffff00" text-anchor="start" font-style="italic" font-family='"Liberation Sans","Noto Sans CJK SC",sans-serif' transform="rotate(-90 175 691)" font-weight="bold" letter-spacing="-0.3">800</text>
<text x="175" y="795" font-size="7" fill="#ffff00" text-anchor="start" font-style="italic" font-family='"Liberation Sans","Noto Sans CJK SC",sans-serif' transform="rotate(-90 175 795)" font-weight="bold" letter-spacing="-0.3">15400</text>
<text x="175" y="876" font-size="7" fill="#ffff00" text-anchor="start" font-style="italic" font-family='"Liberation Sans","Noto Sans CJK SC",sans-serif' transform="rotate(-90 175 876)" font-weight="bold" letter-spacing="-0.3">6000</text>
<text x="229" y="808" font-size="6" fill="#ffff66" text-anchor="start" font-style="normal" transform="rotate(-90 229 808)" font-weight="bold" letter-spacing="1">车行坡道</text>
<line x1="233.5" y1="756" x2="233.5" y2="815" stroke="#9a9a9a" stroke-width="1" />
<line x1="233.5" y1="756" x2="232" y2="762" stroke="#9a9a9a" stroke-width="1" />
<line x1="1385" y1="493.7" x2="1445.5" y2="493.7" stroke="#e00000" stroke-width="1.4" />
<line x1="1445.5" y1="493" x2="1445.5" y2="538" stroke="#a80000" stroke-width="2" />
<line x1="1445.5" y1="700" x2="1445.5" y2="886" stroke="#a80000" stroke-width="2" />
<rect x="1407" y="768.5" width="38.5" height="118" fill="none" stroke="#e00000" stroke-width="1.3"/>
<line x1="1385" y1="891.5" x2="1407" y2="891.5" stroke="#e00000" stroke-width="1.4" />
<line x1="1407" y1="886" x2="1407" y2="892" stroke="#e00000" stroke-width="1.3" />
<line x1="1385.5" y1="692.6" x2="1519" y2="692.6" stroke="#e00000" stroke-width="1.2" stroke-dasharray="30 4 3 4"/>
<rect x="1386.5" y="538.5" width="58" height="161" fill="#000" stroke="#00ff00" stroke-width="3"/>
<line x1="1389" y1="548.5" x2="1441" y2="548.5" stroke="#8a8a8a" stroke-width="1" />
<line x1="1389" y1="558.15" x2="1441" y2="558.15" stroke="#8a8a8a" stroke-width="1" />
<line x1="1389" y1="567.8" x2="1441" y2="567.8" stroke="#8a8a8a" stroke-width="1" />
<line x1="1389" y1="577.4499999999999" x2="1441" y2="577.4499999999999" stroke="#8a8a8a" stroke-width="1" />
<line x1="1389" y1="587.0999999999999" x2="1441" y2="587.0999999999999" stroke="#8a8a8a" stroke-width="1" />
<line x1="1389" y1="596.7499999999999" x2="1441" y2="596.7499999999999" stroke="#8a8a8a" stroke-width="1" />
<line x1="1389" y1="606.3999999999999" x2="1441" y2="606.3999999999999" stroke="#8a8a8a" stroke-width="1" />
<line x1="1389" y1="616.0499999999998" x2="1441" y2="616.0499999999998" stroke="#8a8a8a" stroke-width="1" />
<line x1="1389" y1="625.6999999999998" x2="1441" y2="625.6999999999998" stroke="#8a8a8a" stroke-width="1" />
<line x1="1389" y1="635.3499999999998" x2="1441" y2="635.3499999999998" stroke="#8a8a8a" stroke-width="1" />
<line x1="1389" y1="644.9999999999998" x2="1441" y2="644.9999999999998" stroke="#8a8a8a" stroke-width="1" />
<line x1="1389" y1="654.6499999999997" x2="1441" y2="654.6499999999997" stroke="#8a8a8a" stroke-width="1" />
<line x1="1389" y1="664.2999999999997" x2="1441" y2="664.2999999999997" stroke="#8a8a8a" stroke-width="1" />
<line x1="1389" y1="673.9499999999997" x2="1441" y2="673.9499999999997" stroke="#8a8a8a" stroke-width="1" />
<line x1="1389" y1="683.5999999999997" x2="1441" y2="683.5999999999997" stroke="#8a8a8a" stroke-width="1" />
<line x1="1389" y1="693.2499999999997" x2="1441" y2="693.2499999999997" stroke="#8a8a8a" stroke-width="1" />
<line x1="1441.5" y1="541" x2="1441.5" y2="697" stroke="#3fae3f" stroke-width="1" />
<rect x="1393" y="607" width="44" height="12" fill="#000"/>
<text x="1394" y="617" font-size="10" fill="#ffff66" text-anchor="start" font-style="italic" font-family='"Liberation Sans","Noto Sans CJK SC",sans-serif' textLength="41" lengthAdjust="spacing" font-weight="normal">i=5/100</text>
<line x1="1394" y1="622.5" x2="1434" y2="622.5" stroke="#8a8a8a" stroke-width="1" />
<line x1="1430" y1="621" x2="1434" y2="622.5" stroke="#8a8a8a" stroke-width="1" />
<rect x="1385.5" y="715" width="11" height="46" fill="url(#hh)" stroke="#00ff00" stroke-width="1"/>
<line x1="1398" y1="715" x2="1414" y2="715" stroke="#8f8f8f" stroke-width="1" />
<line x1="1398" y1="761.5" x2="1414" y2="761.5" stroke="#8f8f8f" stroke-width="1" />
<line x1="1411.5" y1="712" x2="1411.5" y2="764" stroke="#8f8f8f" stroke-width="1" />
<line x1="1409.7" y1="716.8" x2="1413.3" y2="713.2" stroke="#a8a8a8" stroke-width="1" />
<line x1="1409.7" y1="763.3" x2="1413.3" y2="759.7" stroke="#a8a8a8" stroke-width="1" />
<text x="1409" y="746" font-size="7" fill="#ffff00" text-anchor="start" font-style="italic" font-family='"Liberation Sans","Noto Sans CJK SC",sans-serif' transform="rotate(-90 1409 746)" font-weight="bold" letter-spacing="-0.3">6000</text>
<text x="1420" y="748.5" font-size="5.5" fill="#ffff66" text-anchor="start" font-style="normal" font-weight="bold">彩钢雨篷</text>
<text x="1386" y="780" font-size="7" fill="#ffff00" text-anchor="start" font-style="italic" font-family='"Liberation Sans","Noto Sans CJK SC",sans-serif' font-weight="bold" letter-spacing="-0.3">1500</text>
<line x1="1385" y1="781.5" x2="1398" y2="781.5" stroke="#8f8f8f" stroke-width="1" />
<line x1="1396.5" y1="762" x2="1396.5" y2="785" stroke="#8f8f8f" stroke-width="1" />
<text x="1437" y="851" font-size="6" fill="#ffff66" text-anchor="start" font-style="normal" transform="rotate(-90 1437 851)" font-weight="bold" letter-spacing="1">车行坡道</text>
<line x1="1425.5" y1="798" x2="1425.5" y2="857" stroke="#9a9a9a" stroke-width="1" />
<line x1="1425.5" y1="798" x2="1427" y2="804" stroke="#9a9a9a" stroke-width="1" />
<line x1="1447" y1="493.7" x2="1504" y2="493.7" stroke="#8f8f8f" stroke-width="1" />
<line x1="1501.5" y1="491" x2="1501.5" y2="894" stroke="#8f8f8f" stroke-width="1" />
<line x1="1499.7" y1="495.5" x2="1503.3" y2="491.9" stroke="#a8a8a8" stroke-width="1" />
<line x1="1499.7" y1="892.8" x2="1503.3" y2="889.2" stroke="#a8a8a8" stroke-width="1" />
<line x1="1409" y1="891" x2="1504" y2="891" stroke="#8f8f8f" stroke-width="1" />
<line x1="1481.5" y1="536" x2="1481.5" y2="703" stroke="#8f8f8f" stroke-width="1" />
<line x1="1479.7" y1="540.3" x2="1483.3" y2="536.7" stroke="#a8a8a8" stroke-width="1" />
<line x1="1479.7" y1="702.3" x2="1483.3" y2="698.7" stroke="#a8a8a8" stroke-width="1" />
<line x1="1448" y1="538.5" x2="1485" y2="538.5" stroke="#8f8f8f" stroke-width="1" />
<line x1="1448" y1="700.5" x2="1485" y2="700.5" stroke="#8f8f8f" stroke-width="1" />
<line x1="1481.5" y1="766" x2="1481.5" y2="890" stroke="#8f8f8f" stroke-width="1" />
<line x1="1479.7" y1="770.3" x2="1483.3" y2="766.7" stroke="#a8a8a8" stroke-width="1" />
<line x1="1479.7" y1="887.8" x2="1483.3" y2="884.2" stroke="#a8a8a8" stroke-width="1" />
<line x1="1447" y1="768.5" x2="1485" y2="768.5" stroke="#8f8f8f" stroke-width="1" />
<line x1="1447" y1="886" x2="1485" y2="886" stroke="#8f8f8f" stroke-width="1" />
<text x="1479" y="628" font-size="7" fill="#ffff00" text-anchor="start" font-style="italic" font-family='"Liberation Sans","Noto Sans CJK SC",sans-serif' transform="rotate(-90 1479 628)" font-weight="bold" letter-spacing="-0.3">21200</text>
<text x="1499" y="702" font-size="7" fill="#ffff00" text-anchor="start" font-style="italic" font-family='"Liberation Sans","Noto Sans CJK SC",sans-serif' transform="rotate(-90 1499 702)" font-weight="bold" letter-spacing="-0.3">52000</text>
<text x="1479" y="837" font-size="7" fill="#ffff00" text-anchor="start" font-style="italic" font-family='"Liberation Sans","Noto Sans CJK SC",sans-serif' transform="rotate(-90 1479 837)" font-weight="bold" letter-spacing="-0.3">15000</text>
<text x="1479" y="894" font-size="6" fill="#ffff00" text-anchor="start" font-style="italic" font-family='"Liberation Sans","Noto Sans CJK SC",sans-serif' transform="rotate(-90 1479 894)" font-weight="bold" letter-spacing="-0.3">400</text>
<text x="1386" y="508" font-size="7" fill="#ffff00" text-anchor="start" font-style="italic" font-family='"Liberation Sans","Noto Sans CJK SC",sans-serif' font-weight="bold" letter-spacing="-0.3">210</text>
<text x="1408" y="508" font-size="7" fill="#ffff00" text-anchor="start" font-style="italic" font-family='"Liberation Sans","Noto Sans CJK SC",sans-serif' font-weight="bold" letter-spacing="-0.3">7790</text>
<line x1="1385" y1="509.5" x2="1447" y2="509.5" stroke="#8f8f8f" stroke-width="1" />
<line x1="1383.7" y1="511.3" x2="1387.3" y2="507.7" stroke="#a8a8a8" stroke-width="1" />
<line x1="1443.7" y1="511.3" x2="1447.3" y2="507.7" stroke="#a8a8a8" stroke-width="1" />
<text x="1454" y="521" font-size="5.5" fill="#ffff66" text-anchor="start" font-style="normal" font-family='"Liberation Sans","Noto Sans CJK SC",sans-serif' textLength="65" lengthAdjust="spacingAndGlyphs" font-weight="bold">女儿墙,顶标高<tspan font-size="8.5" font-style="italic">7.000</tspan></text>
<line x1="1435" y1="524.5" x2="1516" y2="524.5" stroke="#8f8f8f" stroke-width="1" />
<line x1="1435" y1="524.5" x2="1433" y2="538" stroke="#8f8f8f" stroke-width="1" />
<text x="1448" y="558" font-size="8" fill="#ffff66" text-anchor="start" font-style="italic" font-family='"Liberation Sans","Noto Sans CJK SC",sans-serif' transform="rotate(90 1448 558)" font-weight="bold">1%</text>
<text x="1448" y="576" font-size="8" fill="#ffff66" text-anchor="start" font-style="italic" font-family='"Liberation Sans","Noto Sans CJK SC",sans-serif' transform="rotate(90 1448 576)" font-weight="bold">1%</text>
<text x="1466" y="597.5" font-size="8.5" fill="#ffff66" text-anchor="start" font-style="italic" font-family='"Liberation Sans","Noto Sans CJK SC",sans-serif' textLength="57.5" lengthAdjust="spacingAndGlyphs" font-weight="bold">Φ120PVC<tspan font-size="5.5" font-style="normal">落水管</tspan></text>
<line x1="1446" y1="600.5" x2="1522" y2="600.5" stroke="#8f8f8f" stroke-width="1" />
<text x="1453" y="645.5" font-size="8.5" fill="#ffff66" text-anchor="start" font-style="italic" font-family='"Liberation Sans","Noto Sans CJK SC",sans-serif' textLength="52.5" lengthAdjust="spacingAndGlyphs" font-weight="bold">50<tspan font-size="5.5" font-style="normal">厚彩钢夹芯外墙</tspan></text>
<line x1="1446" y1="647.5" x2="1506" y2="647.5" stroke="#8f8f8f" stroke-width="1" />
<text x="1454" y="675" font-size="7" fill="#e07820" text-anchor="start" font-style="normal" >6. 477</text>
<line x1="1451" y1="678.5" x2="1479" y2="678.5" stroke="#a0a0a0" stroke-width="1" />
<polygon points="1453,679 1461,679 1457,683.5" fill="#a0a0a0"/>
<line x1="1446" y1="683.5" x2="1457" y2="683.5" stroke="#a0a0a0" stroke-width="1" />
<text x="1052" y="453" font-size="8" fill="#ffff66" text-anchor="start" font-style="italic" font-family='"Liberation Sans","Noto Sans CJK SC",sans-serif' textLength="116" lengthAdjust="spacingAndGlyphs" font-weight="bold">Φ150PVC<tspan font-size="5.5" font-style="normal">落水管 , 每隔一柱距布置一根</tspan></text>
<line x1="1040" y1="456.5" x2="1172" y2="456.5" stroke="#8f8f8f" stroke-width="1" />
<line x1="1040" y1="456.5" x2="1032" y2="483" stroke="#8f8f8f" stroke-width="1" />
<text x="1188" y="452.5" font-size="5.5" fill="#ffff66" text-anchor="start" font-style="normal" textLength="23.5" lengthAdjust="spacingAndGlyphs" font-weight="bold">彩钢天沟</text>
<line x1="1178" y1="456.5" x2="1212" y2="456.5" stroke="#8f8f8f" stroke-width="1" />
<line x1="1178" y1="456.5" x2="1170" y2="483" stroke="#8f8f8f" stroke-width="1" />
<text x="1257" y="452.5" font-size="5.5" fill="#ffff66" text-anchor="start" font-style="normal" font-family='"Liberation Sans","Noto Sans CJK SC",sans-serif' textLength="84.5" lengthAdjust="spacingAndGlyphs" font-weight="bold">彩钢板+<tspan font-size="8" font-style="italic">50</tspan>厚保温棉+ 镀丝网</text>
<text x="1291" y="466" font-size="5.5" fill="#ffff66" text-anchor="start" font-style="normal" textLength="46.5" lengthAdjust="spacingAndGlyphs" font-weight="bold">屋面颜色由业主定</text>
<line x1="1240" y1="456.5" x2="1342" y2="456.5" stroke="#8f8f8f" stroke-width="1" />
<line x1="1240" y1="456.5" x2="1232" y2="500" stroke="#8f8f8f" stroke-width="1" />
<text x="1440" y="452.5" font-size="5.5" fill="#ffff66" text-anchor="start" font-style="normal" font-family='"Liberation Sans","Noto Sans CJK SC",sans-serif' textLength="53" lengthAdjust="spacingAndGlyphs" font-weight="bold"><tspan font-size="8.5" font-style="italic">50</tspan>厚彩钢夹芯屋面</text>
<line x1="1437" y1="456.5" x2="1493" y2="456.5" stroke="#8f8f8f" stroke-width="1" />
<line x1="1437" y1="456.5" x2="1425" y2="547" stroke="#8f8f8f" stroke-width="1" />
<text x="784" y="1146.2" font-size="16" fill="#f4f482" text-anchor="start" font-style="normal" textLength="83.5" lengthAdjust="spacing">屋面平面图</text>
<text x="884" y="1145.4" font-size="8" fill="#f4f482" text-anchor="start" font-style="normal" textLength="20.5" lengthAdjust="spacingAndGlyphs">1 : 200</text>
<line x1="782.7" y1="1154.5" x2="906.2" y2="1154.5" stroke="#858585" stroke-width="3" />
<line x1="782.7" y1="1157.4" x2="906.2" y2="1157.4" stroke="#858585" stroke-width="1.2" />
<text x="1620" y="1139" font-size="9.5" fill="#ff0000" text-anchor="start" font-style="normal" >屋面平面图</text>
<text x="1614" y="232" font-size="9.5" fill="#ff0000" text-anchor="start" font-style="normal" >建筑底层平面</text>
<circle cx="1524.3" cy="401.3" r="14.4" fill="none" stroke="#8c8c8c" stroke-width="1.2"/>
<polygon points="1518.7,388.4 1526.3,414.8 1532.1,412.5" fill="#7c7c7c"/>
<line x1="1518.7" y1="388.4" x2="1532.1" y2="412.5" stroke="#9a9a9a" stroke-width="1" />
<line x1="1518.7" y1="388.4" x2="1526.3" y2="414.8" stroke="#9a9a9a" stroke-width="1" />
<text x="1513.5" y="386" font-size="6.5" fill="#909090" text-anchor="start" font-style="normal" transform="rotate(-20 1513.5 386)" >N</text>
<text x="1569" y="379" font-size="5.5" fill="#c0c0c0" text-anchor="start" font-style="italic" >说明</text>
<text x="1569" y="388" font-size="4" fill="#c0c0c0" text-anchor="start" font-style="italic" >图例说明:</text>
<rect x="55.5" y="1257.5" width="9" height="9" fill="none" stroke="#e6e6e6" stroke-width="1"/>
<line x1="59.8" y1="1213" x2="59.8" y2="1262.4" stroke="#e6e6e6" stroke-width="1.2" />
<line x1="59.8" y1="1262.4" x2="110" y2="1262.4" stroke="#e6e6e6" stroke-width="1.2" />
<line x1="62" y1="1195" x2="67" y2="1201" stroke="#e6e6e6" stroke-width="1" />
<line x1="72" y1="1195" x2="67" y2="1201" stroke="#e6e6e6" stroke-width="1" />
<line x1="67" y1="1201" x2="67" y2="1207" stroke="#e6e6e6" stroke-width="1" />
<line x1="114" y1="1248" x2="127" y2="1261" stroke="#e6e6e6" stroke-width="1" />
<line x1="127" y1="1248" x2="114" y2="1261" stroke="#e6e6e6" stroke-width="1" />
<line x1="600.5" y1="1253" x2="600.5" y2="1277" stroke="#e0e0e0" stroke-width="1" />
</svg>
<svg class="a" style="left:1487px;top:10px" width="160" height="190" viewBox="1520 175 160 190" font-family='"Liberation Sans","Noto Sans CJK SC",sans-serif'><rect x="1562" y="221" width="52" height="52" fill="#a2a2a2"/><rect x="1572" y="231" width="32" height="32" fill="#8d9096"/><text x="1588" y="258" font-size="29" fill="#5a5f68" text-anchor="middle" font-weight="300">上</text><g font-size="19" fill="#8e8e8e" text-anchor="middle"><text x="1588" y="199">北</text><text x="1588" y="312">南</text><text x="1531.5" y="255">西</text><text x="1644" y="255">东</text></g><rect x="1559.5" y="334.5" width="57" height="17" rx="4" fill="#9a9ca6" fill-opacity="0.85"/><line x1="1559" y1="346" x2="1617" y2="346" stroke="#b0b0b6" stroke-width="1.5"/><text x="1581" y="347.5" font-size="10.5" fill="#74767e" text-anchor="middle" letter-spacing="1">未命名</text><polygon points="1604,340.5 1613,340.5 1608.5,347" fill="none" stroke="#74767e" stroke-width="1"/></svg>
<div class="a" style="left:345px;top:1097px;width:62px;height:26px;background:#232832;border-radius:4px 0 0 4px"></div><div class="a" style="left:403px;top:1098px;width:889px;height:25px;background:#b2b2b2;border-radius:3px 4px 0 3px"></div><div class="a" style="left:403px;top:1102px;width:858px;height:3px;background:#c9c9c9"></div><div class="a" style="left:1258px;top:1102px;width:4px;height:22px;background:#c9c9c9"></div><div class="a" style="left:1273.5px;top:1097px;width:1px;height:27px;background:#d8d8d8"></div><div class="a" style="left:566.5px;top:1097px;width:1px;height:15px;background:#e8e8e8"></div><svg class="a" style="left:345px;top:1097px" width="950" height="27"><g fill="#aab0bb"><rect x="4" y="4" width="1.5" height="1.5"/><rect x="7" y="4" width="1.5" height="1.5"/></g><rect x="4" y="4" width="1.4" height="1.4" fill="#aab0bb"/><rect x="4" y="7" width="1.4" height="1.4" fill="#aab0bb"/><rect x="4" y="10" width="1.4" height="1.4" fill="#aab0bb"/><rect x="4" y="13" width="1.4" height="1.4" fill="#aab0bb"/><rect x="4" y="16" width="1.4" height="1.4" fill="#aab0bb"/><rect x="4" y="19" width="1.4" height="1.4" fill="#aab0bb"/><rect x="4" y="22" width="1.4" height="1.4" fill="#aab0bb"/><rect x="7" y="4" width="1.4" height="1.4" fill="#aab0bb"/><rect x="7" y="7" width="1.4" height="1.4" fill="#aab0bb"/><rect x="7" y="10" width="1.4" height="1.4" fill="#aab0bb"/><rect x="7" y="13" width="1.4" height="1.4" fill="#aab0bb"/><rect x="7" y="16" width="1.4" height="1.4" fill="#aab0bb"/><rect x="7" y="19" width="1.4" height="1.4" fill="#aab0bb"/><rect x="7" y="22" width="1.4" height="1.4" fill="#aab0bb"/><g stroke="#c8ccd4" stroke-width="1.8"><line x1="16" y1="9" x2="25" y2="18"/><line x1="25" y1="9" x2="16" y2="18"/></g><line x1="38.5" y1="21.5" x2="46" y2="13" stroke="#c8ccd4" stroke-width="2.8" stroke-linecap="round"/><circle cx="47.5" cy="10.5" r="4.2" fill="#c8ccd4"/><polygon points="47,10.5 50,4 54,8" fill="#262b35"/><rect x="63.5" y="8.5" width="13" height="10" fill="#c9c9c9" stroke="#50545c" stroke-width="1.4"/><path d="M66 11.5 l2 2 l-2 2 M69.5 15.5 h3" stroke="#40444c" stroke-width="1" fill="none"/><polygon points="79.5,11.5 86.5,11.5 83,15.5" fill="#50545c"/><text x="94" y="18" font-size="12" font-style="italic" fill="#74777d" font-family='"Liberation Sans","Noto Sans CJK SC",sans-serif' letter-spacing="0.5">键入命令</text><polygon points="935.5,16 942.5,16 939,11.5" fill="#50545c"/><circle cx="939" cy="25" r="2.5" fill="none" stroke="#8a8d94"/><text x="772" y="25" font-size="5" fill="#e0e0e0" font-family='"Liberation Sans","Noto Sans CJK SC",sans-serif'>说明</text></svg>
</div>
<svg class="a" style="left:0;top:1292px" width="260" height="27"><polygon points="45,25 56,0 104,0 93,25" fill="#3b4453"/><g stroke="#4a5365" stroke-width="1"><line x1="164" y1="21" x2="171" y2="5"/><line x1="206" y1="21" x2="213" y2="5"/></g><g stroke="#e9ebee" stroke-width="2"><line x1="20" y1="8" x2="36" y2="8"/><line x1="20" y1="13" x2="36" y2="13"/><line x1="20" y1="18" x2="36" y2="18"/><line x1="181" y1="13" x2="195" y2="13"/><line x1="188" y1="6" x2="188" y2="20"/></g></svg>
<div class="t" style="left:62px;top:1299.5px;font-size:12px;color:#ffffff;font-weight:bold">模型</div>
<div class="t" style="left:110px;top:1299.5px;font-size:12px;color:#e9ebee;">Layout1</div>
<div class="a" style="left:5px;top:1323px;width:484px;height:24px;background:#3b4453"></div>
<div class="a" style="left:493px;top:1323px;width:140px;height:24px;background:#3b4453"></div>
<div class="a" style="left:636px;top:1323px;width:30px;height:24px;background:#3b4453"></div>
<div class="a" style="left:669px;top:1323px;width:64px;height:24px;background:#3b4453"></div>
<div class="a" style="left:736px;top:1323px;width:153px;height:24px;background:#3b4453"></div>
<div class="a" style="left:892px;top:1323px;width:62px;height:24px;background:#3b4453"></div>
<div class="a" style="left:957px;top:1323px;width:22px;height:24px;background:#3b4453"></div>
<div class="a" style="left:982px;top:1323px;width:22px;height:24px;background:#3b4453"></div>
<div class="a" style="left:1007px;top:1323px;width:22px;height:24px;background:#3b4453"></div>
<div class="a" style="left:1032px;top:1323px;width:38px;height:24px;background:#3b4453"></div>
<div class="a" style="left:1074px;top:1323px;width:104px;height:24px;background:#3b4453"></div>
<div class="a" style="left:1181px;top:1323px;width:146px;height:24px;background:#3b4453"></div>
<div class="a" style="left:1330px;top:1323px;width:39px;height:24px;background:#3b4453"></div>
<div class="a" style="left:1371px;top:1323px;width:24px;height:24px;background:#3b4453"></div>
<div class="a" style="left:1398px;top:1323px;width:96px;height:24px;background:#3b4453"></div>
<div class="a" style="left:1496px;top:1323px;width:24px;height:24px;background:#3b4453"></div>
<div class="a" style="left:1523px;top:1323px;width:40px;height:24px;background:#3b4453"></div>
<div class="a" style="left:1564px;top:1323px;width:24px;height:24px;background:#3b4453"></div>
<div class="a" style="left:1591px;top:1323px;width:24px;height:24px;background:#3b4453"></div>
<div class="a" style="left:1618px;top:1323px;width:30px;height:24px;background:#3b4453"></div>
<div class="a" style="left:1651px;top:1323px;width:24px;height:24px;background:#3b4453"></div>
<div class="a" style="left:1677px;top:1323px;width:24px;height:24px;background:#3b4453"></div>
<div class="a" style="left:762px;top:1323px;width:23px;height:24px;background:#5d8fc9"></div>
<div class="a" style="left:786px;top:1323px;width:23px;height:24px;background:#5d8fc9"></div>
<div class="a" style="left:916px;top:1323px;width:23px;height:24px;background:#5d8fc9"></div>
<div class="a" style="left:982px;top:1323px;width:23px;height:24px;background:#5d8fc9"></div>
<div class="a" style="left:1075px;top:1323px;width:23px;height:24px;background:#5d8fc9"></div>
<div class="a" style="left:1139px;top:1323px;width:23px;height:24px;background:#5d8fc9"></div>
<div class="a" style="left:1182px;top:1323px;width:23px;height:24px;background:#5d8fc9"></div>
<div class="a" style="left:1591px;top:1323px;width:24px;height:24px;background:#5d8fc9"></div>
<div class="t" style="left:493px;width:135px;text-align:right;top:1328.5px;font-size:13px;color:#e8eaee;letter-spacing:-0.2px">323499, 396845, 0</div>
<div class="t" style="left:639px;top:1329px;font-size:12px;color:#e8eaee">模型</div>
<div class="t" style="left:1258px;top:1328.5px;font-size:12.5px;color:#e8eaee;letter-spacing:-0.75px">1:1 / 100%</div>
<div class="t" style="left:1428px;top:1329px;font-size:12px;color:#e8eaee">小数</div>
<svg class="a" style="left:0;top:1319px" width="1707" height="32" viewBox="0 1319 1707 32">
<path d="M672 1331H688M672 1339H688M676 1327V1343M684 1327V1343" fill="none" stroke="#e4e6ea" stroke-width="1.2" />
<rect x="699" y="1328.5" width="1.6" height="1.6" fill="#e4e6ea" stroke="none" stroke-width="1" /><rect x="699" y="1334" width="1.6" height="1.6" fill="#e4e6ea" stroke="none" stroke-width="1" /><rect x="699" y="1339.5" width="1.6" height="1.6" fill="#e4e6ea" stroke="none" stroke-width="1" /><rect x="704.5" y="1328.5" width="1.6" height="1.6" fill="#e4e6ea" stroke="none" stroke-width="1" /><rect x="704.5" y="1334" width="1.6" height="1.6" fill="#e4e6ea" stroke="none" stroke-width="1" /><rect x="704.5" y="1339.5" width="1.6" height="1.6" fill="#e4e6ea" stroke="none" stroke-width="1" /><rect x="710" y="1328.5" width="1.6" height="1.6" fill="#e4e6ea" stroke="none" stroke-width="1" /><rect x="710" y="1334" width="1.6" height="1.6" fill="#e4e6ea" stroke="none" stroke-width="1" /><rect x="710" y="1339.5" width="1.6" height="1.6" fill="#e4e6ea" stroke="none" stroke-width="1" />
<polygon points="721.5,1333.5 728.5,1333.5 725,1337.5" fill="#d3d6dc"/>
<rect x="740" y="1337" width="7" height="6" fill="#e4e6ea" stroke="none" stroke-width="1" /><path d="M747 1337V1329H754V1334H749" fill="none" stroke="#e4e6ea" stroke-width="1.3" />
<path d="M766 1329H772M769 1326V1332" fill="none" stroke="#fff" stroke-width="1.3" /><rect x="772" y="1336" width="9" height="4.5" fill="#fff" stroke="none" stroke-width="1" />
<path d="M791 1326V1343H807" fill="none" stroke="#fff" stroke-width="1.5" /><path d="M791 1337H797V1343" fill="none" stroke="#fff" stroke-width="1" />
<circle cx="822" cy="1336" r="6" fill="none" stroke="#e4e6ea" stroke-width="1.3"/><path d="M814 1341L830 1327" fill="none" stroke="#e4e6ea" stroke-width="1.2" /><path d="M822 1336H830" fill="none" stroke="#e4e6ea" stroke-width="1" />
<polygon points="838.5,1333.5 845.5,1333.5 842,1337.5" fill="#d3d6dc"/>
<path d="M855 1327L867 1343" fill="none" stroke="#e9434f" stroke-width="1.2" /><path d="M861 1325V1345" fill="none" stroke="#49c46a" stroke-width="1.3" /><circle cx="861" cy="1335" r="1.6" fill="none" stroke="#fff" stroke-width="1"/>
<polygon points="878.5,1333.5 885.5,1333.5 882,1337.5" fill="#d3d6dc"/>
<path d="M895 1343H911M896 1342L911 1327" fill="none" stroke="#e4e6ea" stroke-width="1.3" /><rect x="901.5" y="1333" width="3" height="3" fill="#e4e6ea" stroke="none" stroke-width="1" />
<rect x="920.5" y="1328.5" width="14" height="14" fill="none" stroke="#fff" stroke-width="1.4" /><rect x="918" y="1326" width="4.5" height="4.5" fill="#5d8fc9" stroke="#fff" stroke-width="1.2" />
<polygon points="943.5,1333.5 950.5,1333.5 947,1337.5" fill="#d3d6dc"/>
<path d="M960 1329H976" fill="none" stroke="#e4e6ea" stroke-width="1" /><path d="M960 1333.5H976" fill="none" stroke="#e4e6ea" stroke-width="2" /><path d="M960 1339.5H976" fill="none" stroke="#e4e6ea" stroke-width="3.4" /><rect x="968" y="1326" width="8" height="16" fill="#3b4453" stroke="none" stroke-width="0" opacity=".55"/>
<rect x="986" y="1328" width="15" height="15" fill="none" stroke="#fff" stroke-width="1.3" /><rect x="987.0" y="1329.0" width="3.25" height="3.25" fill="#fff" stroke="none" stroke-width="1" /><rect x="987.0" y="1335.5" width="3.25" height="3.25" fill="#fff" stroke="none" stroke-width="1" /><rect x="990.25" y="1332.25" width="3.25" height="3.25" fill="#fff" stroke="none" stroke-width="1" /><rect x="990.25" y="1338.75" width="3.25" height="3.25" fill="#fff" stroke="none" stroke-width="1" /><rect x="993.5" y="1329.0" width="3.25" height="3.25" fill="#fff" stroke="none" stroke-width="1" /><rect x="993.5" y="1335.5" width="3.25" height="3.25" fill="#fff" stroke="none" stroke-width="1" /><rect x="996.75" y="1332.25" width="3.25" height="3.25" fill="#fff" stroke="none" stroke-width="1" /><rect x="996.75" y="1338.75" width="3.25" height="3.25" fill="#fff" stroke="none" stroke-width="1" />
<rect x="1014" y="1332" width="11" height="11" fill="#7ed29a" stroke="none" stroke-width="1" /><path d="M1009 1330H1015M1012 1327V1333" fill="none" stroke="#e4e6ea" stroke-width="1.2" /><path d="M1014 1343V1332H1025" fill="none" stroke="#e4e6ea" stroke-width="1" />
<path d="M1037 1333H1048V1344H1037ZM1037 1333L1041 1328H1052L1048 1333M1052 1328V1339L1048 1344" fill="none" stroke="#e4e6ea" stroke-width="1.2" /><rect x="1035" y="1341" width="4.5" height="4.5" fill="#3b4453" stroke="#f0a868" stroke-width="1.2" />
<polygon points="1059.5,1333.5 1066.5,1333.5 1063,1337.5" fill="#d3d6dc"/>
<path d="M1080 1328V1342H1095" fill="none" stroke="#fff" stroke-width="1.5" /><path d="M1080 1325L1077.5 1329.5H1082.5Z" fill="#fff" stroke="none" stroke-width="1" /><path d="M1097.5 1342L1093 1339.5V1344.5Z" fill="#fff" stroke="none" stroke-width="1" /><path d="M1089 1327L1085.5 1333H1088L1086.5 1338L1091.5 1331.5H1088.5L1090.5 1327Z" fill="#fff" stroke="none" stroke-width="1" />
<path d="M1103 1332H1115V1343H1103ZM1103 1332L1107 1328H1119L1115 1332M1119 1328V1339L1115 1343" fill="none" stroke="#e4e6ea" stroke-width="1.2" stroke-dasharray="3 1.6"/><rect x="1101.5" y="1330.5" width="3" height="3" fill="#5ab4f2" stroke="none" stroke-width="1" /><rect x="1113.5" y="1330.5" width="3" height="3" fill="#5ab4f2" stroke="none" stroke-width="1" /><rect x="1101.5" y="1341.5" width="3" height="3" fill="#5ab4f2" stroke="none" stroke-width="1" /><rect x="1113.5" y="1341.5" width="3" height="3" fill="#5ab4f2" stroke="none" stroke-width="1" />
<polygon points="1126.5,1333.5 1133.5,1333.5 1130,1337.5" fill="#d3d6dc"/>
<path d="M1150 1327L1142 1341H1158ZM1150 1335V1327M1150 1335L1142 1341M1150 1335L1158 1341" fill="none" stroke="#fff" stroke-width="1.2" /><circle cx="1150" cy="1327" r="1.8" fill="#5d8fc9" stroke="#fff" stroke-width="1"/><circle cx="1142.5" cy="1341" r="1.8" fill="#5d8fc9" stroke="#fff" stroke-width="1"/><circle cx="1157.5" cy="1341" r="1.8" fill="#5d8fc9" stroke="#fff" stroke-width="1"/><circle cx="1150" cy="1335" r="1.5" fill="#5d8fc9" stroke="#fff" stroke-width="1"/>
<polygon points="1166.5,1333.5 1173.5,1333.5 1170,1337.5" fill="#d3d6dc"/>
<path d="M1192 1326L1194.2 1336L1199 1344L1192 1340L1185 1344L1189.8 1336Z" fill="#fff" stroke="none" stroke-width="1" /><circle cx="1199.5" cy="1329" r="2" fill="none" stroke="#fff" stroke-width="1.1"/>
<path d="M1215 1326L1217.2 1336L1222 1344L1215 1340L1208 1344L1212.8 1336Z" fill="#e4e6ea" stroke="none" stroke-width="1" /><path d="M1222 1325L1219 1330H1221L1219.5 1334L1224 1328.5H1221.5L1223.5 1325Z" fill="#e4e6ea" stroke="none" stroke-width="1" />
<path d="M1241 1326L1243.2 1336L1248 1344L1241 1340L1234 1344L1238.8 1336Z" fill="#e4e6ea" stroke="none" stroke-width="1" />
<polygon points="1316.5,1333.5 1323.5,1333.5 1320,1337.5" fill="#d3d6dc"/>
<circle cx="1341.5" cy="1335" r="4.6" fill="none" stroke="#e4e6ea" stroke-width="3"/><rect x="1340.3" y="1326.6" width="2.4" height="3.4" fill="#e4e6ea" transform="rotate(0 1341.5 1335)"/><rect x="1340.3" y="1326.6" width="2.4" height="3.4" fill="#e4e6ea" transform="rotate(45 1341.5 1335)"/><rect x="1340.3" y="1326.6" width="2.4" height="3.4" fill="#e4e6ea" transform="rotate(90 1341.5 1335)"/><rect x="1340.3" y="1326.6" width="2.4" height="3.4" fill="#e4e6ea" transform="rotate(135 1341.5 1335)"/><rect x="1340.3" y="1326.6" width="2.4" height="3.4" fill="#e4e6ea" transform="rotate(180 1341.5 1335)"/><rect x="1340.3" y="1326.6" width="2.4" height="3.4" fill="#e4e6ea" transform="rotate(225 1341.5 1335)"/><rect x="1340.3" y="1326.6" width="2.4" height="3.4" fill="#e4e6ea" transform="rotate(270 1341.5 1335)"/><rect x="1340.3" y="1326.6" width="2.4" height="3.4" fill="#e4e6ea" transform="rotate(315 1341.5 1335)"/>
<polygon points="1358.5,1333.5 1365.5,1333.5 1362,1337.5" fill="#d3d6dc"/>
<path d="M1375 1335H1391M1383 1327V1343" fill="none" stroke="#e4e6ea" stroke-width="1.6" />
<rect x="1405.5" y="1326" width="5.5" height="18" fill="#e4e6ea" stroke="none" stroke-width="1" /><path d="M1407 1329H1414M1407 1333H1412M1407 1337H1414M1407 1341H1412" fill="none" stroke="#e4e6ea" stroke-width="1.3" />
<polygon points="1482.5,1333.5 1489.5,1333.5 1486,1337.5" fill="#d3d6dc"/>
<rect x="1502.5" y="1327.5" width="11" height="15" fill="none" stroke="#e4e6ea" stroke-width="1.3" /><rect x="1502.5" y="1327.5" width="11" height="3" fill="#e4e6ea" stroke="none" stroke-width="1" /><path d="M1504.5 1334H1505.5M1507 1334H1511.5M1504.5 1337H1505.5M1507 1337H1511.5M1504.5 1340H1505.5M1507 1340H1511.5" fill="none" stroke="#e4e6ea" stroke-width="1.1" />
<path d="M1540 1338H1527.5V1327.5H1541.5V1333" fill="none" stroke="#e4e6ea" stroke-width="1.3" /><rect x="1527.5" y="1327.5" width="14" height="2.5" fill="#e4e6ea" stroke="none" stroke-width="1" /><rect x="1535" y="1337" width="6.5" height="5.5" fill="#e4e6ea" stroke="none" stroke-width="1" /><path d="M1539.5 1337V1334.5A1.8 1.8 0 0 1 1543 1334.5" fill="none" stroke="#e4e6ea" stroke-width="1.1" />
<polygon points="1551.5,1333.5 1558.5,1333.5 1555,1337.5" fill="#d3d6dc"/>
<rect x="1568.5" y="1327.5" width="6" height="6" fill="none" stroke="#e4e6ea" stroke-width="1.2" /><circle cx="1582" cy="1333" r="3" fill="none" stroke="#e4e6ea" stroke-width="1.2"/><path d="M1574.5 1336.5L1578 1343H1571Z" fill="none" stroke="#e4e6ea" stroke-width="1.1" />
<circle cx="1603" cy="1335" r="7.5" fill="none" stroke="#fff" stroke-width="1.5"/><path d="M1599.5 1340L1607 1331L1608.5 1332.5Z" fill="#fff" stroke="none" stroke-width="1" />
<path d="M1625 1327H1635L1639 1331V1337H1625Z" fill="#3d8fd8" stroke="none" stroke-width="1" /><path d="M1625 1332H1639M1630 1327V1340" fill="none" stroke="#fff" stroke-width="1" /><circle cx="1630" cy="1332" r="1.5" fill="#fff" stroke="none" stroke-width="0"/><rect x="1625" y="1338" width="9" height="6" fill="#f0b030" stroke="none" stroke-width="1" /><path d="M1634.5 1341L1637 1343.5L1641 1338.5" fill="none" stroke="#49c46a" stroke-width="1.8" />
<rect x="1655.5" y="1328.5" width="14" height="12" fill="none" stroke="#e4e6ea" stroke-width="1.3" /><path d="M1664 1330.5H1667.5V1334M1667.5 1330.5L1664 1334M1661 1338.5H1657.5V1335M1657.5 1338.5L1661 1335" fill="none" stroke="#e4e6ea" stroke-width="1.1" />
<path d="M1681 1329H1697M1681 1335H1697M1681 1341H1697" fill="none" stroke="#e4e6ea" stroke-width="1.8" />
</svg></div></div></body></html>
